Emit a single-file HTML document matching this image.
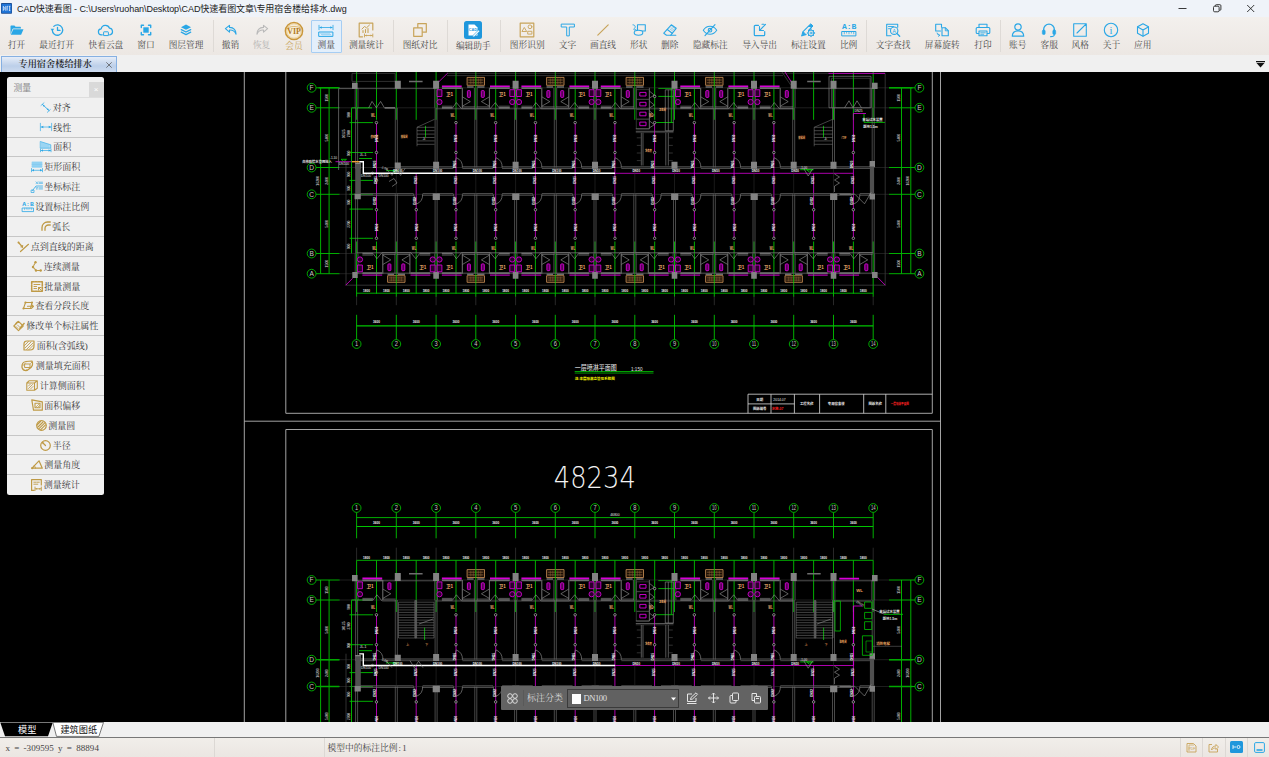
<!DOCTYPE html>
<html lang="zh"><head><meta charset="utf-8"><title>CAD快速看图</title>
<style>

*{box-sizing:border-box;margin:0;padding:0}
html,body{width:1269px;height:757px;overflow:hidden;background:#000}
body{position:relative;font-family:"Liberation Sans","Noto Sans CJK SC",sans-serif;}
.abs{position:absolute}
#title{left:0;top:0;width:1269px;height:17px;background:#eff3f9}
#title .t{position:absolute;left:17px;top:0.6px;height:17px;line-height:16px;font-size:9px;color:#1a1a1a;white-space:nowrap;letter-spacing:-0.06px}
#tool{left:0;top:17px;width:1269px;height:38.5px;background:linear-gradient(#f3f0ed,#ece7e3)}
.ti{position:absolute;top:0;height:38px;width:60px;margin-left:-30px;text-align:center}
.ti svg{position:absolute;left:50%;top:12.5px;transform:translate(-50%,-50%);overflow:visible}
.ti span{position:absolute;left:-10px;right:-10px;top:21.5px;line-height:12px;font-size:8.7px;color:#4a4a4a;font-family:"Liberation Serif","Noto Serif CJK SC",serif;white-space:nowrap}
.sep{position:absolute;top:3px;width:1px;height:32px;background:#dedad6}
#tabs{left:0;top:55px;width:1269px;height:17px;background:#f0f0f0}
#tab1{position:absolute;left:1px;top:0.8px;width:115.8px;height:16.2px;border:1px solid #86b0e2;border-bottom:none;background:linear-gradient(#e6edf8,#bccfe9 60%,#cddbef);font-family:"Liberation Serif","Noto Serif CJK SC",serif;font-weight:600;font-size:9.2px;line-height:13px;color:#222;white-space:nowrap}
#canvas{left:0;top:72px;width:1269px;height:650px;background:#000;overflow:hidden}
#btabs{left:0;top:722px;width:1269px;height:15.7px;background:#f0f0f0;border-bottom:1px solid #777}
#status{left:0;top:737.7px;width:1269px;height:19.3px;background:linear-gradient(#f1eeea,#ebe6e2)}
#status .s{position:absolute;top:1.3px;height:18px;line-height:18px;font-size:8.6px;color:#444;white-space:nowrap}
#panel{left:7.2px;top:77px;width:96.7px;height:417.5px;background:#f0f0f0;border-radius:2.5px;overflow:hidden}
#panel .hd{position:absolute;left:6.3px;top:1px;height:20px;line-height:21px;font-size:8.8px;color:#8a8a8a}
#panel .x{position:absolute;left:81.5px;top:5px;width:15px;height:15px;background:#d9d9d9;color:#fff;font-size:8px;line-height:15px;text-align:center}
.row{position:absolute;left:0;width:96.7px;height:19.87px;border-top:1px solid #c6c6c6;display:flex;align-items:center;justify-content:center;font-family:"Liberation Serif","Noto Serif CJK SC",serif;font-size:9px;color:#3a3a3a;white-space:nowrap}
.row svg{margin-right:1.5px;overflow:visible;flex:none}
#float{left:501px;top:685.5px;width:267px;height:24.5px;background:#636363;border-radius:1px}
#float .lab{position:absolute;left:26px;top:0;line-height:24px;font-size:9px;color:#d8d8d8;font-family:"Liberation Serif","Noto Serif CJK SC",serif}
#float .dd{position:absolute;left:66px;top:3px;width:112px;height:19.5px;border:1px solid #3a3a3a;background:#616161}
#float .sw{position:absolute;left:3.5px;top:4px;width:9.5px;height:10px;background:#fff}
#float .dn{position:absolute;left:15.5px;top:0;line-height:17.5px;font-size:8.6px;letter-spacing:-0.45px;color:#e0e0e0;font-family:"Liberation Serif","Noto Serif CJK SC",serif}

</style></head><body>
<div id="canvas" class="abs"><svg class="abs" style="left:0;top:0" width="1269" height="650" viewBox="0 72 1269 650"><path stroke="#b6b6b6" stroke-width="0.9" fill="none" d="M244.3 72.0L244.3 722.0M244.3 421.2L940.5 421.2M940.5 72.0L940.5 722.0M285.8 72.0L285.8 413.3L932.3 413.3L932.3 72.0M285.8 722.0L285.8 429.5L932.3 429.5L932.3 722.0"/>
<path stroke="#00c400" stroke-width="0.85" fill="none" d="M307.2 87.8a4.4 4.4 0 1 0 8.8 0a4.4 4.4 0 1 0 -8.8 0ZM307.2 107.8a4.4 4.4 0 1 0 8.8 0a4.4 4.4 0 1 0 -8.8 0ZM307.2 167.5a4.4 4.4 0 1 0 8.8 0a4.4 4.4 0 1 0 -8.8 0ZM307.2 194.3a4.4 4.4 0 1 0 8.8 0a4.4 4.4 0 1 0 -8.8 0ZM307.2 253.5a4.4 4.4 0 1 0 8.8 0a4.4 4.4 0 1 0 -8.8 0ZM307.2 273.7a4.4 4.4 0 1 0 8.8 0a4.4 4.4 0 1 0 -8.8 0ZM915.0 87.8a4.4 4.4 0 1 0 8.8 0a4.4 4.4 0 1 0 -8.8 0ZM915.0 107.8a4.4 4.4 0 1 0 8.8 0a4.4 4.4 0 1 0 -8.8 0ZM915.0 167.5a4.4 4.4 0 1 0 8.8 0a4.4 4.4 0 1 0 -8.8 0ZM915.0 194.3a4.4 4.4 0 1 0 8.8 0a4.4 4.4 0 1 0 -8.8 0ZM915.0 253.5a4.4 4.4 0 1 0 8.8 0a4.4 4.4 0 1 0 -8.8 0ZM915.0 273.7a4.4 4.4 0 1 0 8.8 0a4.4 4.4 0 1 0 -8.8 0ZM352.2 344.0a4.4 4.4 0 1 0 8.8 0a4.4 4.4 0 1 0 -8.8 0ZM391.9 344.0a4.4 4.4 0 1 0 8.8 0a4.4 4.4 0 1 0 -8.8 0ZM431.7 344.0a4.4 4.4 0 1 0 8.8 0a4.4 4.4 0 1 0 -8.8 0ZM471.4 344.0a4.4 4.4 0 1 0 8.8 0a4.4 4.4 0 1 0 -8.8 0ZM511.2 344.0a4.4 4.4 0 1 0 8.8 0a4.4 4.4 0 1 0 -8.8 0ZM550.9 344.0a4.4 4.4 0 1 0 8.8 0a4.4 4.4 0 1 0 -8.8 0ZM590.6 344.0a4.4 4.4 0 1 0 8.8 0a4.4 4.4 0 1 0 -8.8 0ZM630.4 344.0a4.4 4.4 0 1 0 8.8 0a4.4 4.4 0 1 0 -8.8 0ZM670.1 344.0a4.4 4.4 0 1 0 8.8 0a4.4 4.4 0 1 0 -8.8 0ZM709.9 344.0a4.4 4.4 0 1 0 8.8 0a4.4 4.4 0 1 0 -8.8 0ZM749.6 344.0a4.4 4.4 0 1 0 8.8 0a4.4 4.4 0 1 0 -8.8 0ZM789.3 344.0a4.4 4.4 0 1 0 8.8 0a4.4 4.4 0 1 0 -8.8 0ZM829.1 344.0a4.4 4.4 0 1 0 8.8 0a4.4 4.4 0 1 0 -8.8 0ZM868.8 344.0a4.4 4.4 0 1 0 8.8 0a4.4 4.4 0 1 0 -8.8 0ZM307.2 580.0a4.4 4.4 0 1 0 8.8 0a4.4 4.4 0 1 0 -8.8 0ZM307.2 600.0a4.4 4.4 0 1 0 8.8 0a4.4 4.4 0 1 0 -8.8 0ZM307.2 659.7a4.4 4.4 0 1 0 8.8 0a4.4 4.4 0 1 0 -8.8 0ZM307.2 686.5a4.4 4.4 0 1 0 8.8 0a4.4 4.4 0 1 0 -8.8 0ZM307.2 745.7a4.4 4.4 0 1 0 8.8 0a4.4 4.4 0 1 0 -8.8 0ZM307.2 765.9a4.4 4.4 0 1 0 8.8 0a4.4 4.4 0 1 0 -8.8 0ZM915.0 580.0a4.4 4.4 0 1 0 8.8 0a4.4 4.4 0 1 0 -8.8 0ZM915.0 600.0a4.4 4.4 0 1 0 8.8 0a4.4 4.4 0 1 0 -8.8 0ZM915.0 659.7a4.4 4.4 0 1 0 8.8 0a4.4 4.4 0 1 0 -8.8 0ZM915.0 686.5a4.4 4.4 0 1 0 8.8 0a4.4 4.4 0 1 0 -8.8 0ZM915.0 745.7a4.4 4.4 0 1 0 8.8 0a4.4 4.4 0 1 0 -8.8 0ZM915.0 765.9a4.4 4.4 0 1 0 8.8 0a4.4 4.4 0 1 0 -8.8 0ZM352.2 508.0a4.4 4.4 0 1 0 8.8 0a4.4 4.4 0 1 0 -8.8 0ZM391.9 508.0a4.4 4.4 0 1 0 8.8 0a4.4 4.4 0 1 0 -8.8 0ZM431.7 508.0a4.4 4.4 0 1 0 8.8 0a4.4 4.4 0 1 0 -8.8 0ZM471.4 508.0a4.4 4.4 0 1 0 8.8 0a4.4 4.4 0 1 0 -8.8 0ZM511.2 508.0a4.4 4.4 0 1 0 8.8 0a4.4 4.4 0 1 0 -8.8 0ZM550.9 508.0a4.4 4.4 0 1 0 8.8 0a4.4 4.4 0 1 0 -8.8 0ZM590.6 508.0a4.4 4.4 0 1 0 8.8 0a4.4 4.4 0 1 0 -8.8 0ZM630.4 508.0a4.4 4.4 0 1 0 8.8 0a4.4 4.4 0 1 0 -8.8 0ZM670.1 508.0a4.4 4.4 0 1 0 8.8 0a4.4 4.4 0 1 0 -8.8 0ZM709.9 508.0a4.4 4.4 0 1 0 8.8 0a4.4 4.4 0 1 0 -8.8 0ZM749.6 508.0a4.4 4.4 0 1 0 8.8 0a4.4 4.4 0 1 0 -8.8 0ZM789.3 508.0a4.4 4.4 0 1 0 8.8 0a4.4 4.4 0 1 0 -8.8 0ZM829.1 508.0a4.4 4.4 0 1 0 8.8 0a4.4 4.4 0 1 0 -8.8 0ZM868.8 508.0a4.4 4.4 0 1 0 8.8 0a4.4 4.4 0 1 0 -8.8 0Z"/>
<path stroke="#00b800" stroke-width="0.95" fill="none" d="M320.6 87.8L320.6 273.7M329.1 87.8L329.1 273.7M316.0 87.8L339.5 87.8M316.0 107.8L339.5 107.8M316.0 167.5L339.5 167.5M316.0 194.3L339.5 194.3M316.0 253.5L339.5 253.5M316.0 273.7L339.5 273.7M901.5 87.8L901.5 273.7M910.8 87.8L910.8 273.7M889.0 87.8L915.0 87.8M889.0 107.8L915.0 107.8M889.0 167.5L915.0 167.5M889.0 194.3L915.0 194.3M889.0 253.5L915.0 253.5M889.0 273.7L915.0 273.7M351.5 107.8L351.5 253.5M349.5 122.6L373.0 122.6M349.5 152.5L373.0 152.5M349.5 180.4L373.0 180.4M349.5 194.3L373.0 194.3M349.5 209.1L373.0 209.1M349.5 238.3L373.0 238.3M356.6 71.8L356.6 119.8M356.6 241.5L356.6 296.7M376.5 71.8L376.5 119.8M376.5 241.5L376.5 293.7M396.3 71.8L396.3 119.8M396.3 241.5L396.3 296.7M416.2 71.8L416.2 119.8M416.2 241.5L416.2 293.7M436.1 71.8L436.1 119.8M436.1 241.5L436.1 296.7M456.0 71.8L456.0 119.8M456.0 241.5L456.0 293.7M475.8 71.8L475.8 119.8M475.8 241.5L475.8 296.7M495.7 71.8L495.7 119.8M495.7 241.5L495.7 293.7M515.6 71.8L515.6 119.8M515.6 241.5L515.6 296.7M535.4 71.8L535.4 119.8M535.4 241.5L535.4 293.7M555.3 71.8L555.3 119.8M555.3 241.5L555.3 296.7M575.2 71.8L575.2 119.8M575.2 241.5L575.2 293.7M595.0 71.8L595.0 119.8M595.0 241.5L595.0 296.7M614.9 71.8L614.9 119.8M614.9 241.5L614.9 293.7M634.8 71.8L634.8 119.8M634.8 241.5L634.8 296.7M654.7 71.8L654.7 119.8M654.7 241.5L654.7 293.7M674.5 71.8L674.5 119.8M674.5 241.5L674.5 296.7M694.4 71.8L694.4 119.8M694.4 241.5L694.4 293.7M714.3 71.8L714.3 119.8M714.3 241.5L714.3 296.7M734.1 71.8L734.1 119.8M734.1 241.5L734.1 293.7M754.0 71.8L754.0 119.8M754.0 241.5L754.0 296.7M773.9 71.8L773.9 119.8M773.9 241.5L773.9 293.7M793.7 71.8L793.7 119.8M793.7 241.5L793.7 296.7M813.6 71.8L813.6 119.8M813.6 241.5L813.6 293.7M833.5 71.8L833.5 119.8M833.5 241.5L833.5 296.7M853.4 71.8L853.4 119.8M853.4 241.5L853.4 293.7M873.2 71.8L873.2 119.8M873.2 241.5L873.2 296.7M341.0 159.3L346.5 159.3L343.8 161.5ZM359.0 158.5L372.0 158.5M386.0 170.7L398.5 170.7M392.5 170.7L396.8 170.7L394.6 172.8ZM658.3 88.4L673.5 88.4M658.3 96.4L673.5 96.4M656.3 122.5L673.5 122.5M671.3 88.4L671.3 122.5M425.5 125.8L425.5 137.3M823.5 125.8L823.5 137.3M864.0 113.5L864.0 122.4L885.0 122.4M800.2 169.7L813.7 169.7M806.7 169.7L812.2 169.7L809.4 172.1ZM356.6 293.2L873.2 293.2M356.6 314.8L356.6 339.6M396.3 314.8L396.3 339.6M436.1 314.8L436.1 339.6M475.8 314.8L475.8 339.6M515.6 314.8L515.6 339.6M555.3 314.8L555.3 339.6M595.0 314.8L595.0 339.6M634.8 314.8L634.8 339.6M674.5 314.8L674.5 339.6M714.3 314.8L714.3 339.6M754.0 314.8L754.0 339.6M793.7 314.8L793.7 339.6M833.5 314.8L833.5 339.6M873.2 314.8L873.2 339.6M320.6 580.0L320.6 765.9M329.1 580.0L329.1 765.9M316.0 580.0L339.5 580.0M316.0 600.0L339.5 600.0M316.0 659.7L339.5 659.7M316.0 686.5L339.5 686.5M316.0 745.7L339.5 745.7M316.0 765.9L339.5 765.9M901.5 580.0L901.5 765.9M910.8 580.0L910.8 765.9M889.0 580.0L915.0 580.0M889.0 600.0L915.0 600.0M889.0 659.7L915.0 659.7M889.0 686.5L915.0 686.5M889.0 745.7L915.0 745.7M889.0 765.9L915.0 765.9M351.5 600.0L351.5 745.7M349.5 614.8L373.0 614.8M349.5 644.7L373.0 644.7M349.5 672.6L373.0 672.6M349.5 686.5L373.0 686.5M349.5 701.3L373.0 701.3M349.5 730.5L373.0 730.5M356.6 560.3L356.6 612.0M356.6 733.7L356.6 785.9M376.5 560.3L376.5 612.0M376.5 733.7L376.5 785.9M396.3 560.3L396.3 612.0M396.3 733.7L396.3 785.9M416.2 560.3L416.2 612.0M416.2 733.7L416.2 785.9M436.1 560.3L436.1 612.0M436.1 733.7L436.1 785.9M456.0 560.3L456.0 612.0M456.0 733.7L456.0 785.9M475.8 560.3L475.8 612.0M475.8 733.7L475.8 785.9M495.7 560.3L495.7 612.0M495.7 733.7L495.7 785.9M515.6 560.3L515.6 612.0M515.6 733.7L515.6 785.9M535.4 560.3L535.4 612.0M535.4 733.7L535.4 785.9M555.3 560.3L555.3 612.0M555.3 733.7L555.3 785.9M575.2 560.3L575.2 612.0M575.2 733.7L575.2 785.9M595.0 560.3L595.0 612.0M595.0 733.7L595.0 785.9M614.9 560.3L614.9 612.0M614.9 733.7L614.9 785.9M634.8 560.3L634.8 612.0M634.8 733.7L634.8 785.9M654.7 560.3L654.7 612.0M654.7 733.7L654.7 785.9M674.5 560.3L674.5 612.0M674.5 733.7L674.5 785.9M694.4 560.3L694.4 612.0M694.4 733.7L694.4 785.9M714.3 560.3L714.3 612.0M714.3 733.7L714.3 785.9M734.1 560.3L734.1 612.0M734.1 733.7L734.1 785.9M754.0 560.3L754.0 612.0M754.0 733.7L754.0 785.9M773.9 560.3L773.9 612.0M773.9 733.7L773.9 785.9M793.7 560.3L793.7 612.0M793.7 733.7L793.7 785.9M813.6 560.3L813.6 612.0M813.6 733.7L813.6 785.9M833.5 560.3L833.5 612.0M833.5 733.7L833.5 785.9M853.4 560.3L853.4 612.0M853.4 733.7L853.4 785.9M873.2 560.3L873.2 612.0M873.2 733.7L873.2 785.9M359.0 650.7L372.0 650.7M386.0 662.9L398.5 662.9M392.5 662.9L396.8 662.9L394.6 665.0ZM658.3 580.6L673.5 580.6M658.3 588.6L673.5 588.6M656.3 614.7L673.5 614.7M671.3 580.6L671.3 614.7M424.6 627.6L424.6 640.0M823.6 627.6L823.6 640.0M884.0 614.3L903.0 614.3M800.2 661.9L813.7 661.9M806.7 661.9L812.2 661.9L809.4 664.3ZM356.6 560.3L873.2 560.3M356.6 512.4L356.6 538.3M396.3 512.4L396.3 538.3M436.1 512.4L436.1 538.3M475.8 512.4L475.8 538.3M515.6 512.4L515.6 538.3M555.3 512.4L555.3 538.3M595.0 512.4L595.0 538.3M634.8 512.4L634.8 538.3M674.5 512.4L674.5 538.3M714.3 512.4L714.3 538.3M754.0 512.4L754.0 538.3M793.7 512.4L793.7 538.3M833.5 512.4L833.5 538.3M873.2 512.4L873.2 538.3M356.6 517.6L873.2 517.6"/>
<path stroke="#00a800" stroke-width="1.5" fill="none" d="M318.5 87.8L339.4 87.8M889.0 87.8L912.5 87.8M351.5 107.8L372.0 107.8M318.5 659.7L339.4 659.7M318.5 686.5L339.4 686.5M889.0 659.7L912.5 659.7M889.0 686.5L912.5 686.5M351.5 600.0L372.0 600.0"/>
<path stroke="#505050" stroke-width="0.6" fill="none" d="M346.0 161.5L346.0 285.2M885.2 73.3L885.2 285.2M346.0 285.2L885.2 285.2M447.0 73.3L885.2 73.3M447.0 75.6L783.0 75.6M782.0 72.0L790.5 84.8M636.3 89.6h13.0v9.6h-13.0ZM636.3 99.5h13.0v9.6h-13.0ZM636.3 109.4h13.0v9.6h-13.0ZM636.3 119.3h13.0v9.6h-13.0ZM635.8 132.6L673.5 132.6M636.8 137.8L640.8 137.8M668.8 137.8L672.8 137.8M636.8 145.4L640.8 145.4M668.8 145.4L672.8 145.4M636.8 153.0L640.8 153.0M668.8 153.0L672.8 153.0M636.8 160.6L640.8 160.6M668.8 160.6L672.8 160.6M352.0 73.4h43.2v8.0h-43.2ZM831.5 78.3h38.5v29.5h-38.5ZM346.0 653.7L346.0 777.4M636.3 581.8h13.0v9.6h-13.0ZM636.3 591.7h13.0v9.6h-13.0ZM636.3 601.6h13.0v9.6h-13.0ZM636.3 611.5h13.0v9.6h-13.0ZM635.8 624.8L673.5 624.8M636.8 630.0L640.8 630.0M668.8 630.0L672.8 630.0M636.8 637.6L640.8 637.6M668.8 637.6L672.8 637.6M636.8 645.2L640.8 645.2M668.8 645.2L672.8 645.2M636.8 652.8L640.8 652.8M668.8 652.8L672.8 652.8"/>
<path stroke="#d800d8" stroke-width="0.8" fill="none" d="M345.6 285.3L352.6 278.3M885.4 285.3L877.5 277.3M447.6 73.2L437.2 83.4M785.0 72.0L793.2 84.8M828.5 73.4L885.0 73.4M376.5 122.6L376.5 173.5M376.5 173.3L376.5 238.3M416.2 173.3L416.2 238.3M456.0 122.6L456.0 173.5M456.0 173.3L456.0 238.3M495.7 122.6L495.7 173.5M495.7 173.3L495.7 238.3M535.4 122.6L535.4 173.5M535.4 173.3L535.4 238.3M575.2 122.6L575.2 173.5M575.2 173.3L575.2 238.3M614.9 122.6L614.9 173.5M614.9 173.3L614.9 238.3M654.6 122.6L654.6 173.5M654.6 173.3L654.6 238.3M694.4 122.6L694.4 173.5M694.4 173.3L694.4 238.3M734.1 122.6L734.1 173.5M734.1 173.3L734.1 238.3M773.9 122.6L773.9 173.5M773.9 173.3L773.9 238.3M813.6 173.3L813.6 238.3M853.4 113.5L853.4 173.5M853.4 173.3L853.4 238.3M335.5 161.7L351.5 161.7M615.0 173.3L853.4 173.3M853.4 113.5L866.0 113.5M376.5 614.8L376.5 665.7M376.5 665.5L376.5 730.5M416.2 665.5L416.2 730.5M456.0 614.8L456.0 665.7M456.0 665.5L456.0 730.5M495.7 614.8L495.7 665.7M495.7 665.5L495.7 730.5M535.4 614.8L535.4 665.7M535.4 665.5L535.4 730.5M575.2 614.8L575.2 665.7M575.2 665.5L575.2 730.5M614.9 614.8L614.9 665.7M614.9 665.5L614.9 730.5M654.6 614.8L654.6 665.7M654.6 665.5L654.6 730.5M694.4 614.8L694.4 665.7M694.4 665.5L694.4 730.5M734.1 614.8L734.1 665.7M734.1 665.5L734.1 730.5M773.9 614.8L773.9 665.7M773.9 665.5L773.9 730.5M813.6 665.5L813.6 730.5M853.4 605.7L853.4 665.7M853.4 665.5L853.4 730.5M615.0 665.5L853.4 665.5M853.6 665.7L853.6 606.0L862.0 606.0"/>
<path stroke="#3c3c3c" stroke-width="0.5" fill="none" d="M339.0 87.8L889.0 87.8M339.0 107.8L889.0 107.8M339.0 167.5L889.0 167.5M339.0 194.3L889.0 194.3M339.0 253.5L889.0 253.5M339.0 273.7L889.0 273.7M339.0 580.0L889.0 580.0M339.0 600.0L889.0 600.0M339.0 659.7L889.0 659.7M339.0 686.5L889.0 686.5M339.0 745.7L889.0 745.7M339.0 765.9L889.0 765.9"/>
<path stroke="#686868" stroke-width="0.7" fill="none" d="M396.3 166.7L453.4 166.7M396.3 168.5L453.4 168.5M462.4 166.7L493.1 166.7M462.4 168.5L493.1 168.5M502.1 166.7L532.8 166.7M502.1 168.5L532.8 168.5M541.8 166.7L572.6 166.7M541.8 168.5L572.6 168.5M581.6 166.7L612.3 166.7M581.6 168.5L612.3 168.5M621.3 166.7L691.8 166.7M621.3 168.5L691.8 168.5M700.8 166.7L731.5 166.7M700.8 168.5L731.5 168.5M740.5 166.7L771.3 166.7M740.5 168.5L771.3 168.5M780.3 166.7L873.2 166.7M780.3 168.5L873.2 168.5M356.6 193.5L413.6 193.5M356.6 195.3L413.6 195.3M422.6 193.5L453.4 193.5M422.6 195.3L453.4 195.3M462.4 193.5L493.1 193.5M462.4 195.3L493.1 195.3M502.1 193.5L532.8 193.5M502.1 195.3L532.8 195.3M541.8 193.5L572.6 193.5M541.8 195.3L572.6 195.3M581.6 193.5L612.3 193.5M581.6 195.3L612.3 195.3M621.3 193.5L652.0 193.5M621.3 195.3L652.0 195.3M661.0 193.5L691.8 193.5M661.0 195.3L691.8 195.3M700.8 193.5L731.5 193.5M700.8 195.3L731.5 195.3M740.5 193.5L771.3 193.5M740.5 195.3L771.3 195.3M780.3 193.5L850.8 193.5M780.3 195.3L850.8 195.3M859.8 193.5L873.2 193.5M859.8 195.3L873.2 195.3M356.6 88.6L436.1 88.6M793.0 88.6L873.2 88.6M356.6 273.1L873.2 273.1M356.6 252.6L873.2 252.6M436.1 108.8L793.7 108.8M355.6 107.8L355.6 167.5M357.6 107.8L357.6 167.5M355.6 194.3L355.6 253.5M357.6 194.3L357.6 253.5M355.2 87.8L355.2 107.8M358.0 87.8L358.0 107.8M355.2 253.5L355.2 273.7M358.0 253.5L358.0 273.7M395.3 107.8L395.3 167.5M397.3 107.8L397.3 167.5M395.3 194.3L395.3 253.5M397.3 194.3L397.3 253.5M394.9 253.5L394.9 273.7M397.7 253.5L397.7 273.7M435.1 107.8L435.1 167.5M437.1 107.8L437.1 167.5M435.1 194.3L435.1 253.5M437.1 194.3L437.1 253.5M434.7 87.8L434.7 107.8M437.5 87.8L437.5 107.8M434.7 253.5L434.7 273.7M437.5 253.5L437.5 273.7M474.8 107.8L474.8 167.5M476.8 107.8L476.8 167.5M474.8 194.3L474.8 253.5M476.8 194.3L476.8 253.5M474.4 87.8L474.4 107.8M477.2 87.8L477.2 107.8M474.4 253.5L474.4 273.7M477.2 253.5L477.2 273.7M514.6 107.8L514.6 167.5M516.6 107.8L516.6 167.5M514.6 194.3L514.6 253.5M516.6 194.3L516.6 253.5M514.2 87.8L514.2 107.8M517.0 87.8L517.0 107.8M514.2 253.5L514.2 273.7M517.0 253.5L517.0 273.7M554.3 107.8L554.3 167.5M556.3 107.8L556.3 167.5M554.3 194.3L554.3 253.5M556.3 194.3L556.3 253.5M553.9 87.8L553.9 107.8M556.7 87.8L556.7 107.8M553.9 253.5L553.9 273.7M556.7 253.5L556.7 273.7M594.0 107.8L594.0 167.5M596.0 107.8L596.0 167.5M594.0 194.3L594.0 253.5M596.0 194.3L596.0 253.5M593.6 87.8L593.6 107.8M596.4 87.8L596.4 107.8M593.6 253.5L593.6 273.7M596.4 253.5L596.4 273.7M633.8 194.3L633.8 253.5M635.8 194.3L635.8 253.5M633.4 87.8L633.4 107.8M636.2 87.8L636.2 107.8M633.4 253.5L633.4 273.7M636.2 253.5L636.2 273.7M673.5 194.3L673.5 253.5M675.5 194.3L675.5 253.5M673.1 87.8L673.1 107.8M675.9 87.8L675.9 107.8M673.1 253.5L673.1 273.7M675.9 253.5L675.9 273.7M713.3 107.8L713.3 167.5M715.3 107.8L715.3 167.5M713.3 194.3L713.3 253.5M715.3 194.3L715.3 253.5M712.9 87.8L712.9 107.8M715.7 87.8L715.7 107.8M712.9 253.5L712.9 273.7M715.7 253.5L715.7 273.7M753.0 107.8L753.0 167.5M755.0 107.8L755.0 167.5M753.0 194.3L753.0 253.5M755.0 194.3L755.0 253.5M752.6 87.8L752.6 107.8M755.4 87.8L755.4 107.8M752.6 253.5L752.6 273.7M755.4 253.5L755.4 273.7M792.7 107.8L792.7 167.5M794.7 107.8L794.7 167.5M792.7 194.3L792.7 253.5M794.7 194.3L794.7 253.5M792.3 87.8L792.3 107.8M795.1 87.8L795.1 107.8M792.3 253.5L792.3 273.7M795.1 253.5L795.1 273.7M832.5 107.8L832.5 167.5M834.5 107.8L834.5 167.5M832.5 194.3L832.5 253.5M834.5 194.3L834.5 253.5M832.1 87.8L832.1 107.8M834.9 87.8L834.9 107.8M832.1 253.5L832.1 273.7M834.9 253.5L834.9 273.7M872.2 107.8L872.2 167.5M874.2 107.8L874.2 167.5M872.2 194.3L872.2 253.5M874.2 194.3L874.2 253.5M871.8 87.8L871.8 107.8M874.6 87.8L874.6 107.8M871.8 253.5L871.8 273.7M874.6 253.5L874.6 273.7M356.6 658.9L373.9 658.9M356.6 660.7L373.9 660.7M382.9 658.9L453.4 658.9M382.9 660.7L453.4 660.7M462.4 658.9L493.1 658.9M462.4 660.7L493.1 660.7M502.1 658.9L532.8 658.9M502.1 660.7L532.8 660.7M541.8 658.9L572.6 658.9M541.8 660.7L572.6 660.7M581.6 658.9L612.3 658.9M581.6 660.7L612.3 660.7M621.3 658.9L691.8 658.9M621.3 660.7L691.8 660.7M700.8 658.9L731.5 658.9M700.8 660.7L731.5 660.7M740.5 658.9L771.3 658.9M740.5 660.7L771.3 660.7M780.3 658.9L873.2 658.9M780.3 660.7L873.2 660.7M356.6 685.7L413.6 685.7M356.6 687.5L413.6 687.5M422.6 685.7L453.4 685.7M422.6 687.5L453.4 687.5M462.4 685.7L493.1 685.7M462.4 687.5L493.1 687.5M502.1 685.7L532.8 685.7M502.1 687.5L532.8 687.5M541.8 685.7L572.6 685.7M541.8 687.5L572.6 687.5M581.6 685.7L612.3 685.7M581.6 687.5L612.3 687.5M621.3 685.7L652.0 685.7M621.3 687.5L652.0 687.5M661.0 685.7L691.8 685.7M661.0 687.5L691.8 687.5M700.8 685.7L731.5 685.7M700.8 687.5L731.5 687.5M740.5 685.7L771.3 685.7M740.5 687.5L771.3 687.5M780.3 685.7L850.8 685.7M780.3 687.5L850.8 687.5M859.8 685.7L873.2 685.7M859.8 687.5L873.2 687.5M356.6 580.8L436.1 580.8M793.0 580.8L873.2 580.8M356.6 765.3L873.2 765.3M356.6 744.8L873.2 744.8M436.1 601.0L793.7 601.0M355.6 600.0L355.6 659.7M357.6 600.0L357.6 659.7M355.6 686.5L355.6 745.7M357.6 686.5L357.6 745.7M355.2 580.0L355.2 600.0M358.0 580.0L358.0 600.0M355.2 745.7L355.2 765.9M358.0 745.7L358.0 765.9M395.3 600.0L395.3 659.7M397.3 600.0L397.3 659.7M395.3 686.5L395.3 745.7M397.3 686.5L397.3 745.7M394.9 745.7L394.9 765.9M397.7 745.7L397.7 765.9M435.1 600.0L435.1 659.7M437.1 600.0L437.1 659.7M435.1 686.5L435.1 745.7M437.1 686.5L437.1 745.7M434.7 580.0L434.7 600.0M437.5 580.0L437.5 600.0M434.7 745.7L434.7 765.9M437.5 745.7L437.5 765.9M474.8 600.0L474.8 659.7M476.8 600.0L476.8 659.7M474.8 686.5L474.8 745.7M476.8 686.5L476.8 745.7M474.4 580.0L474.4 600.0M477.2 580.0L477.2 600.0M474.4 745.7L474.4 765.9M477.2 745.7L477.2 765.9M514.6 600.0L514.6 659.7M516.6 600.0L516.6 659.7M514.6 686.5L514.6 745.7M516.6 686.5L516.6 745.7M514.2 580.0L514.2 600.0M517.0 580.0L517.0 600.0M514.2 745.7L514.2 765.9M517.0 745.7L517.0 765.9M554.3 600.0L554.3 659.7M556.3 600.0L556.3 659.7M554.3 686.5L554.3 745.7M556.3 686.5L556.3 745.7M553.9 580.0L553.9 600.0M556.7 580.0L556.7 600.0M553.9 745.7L553.9 765.9M556.7 745.7L556.7 765.9M594.0 600.0L594.0 659.7M596.0 600.0L596.0 659.7M594.0 686.5L594.0 745.7M596.0 686.5L596.0 745.7M593.6 580.0L593.6 600.0M596.4 580.0L596.4 600.0M593.6 745.7L593.6 765.9M596.4 745.7L596.4 765.9M633.8 686.5L633.8 745.7M635.8 686.5L635.8 745.7M633.4 580.0L633.4 600.0M636.2 580.0L636.2 600.0M633.4 745.7L633.4 765.9M636.2 745.7L636.2 765.9M673.5 686.5L673.5 745.7M675.5 686.5L675.5 745.7M673.1 580.0L673.1 600.0M675.9 580.0L675.9 600.0M673.1 745.7L673.1 765.9M675.9 745.7L675.9 765.9M713.3 600.0L713.3 659.7M715.3 600.0L715.3 659.7M713.3 686.5L713.3 745.7M715.3 686.5L715.3 745.7M712.9 580.0L712.9 600.0M715.7 580.0L715.7 600.0M712.9 745.7L712.9 765.9M715.7 745.7L715.7 765.9M753.0 600.0L753.0 659.7M755.0 600.0L755.0 659.7M753.0 686.5L753.0 745.7M755.0 686.5L755.0 745.7M752.6 580.0L752.6 600.0M755.4 580.0L755.4 600.0M752.6 745.7L752.6 765.9M755.4 745.7L755.4 765.9M792.7 600.0L792.7 659.7M794.7 600.0L794.7 659.7M792.7 686.5L792.7 745.7M794.7 686.5L794.7 745.7M792.3 580.0L792.3 600.0M795.1 580.0L795.1 600.0M792.3 745.7L792.3 765.9M795.1 745.7L795.1 765.9M832.5 600.0L832.5 659.7M834.5 600.0L834.5 659.7M832.5 686.5L832.5 745.7M834.5 686.5L834.5 745.7M832.1 580.0L832.1 600.0M834.9 580.0L834.9 600.0M832.1 745.7L832.1 765.9M834.9 745.7L834.9 765.9M872.2 600.0L872.2 659.7M874.2 600.0L874.2 659.7M872.2 686.5L872.2 745.7M874.2 686.5L874.2 745.7M871.8 580.0L871.8 600.0M874.6 580.0L874.6 600.0M871.8 745.7L871.8 765.9M874.6 745.7L874.6 765.9"/>
<path stroke="#343434" stroke-width="0.5" fill="none" d="M356.6 167.5L356.6 194.3M396.3 167.5L396.3 194.3M436.1 167.5L436.1 194.3M475.8 167.5L475.8 194.3M515.6 167.5L515.6 194.3M555.3 167.5L555.3 194.3M595.0 167.5L595.0 194.3M634.8 167.5L634.8 194.3M674.5 167.5L674.5 194.3M714.3 167.5L714.3 194.3M754.0 167.5L754.0 194.3M793.7 167.5L793.7 194.3M833.5 167.5L833.5 194.3M873.2 167.5L873.2 194.3M356.6 659.7L356.6 686.5M396.3 659.7L396.3 686.5M436.1 659.7L436.1 686.5M475.8 659.7L475.8 686.5M515.6 659.7L515.6 686.5M555.3 659.7L555.3 686.5M595.0 659.7L595.0 686.5M634.8 659.7L634.8 686.5M674.5 659.7L674.5 686.5M714.3 659.7L714.3 686.5M754.0 659.7L754.0 686.5M793.7 659.7L793.7 686.5M833.5 659.7L833.5 686.5M873.2 659.7L873.2 686.5"/>
<path stroke="none" fill="#838383" d="M433.1 80.8h6.0v8.0h-6.0ZM433.1 161.7h6.0v7.0h-6.0ZM432.7 193.5h7.2v6.6h-7.2ZM433.3 271.9h5.6v6.8h-5.6ZM512.6 80.8h6.0v8.0h-6.0ZM512.6 161.7h6.0v7.0h-6.0ZM512.2 193.5h7.2v6.6h-7.2ZM512.8 271.9h5.6v6.8h-5.6ZM592.0 80.8h6.0v8.0h-6.0ZM592.0 161.7h6.0v7.0h-6.0ZM591.6 193.5h7.2v6.6h-7.2ZM592.2 271.9h5.6v6.8h-5.6ZM671.5 80.8h6.0v8.0h-6.0ZM671.5 161.7h6.0v7.0h-6.0ZM671.1 193.5h7.2v6.6h-7.2ZM671.7 271.9h5.6v6.8h-5.6ZM751.0 80.8h6.0v8.0h-6.0ZM751.0 161.7h6.0v7.0h-6.0ZM750.6 193.5h7.2v6.6h-7.2ZM751.2 271.9h5.6v6.8h-5.6ZM790.7 80.8h6.0v8.0h-6.0ZM790.7 161.7h6.0v7.0h-6.0ZM830.5 80.8h6.0v8.0h-6.0ZM830.5 161.7h6.0v7.0h-6.0ZM830.1 193.5h7.2v6.6h-7.2ZM830.7 271.9h5.6v6.8h-5.6ZM394.8 80.8h6.0v8.0h-6.0ZM394.8 162.5h6.0v6.2h-6.0ZM352.0 82.8h5.6v6.2h-5.6ZM872.0 82.8h5.6v6.2h-5.6ZM352.3 271.9h5.4v6.0h-5.4ZM872.0 271.9h5.6v6.0h-5.6ZM355.2 162.7h5.6v6.1h-5.6ZM354.6 193.5h6.2v5.8h-6.2ZM869.6 161.0h5.4v6.0h-5.4ZM869.6 193.5h5.4v6.0h-5.4ZM433.1 573.0h6.0v8.0h-6.0ZM433.1 653.9h6.0v7.0h-6.0ZM432.7 685.7h7.2v6.6h-7.2ZM433.3 764.1h5.6v6.8h-5.6ZM512.6 573.0h6.0v8.0h-6.0ZM512.6 653.9h6.0v7.0h-6.0ZM512.2 685.7h7.2v6.6h-7.2ZM512.8 764.1h5.6v6.8h-5.6ZM592.0 573.0h6.0v8.0h-6.0ZM592.0 653.9h6.0v7.0h-6.0ZM591.6 685.7h7.2v6.6h-7.2ZM592.2 764.1h5.6v6.8h-5.6ZM671.5 573.0h6.0v8.0h-6.0ZM671.5 653.9h6.0v7.0h-6.0ZM671.1 685.7h7.2v6.6h-7.2ZM671.7 764.1h5.6v6.8h-5.6ZM751.0 573.0h6.0v8.0h-6.0ZM751.0 653.9h6.0v7.0h-6.0ZM750.6 685.7h7.2v6.6h-7.2ZM751.2 764.1h5.6v6.8h-5.6ZM790.7 573.0h6.0v8.0h-6.0ZM790.7 653.9h6.0v7.0h-6.0ZM830.5 573.0h6.0v8.0h-6.0ZM830.5 653.9h6.0v7.0h-6.0ZM830.1 685.7h7.2v6.6h-7.2ZM830.7 764.1h5.6v6.8h-5.6ZM394.8 573.0h6.0v8.0h-6.0ZM394.8 654.7h6.0v6.2h-6.0ZM352.0 575.0h5.6v6.2h-5.6ZM872.0 575.0h5.6v6.2h-5.6ZM352.3 764.1h5.4v6.0h-5.4ZM872.0 764.1h5.6v6.0h-5.6ZM355.2 654.9h5.6v6.1h-5.6ZM354.6 685.7h6.2v5.8h-6.2ZM869.6 653.2h5.4v6.0h-5.4ZM869.6 685.7h5.4v6.0h-5.4Z"/>
<path stroke="none" fill="#505050" d="M355.2 164.0h5.6v29.8h-5.6ZM869.9 166.5h4.2v26.8h-4.2ZM355.2 656.2h5.6v29.8h-5.6ZM869.9 658.7h4.2v26.8h-4.2Z"/>
<path stroke="#e0e0e0" stroke-width="0.55" fill="#000" d="M375.2 122.6a1.2 1.2 0 1 0 2.5 0a1.2 1.2 0 1 0 -2.5 0ZM375.2 152.5a1.2 1.2 0 1 0 2.5 0a1.2 1.2 0 1 0 -2.5 0ZM375.2 209.7a1.2 1.2 0 1 0 2.5 0a1.2 1.2 0 1 0 -2.5 0ZM375.2 238.3a1.2 1.2 0 1 0 2.5 0a1.2 1.2 0 1 0 -2.5 0ZM375.2 180.4a1.2 1.2 0 1 0 2.5 0a1.2 1.2 0 1 0 -2.5 0ZM415.0 209.7a1.2 1.2 0 1 0 2.5 0a1.2 1.2 0 1 0 -2.5 0ZM415.0 238.3a1.2 1.2 0 1 0 2.5 0a1.2 1.2 0 1 0 -2.5 0ZM454.7 122.6a1.2 1.2 0 1 0 2.5 0a1.2 1.2 0 1 0 -2.5 0ZM454.7 152.5a1.2 1.2 0 1 0 2.5 0a1.2 1.2 0 1 0 -2.5 0ZM454.7 209.7a1.2 1.2 0 1 0 2.5 0a1.2 1.2 0 1 0 -2.5 0ZM454.7 238.3a1.2 1.2 0 1 0 2.5 0a1.2 1.2 0 1 0 -2.5 0ZM494.4 122.6a1.2 1.2 0 1 0 2.5 0a1.2 1.2 0 1 0 -2.5 0ZM494.4 152.5a1.2 1.2 0 1 0 2.5 0a1.2 1.2 0 1 0 -2.5 0ZM494.4 209.7a1.2 1.2 0 1 0 2.5 0a1.2 1.2 0 1 0 -2.5 0ZM494.4 238.3a1.2 1.2 0 1 0 2.5 0a1.2 1.2 0 1 0 -2.5 0ZM534.2 122.6a1.2 1.2 0 1 0 2.5 0a1.2 1.2 0 1 0 -2.5 0ZM534.2 152.5a1.2 1.2 0 1 0 2.5 0a1.2 1.2 0 1 0 -2.5 0ZM534.2 209.7a1.2 1.2 0 1 0 2.5 0a1.2 1.2 0 1 0 -2.5 0ZM534.2 238.3a1.2 1.2 0 1 0 2.5 0a1.2 1.2 0 1 0 -2.5 0ZM573.9 122.6a1.2 1.2 0 1 0 2.5 0a1.2 1.2 0 1 0 -2.5 0ZM573.9 152.5a1.2 1.2 0 1 0 2.5 0a1.2 1.2 0 1 0 -2.5 0ZM573.9 209.7a1.2 1.2 0 1 0 2.5 0a1.2 1.2 0 1 0 -2.5 0ZM573.9 238.3a1.2 1.2 0 1 0 2.5 0a1.2 1.2 0 1 0 -2.5 0ZM613.7 122.6a1.2 1.2 0 1 0 2.5 0a1.2 1.2 0 1 0 -2.5 0ZM613.7 152.5a1.2 1.2 0 1 0 2.5 0a1.2 1.2 0 1 0 -2.5 0ZM613.7 209.7a1.2 1.2 0 1 0 2.5 0a1.2 1.2 0 1 0 -2.5 0ZM613.7 238.3a1.2 1.2 0 1 0 2.5 0a1.2 1.2 0 1 0 -2.5 0ZM653.4 122.6a1.2 1.2 0 1 0 2.5 0a1.2 1.2 0 1 0 -2.5 0ZM653.4 152.5a1.2 1.2 0 1 0 2.5 0a1.2 1.2 0 1 0 -2.5 0ZM653.4 209.7a1.2 1.2 0 1 0 2.5 0a1.2 1.2 0 1 0 -2.5 0ZM653.4 238.3a1.2 1.2 0 1 0 2.5 0a1.2 1.2 0 1 0 -2.5 0ZM693.1 122.6a1.2 1.2 0 1 0 2.5 0a1.2 1.2 0 1 0 -2.5 0ZM693.1 152.5a1.2 1.2 0 1 0 2.5 0a1.2 1.2 0 1 0 -2.5 0ZM693.1 209.7a1.2 1.2 0 1 0 2.5 0a1.2 1.2 0 1 0 -2.5 0ZM693.1 238.3a1.2 1.2 0 1 0 2.5 0a1.2 1.2 0 1 0 -2.5 0ZM732.9 122.6a1.2 1.2 0 1 0 2.5 0a1.2 1.2 0 1 0 -2.5 0ZM732.9 152.5a1.2 1.2 0 1 0 2.5 0a1.2 1.2 0 1 0 -2.5 0ZM732.9 209.7a1.2 1.2 0 1 0 2.5 0a1.2 1.2 0 1 0 -2.5 0ZM732.9 238.3a1.2 1.2 0 1 0 2.5 0a1.2 1.2 0 1 0 -2.5 0ZM772.6 122.6a1.2 1.2 0 1 0 2.5 0a1.2 1.2 0 1 0 -2.5 0ZM772.6 152.5a1.2 1.2 0 1 0 2.5 0a1.2 1.2 0 1 0 -2.5 0ZM772.6 209.7a1.2 1.2 0 1 0 2.5 0a1.2 1.2 0 1 0 -2.5 0ZM772.6 238.3a1.2 1.2 0 1 0 2.5 0a1.2 1.2 0 1 0 -2.5 0ZM812.4 209.7a1.2 1.2 0 1 0 2.5 0a1.2 1.2 0 1 0 -2.5 0ZM812.4 238.3a1.2 1.2 0 1 0 2.5 0a1.2 1.2 0 1 0 -2.5 0ZM852.1 152.5a1.2 1.2 0 1 0 2.5 0a1.2 1.2 0 1 0 -2.5 0ZM852.1 209.7a1.2 1.2 0 1 0 2.5 0a1.2 1.2 0 1 0 -2.5 0ZM852.1 238.3a1.2 1.2 0 1 0 2.5 0a1.2 1.2 0 1 0 -2.5 0ZM653.4 96.4a1.2 1.2 0 1 0 2.5 0a1.2 1.2 0 1 0 -2.5 0ZM375.2 614.8a1.2 1.2 0 1 0 2.5 0a1.2 1.2 0 1 0 -2.5 0ZM375.2 644.7a1.2 1.2 0 1 0 2.5 0a1.2 1.2 0 1 0 -2.5 0ZM375.2 701.9a1.2 1.2 0 1 0 2.5 0a1.2 1.2 0 1 0 -2.5 0ZM375.2 730.5a1.2 1.2 0 1 0 2.5 0a1.2 1.2 0 1 0 -2.5 0ZM375.2 672.6a1.2 1.2 0 1 0 2.5 0a1.2 1.2 0 1 0 -2.5 0ZM415.0 701.9a1.2 1.2 0 1 0 2.5 0a1.2 1.2 0 1 0 -2.5 0ZM415.0 730.5a1.2 1.2 0 1 0 2.5 0a1.2 1.2 0 1 0 -2.5 0ZM454.7 614.8a1.2 1.2 0 1 0 2.5 0a1.2 1.2 0 1 0 -2.5 0ZM454.7 644.7a1.2 1.2 0 1 0 2.5 0a1.2 1.2 0 1 0 -2.5 0ZM454.7 701.9a1.2 1.2 0 1 0 2.5 0a1.2 1.2 0 1 0 -2.5 0ZM454.7 730.5a1.2 1.2 0 1 0 2.5 0a1.2 1.2 0 1 0 -2.5 0ZM494.4 614.8a1.2 1.2 0 1 0 2.5 0a1.2 1.2 0 1 0 -2.5 0ZM494.4 644.7a1.2 1.2 0 1 0 2.5 0a1.2 1.2 0 1 0 -2.5 0ZM494.4 701.9a1.2 1.2 0 1 0 2.5 0a1.2 1.2 0 1 0 -2.5 0ZM494.4 730.5a1.2 1.2 0 1 0 2.5 0a1.2 1.2 0 1 0 -2.5 0ZM534.2 614.8a1.2 1.2 0 1 0 2.5 0a1.2 1.2 0 1 0 -2.5 0ZM534.2 644.7a1.2 1.2 0 1 0 2.5 0a1.2 1.2 0 1 0 -2.5 0ZM534.2 701.9a1.2 1.2 0 1 0 2.5 0a1.2 1.2 0 1 0 -2.5 0ZM534.2 730.5a1.2 1.2 0 1 0 2.5 0a1.2 1.2 0 1 0 -2.5 0ZM573.9 614.8a1.2 1.2 0 1 0 2.5 0a1.2 1.2 0 1 0 -2.5 0ZM573.9 644.7a1.2 1.2 0 1 0 2.5 0a1.2 1.2 0 1 0 -2.5 0ZM573.9 701.9a1.2 1.2 0 1 0 2.5 0a1.2 1.2 0 1 0 -2.5 0ZM573.9 730.5a1.2 1.2 0 1 0 2.5 0a1.2 1.2 0 1 0 -2.5 0ZM613.7 614.8a1.2 1.2 0 1 0 2.5 0a1.2 1.2 0 1 0 -2.5 0ZM613.7 644.7a1.2 1.2 0 1 0 2.5 0a1.2 1.2 0 1 0 -2.5 0ZM613.7 701.9a1.2 1.2 0 1 0 2.5 0a1.2 1.2 0 1 0 -2.5 0ZM613.7 730.5a1.2 1.2 0 1 0 2.5 0a1.2 1.2 0 1 0 -2.5 0ZM653.4 614.8a1.2 1.2 0 1 0 2.5 0a1.2 1.2 0 1 0 -2.5 0ZM653.4 644.7a1.2 1.2 0 1 0 2.5 0a1.2 1.2 0 1 0 -2.5 0ZM653.4 701.9a1.2 1.2 0 1 0 2.5 0a1.2 1.2 0 1 0 -2.5 0ZM653.4 730.5a1.2 1.2 0 1 0 2.5 0a1.2 1.2 0 1 0 -2.5 0ZM693.1 614.8a1.2 1.2 0 1 0 2.5 0a1.2 1.2 0 1 0 -2.5 0ZM693.1 644.7a1.2 1.2 0 1 0 2.5 0a1.2 1.2 0 1 0 -2.5 0ZM693.1 701.9a1.2 1.2 0 1 0 2.5 0a1.2 1.2 0 1 0 -2.5 0ZM693.1 730.5a1.2 1.2 0 1 0 2.5 0a1.2 1.2 0 1 0 -2.5 0ZM732.9 614.8a1.2 1.2 0 1 0 2.5 0a1.2 1.2 0 1 0 -2.5 0ZM732.9 644.7a1.2 1.2 0 1 0 2.5 0a1.2 1.2 0 1 0 -2.5 0ZM732.9 701.9a1.2 1.2 0 1 0 2.5 0a1.2 1.2 0 1 0 -2.5 0ZM732.9 730.5a1.2 1.2 0 1 0 2.5 0a1.2 1.2 0 1 0 -2.5 0ZM772.6 614.8a1.2 1.2 0 1 0 2.5 0a1.2 1.2 0 1 0 -2.5 0ZM772.6 644.7a1.2 1.2 0 1 0 2.5 0a1.2 1.2 0 1 0 -2.5 0ZM772.6 701.9a1.2 1.2 0 1 0 2.5 0a1.2 1.2 0 1 0 -2.5 0ZM772.6 730.5a1.2 1.2 0 1 0 2.5 0a1.2 1.2 0 1 0 -2.5 0ZM812.4 701.9a1.2 1.2 0 1 0 2.5 0a1.2 1.2 0 1 0 -2.5 0ZM812.4 730.5a1.2 1.2 0 1 0 2.5 0a1.2 1.2 0 1 0 -2.5 0ZM852.1 644.7a1.2 1.2 0 1 0 2.5 0a1.2 1.2 0 1 0 -2.5 0ZM852.1 701.9a1.2 1.2 0 1 0 2.5 0a1.2 1.2 0 1 0 -2.5 0ZM852.1 730.5a1.2 1.2 0 1 0 2.5 0a1.2 1.2 0 1 0 -2.5 0ZM653.4 588.6a1.2 1.2 0 1 0 2.5 0a1.2 1.2 0 1 0 -2.5 0Z"/>
<path stroke="#ffffff" stroke-width="1.4" fill="none" d="M359.2 161.7L363.3 161.7L363.3 173.3L615.0 173.3M359.2 653.9L363.3 653.9L363.3 665.5L615.0 665.5"/>
<path stroke="#f0a030" stroke-width="1.4" fill="none" d="M352.0 161.7L359.2 161.7"/>
<path stroke="#ddd" stroke-width="0.5" fill="none" d="M371.3 173.3a1.2 1.2 0 1 0 2.4 0a1.2 1.2 0 1 0 -2.4 0ZM371.3 665.5a1.2 1.2 0 1 0 2.4 0a1.2 1.2 0 1 0 -2.4 0Z"/>
<path stroke="#9a9a9a" stroke-width="0.6" fill="none" d="M413.6 194.3L416.5 204.1A10 10 0 0 0 422.6 194.3M453.4 167.5L456.3 157.7A10 10 0 0 1 462.4 167.5M453.4 194.3L456.3 204.1A10 10 0 0 0 462.4 194.3M493.1 167.5L496.0 157.7A10 10 0 0 1 502.1 167.5M493.1 194.3L496.0 204.1A10 10 0 0 0 502.1 194.3M532.8 167.5L535.7 157.7A10 10 0 0 1 541.8 167.5M532.8 194.3L535.7 204.1A10 10 0 0 0 541.8 194.3M572.6 167.5L575.5 157.7A10 10 0 0 1 581.6 167.5M572.6 194.3L575.5 204.1A10 10 0 0 0 581.6 194.3M612.3 167.5L615.2 157.7A10 10 0 0 1 621.3 167.5M612.3 194.3L615.2 204.1A10 10 0 0 0 621.3 194.3M652.0 194.3L654.9 204.1A10 10 0 0 0 661.0 194.3M691.8 167.5L694.7 157.7A10 10 0 0 1 700.8 167.5M691.8 194.3L694.7 204.1A10 10 0 0 0 700.8 194.3M731.5 167.5L734.4 157.7A10 10 0 0 1 740.5 167.5M731.5 194.3L734.4 204.1A10 10 0 0 0 740.5 194.3M771.3 167.5L774.2 157.7A10 10 0 0 1 780.3 167.5M771.3 194.3L774.2 204.1A10 10 0 0 0 780.3 194.3M850.8 194.3L853.6 204.1A10 10 0 0 0 859.8 194.3M462.3 96.8L470.3 101.6L462.3 106.2M452.6 107.8L456.4 102.6L461.6 108.8M489.4 96.8L481.4 101.6L489.4 106.2M499.1 107.8L495.3 102.6L490.1 108.8M541.8 96.8L549.8 101.6L541.8 106.2M532.1 107.8L535.9 102.6L541.1 108.8M568.8 96.8L560.8 101.6L568.8 106.2M578.5 107.8L574.7 102.6L569.5 108.8M621.2 96.8L629.2 101.6L621.2 106.2M611.5 107.8L615.3 102.6L620.5 108.8M700.7 96.8L708.7 101.6L700.7 106.2M691.0 107.8L694.8 102.6L700.0 108.8M727.8 96.8L719.8 101.6L727.8 106.2M737.5 107.8L733.7 102.6L728.5 108.8M780.2 96.8L788.2 101.6L780.2 106.2M770.5 107.8L774.3 102.6L779.5 108.8M382.8 255.1L390.8 259.9L382.8 264.5M373.1 253.5L376.9 258.7L382.1 252.5M409.9 255.1L401.9 259.9L409.9 264.5M419.6 253.5L415.8 258.7L410.6 252.5M462.3 255.1L470.3 259.9L462.3 264.5M452.6 253.5L456.4 258.7L461.6 252.5M489.4 255.1L481.4 259.9L489.4 264.5M499.1 253.5L495.3 258.7L490.1 252.5M541.8 255.1L549.8 259.9L541.8 264.5M532.1 253.5L535.9 258.7L541.1 252.5M568.8 255.1L560.8 259.9L568.8 264.5M578.5 253.5L574.7 258.7L569.5 252.5M621.2 255.1L629.2 259.9L621.2 264.5M611.5 253.5L615.3 258.7L620.5 252.5M648.3 255.1L640.3 259.9L648.3 264.5M658.0 253.5L654.2 258.7L649.0 252.5M700.7 255.1L708.7 259.9L700.7 264.5M691.0 253.5L694.8 258.7L700.0 252.5M727.8 255.1L719.8 259.9L727.8 264.5M737.5 253.5L733.7 258.7L728.5 252.5M780.2 255.1L788.2 259.9L780.2 264.5M770.5 253.5L774.3 258.7L779.5 252.5M807.3 255.1L799.3 259.9L807.3 264.5M817.0 253.5L813.2 258.7L808.0 252.5M859.7 255.1L867.7 259.9L859.7 264.5M850.0 253.5L853.8 258.7L859.0 252.5M649.4 91.1L654.3 95.1L649.4 98.1M649.4 101.0L654.3 105.0L649.4 108.0M649.4 110.9L654.3 114.9L649.4 117.9M649.4 120.8L654.3 124.8L649.4 127.8M368.7 107.8L372.0 101.4L376.4 107.8L380.6 101.4L384.4 107.8M386.0 168.5L392.0 175.5M392.0 175.5L396.3 169.0L400.6 175.5L405.0 168.5M389.0 181.5L394.0 178.5L397.0 183.0L392.0 186.5M844.5 107.8L849.0 100.8L853.0 107.8L857.0 100.8L861.5 107.8M803.7 168.5L808.2 176.0L812.7 169.0M834.5 174.0l5 3-5 3 5 3-5 3 0 6M855.0 194.3L864.5 203.8L871.2 192.3M373.9 659.7L376.8 649.9A10 10 0 0 1 382.9 659.7M413.6 686.5L416.5 696.3A10 10 0 0 0 422.6 686.5M453.4 659.7L456.3 649.9A10 10 0 0 1 462.4 659.7M453.4 686.5L456.3 696.3A10 10 0 0 0 462.4 686.5M493.1 659.7L496.0 649.9A10 10 0 0 1 502.1 659.7M493.1 686.5L496.0 696.3A10 10 0 0 0 502.1 686.5M532.8 659.7L535.7 649.9A10 10 0 0 1 541.8 659.7M532.8 686.5L535.7 696.3A10 10 0 0 0 541.8 686.5M572.6 659.7L575.5 649.9A10 10 0 0 1 581.6 659.7M572.6 686.5L575.5 696.3A10 10 0 0 0 581.6 686.5M612.3 659.7L615.2 649.9A10 10 0 0 1 621.3 659.7M612.3 686.5L615.2 696.3A10 10 0 0 0 621.3 686.5M652.0 686.5L654.9 696.3A10 10 0 0 0 661.0 686.5M691.8 659.7L694.7 649.9A10 10 0 0 1 700.8 659.7M691.8 686.5L694.7 696.3A10 10 0 0 0 700.8 686.5M731.5 659.7L734.4 649.9A10 10 0 0 1 740.5 659.7M731.5 686.5L734.4 696.3A10 10 0 0 0 740.5 686.5M771.3 659.7L774.2 649.9A10 10 0 0 1 780.3 659.7M771.3 686.5L774.2 696.3A10 10 0 0 0 780.3 686.5M850.8 686.5L853.6 696.3A10 10 0 0 0 859.8 686.5M382.8 589.0L390.8 593.8L382.8 598.4M373.1 600.0L376.9 594.8L382.1 601.0M462.3 589.0L470.3 593.8L462.3 598.4M452.6 600.0L456.4 594.8L461.6 601.0M489.4 589.0L481.4 593.8L489.4 598.4M499.1 600.0L495.3 594.8L490.1 601.0M541.8 589.0L549.8 593.8L541.8 598.4M532.1 600.0L535.9 594.8L541.1 601.0M568.8 589.0L560.8 593.8L568.8 598.4M578.5 600.0L574.7 594.8L569.5 601.0M621.2 589.0L629.2 593.8L621.2 598.4M611.5 600.0L615.3 594.8L620.5 601.0M700.7 589.0L708.7 593.8L700.7 598.4M691.0 600.0L694.8 594.8L700.0 601.0M727.8 589.0L719.8 593.8L727.8 598.4M737.5 600.0L733.7 594.8L728.5 601.0M780.2 589.0L788.2 593.8L780.2 598.4M770.5 600.0L774.3 594.8L779.5 601.0M382.8 747.3L390.8 752.1L382.8 756.7M373.1 745.7L376.9 750.9L382.1 744.7M409.9 747.3L401.9 752.1L409.9 756.7M419.6 745.7L415.8 750.9L410.6 744.7M462.3 747.3L470.3 752.1L462.3 756.7M452.6 745.7L456.4 750.9L461.6 744.7M489.4 747.3L481.4 752.1L489.4 756.7M499.1 745.7L495.3 750.9L490.1 744.7M541.8 747.3L549.8 752.1L541.8 756.7M532.1 745.7L535.9 750.9L541.1 744.7M568.8 747.3L560.8 752.1L568.8 756.7M578.5 745.7L574.7 750.9L569.5 744.7M621.2 747.3L629.2 752.1L621.2 756.7M611.5 745.7L615.3 750.9L620.5 744.7M648.3 747.3L640.3 752.1L648.3 756.7M658.0 745.7L654.2 750.9L649.0 744.7M700.7 747.3L708.7 752.1L700.7 756.7M691.0 745.7L694.8 750.9L700.0 744.7M727.8 747.3L719.8 752.1L727.8 756.7M737.5 745.7L733.7 750.9L728.5 744.7M780.2 747.3L788.2 752.1L780.2 756.7M770.5 745.7L774.3 750.9L779.5 744.7M807.3 747.3L799.3 752.1L807.3 756.7M817.0 745.7L813.2 750.9L808.0 744.7M859.7 747.3L867.7 752.1L859.7 756.7M850.0 745.7L853.8 750.9L859.0 744.7M649.4 583.3L654.3 587.3L649.4 590.3M649.4 593.2L654.3 597.2L649.4 600.2M649.4 603.1L654.3 607.1L649.4 610.1M649.4 613.0L654.3 617.0L649.4 620.0M419.0 624.0L433.0 619.0M386.0 660.7L392.0 667.7M410.0 660.7L414.3 667.7L418.6 661.2L423.0 667.7M817.0 624.0L831.0 619.0M803.7 660.7L808.2 668.2L812.7 661.2M834.5 666.2l5 3-5 3 5 3-5 3 0 6M855.0 686.5L864.5 696.0L871.2 684.5"/>
<path stroke="#d800d8" stroke-width="0.85" fill="#2a002a" d="M437.1 89.7h4.8v6.8h-4.8ZM436.9 102.0a2.6 2.6 0 1 0 5.2 0a2.6 2.6 0 1 0 -5.2 0ZM509.8 89.7h4.8v6.8h-4.8ZM509.6 102.0a2.6 2.6 0 1 0 5.2 0a2.6 2.6 0 1 0 -5.2 0ZM516.6 89.7h4.8v6.8h-4.8ZM516.4 102.0a2.6 2.6 0 1 0 5.2 0a2.6 2.6 0 1 0 -5.2 0ZM589.2 89.7h4.8v6.8h-4.8ZM589.0 102.0a2.6 2.6 0 1 0 5.2 0a2.6 2.6 0 1 0 -5.2 0ZM596.0 89.7h4.8v6.8h-4.8ZM595.8 102.0a2.6 2.6 0 1 0 5.2 0a2.6 2.6 0 1 0 -5.2 0ZM675.5 89.7h4.8v6.8h-4.8ZM675.3 102.0a2.6 2.6 0 1 0 5.2 0a2.6 2.6 0 1 0 -5.2 0ZM748.2 89.7h4.8v6.8h-4.8ZM748.0 102.0a2.6 2.6 0 1 0 5.2 0a2.6 2.6 0 1 0 -5.2 0ZM755.0 89.7h4.8v6.8h-4.8ZM754.8 102.0a2.6 2.6 0 1 0 5.2 0a2.6 2.6 0 1 0 -5.2 0ZM357.6 265.0h4.8v6.8h-4.8ZM357.4 259.5a2.6 2.6 0 1 0 5.2 0a2.6 2.6 0 1 0 -5.2 0ZM430.3 265.0h4.8v6.8h-4.8ZM430.1 259.5a2.6 2.6 0 1 0 5.2 0a2.6 2.6 0 1 0 -5.2 0ZM437.1 265.0h4.8v6.8h-4.8ZM436.9 259.5a2.6 2.6 0 1 0 5.2 0a2.6 2.6 0 1 0 -5.2 0ZM509.8 265.0h4.8v6.8h-4.8ZM509.6 259.5a2.6 2.6 0 1 0 5.2 0a2.6 2.6 0 1 0 -5.2 0ZM516.6 265.0h4.8v6.8h-4.8ZM516.4 259.5a2.6 2.6 0 1 0 5.2 0a2.6 2.6 0 1 0 -5.2 0ZM589.2 265.0h4.8v6.8h-4.8ZM589.0 259.5a2.6 2.6 0 1 0 5.2 0a2.6 2.6 0 1 0 -5.2 0ZM596.0 265.0h4.8v6.8h-4.8ZM595.8 259.5a2.6 2.6 0 1 0 5.2 0a2.6 2.6 0 1 0 -5.2 0ZM668.7 265.0h4.8v6.8h-4.8ZM668.5 259.5a2.6 2.6 0 1 0 5.2 0a2.6 2.6 0 1 0 -5.2 0ZM675.5 265.0h4.8v6.8h-4.8ZM675.3 259.5a2.6 2.6 0 1 0 5.2 0a2.6 2.6 0 1 0 -5.2 0ZM748.2 265.0h4.8v6.8h-4.8ZM748.0 259.5a2.6 2.6 0 1 0 5.2 0a2.6 2.6 0 1 0 -5.2 0ZM755.0 265.0h4.8v6.8h-4.8ZM754.8 259.5a2.6 2.6 0 1 0 5.2 0a2.6 2.6 0 1 0 -5.2 0ZM827.7 265.0h4.8v6.8h-4.8ZM827.5 259.5a2.6 2.6 0 1 0 5.2 0a2.6 2.6 0 1 0 -5.2 0ZM834.5 265.0h4.8v6.8h-4.8ZM834.3 259.5a2.6 2.6 0 1 0 5.2 0a2.6 2.6 0 1 0 -5.2 0ZM357.6 581.9h4.8v6.8h-4.8ZM357.4 594.2a2.6 2.6 0 1 0 5.2 0a2.6 2.6 0 1 0 -5.2 0ZM437.1 581.9h4.8v6.8h-4.8ZM436.9 594.2a2.6 2.6 0 1 0 5.2 0a2.6 2.6 0 1 0 -5.2 0ZM509.8 581.9h4.8v6.8h-4.8ZM509.6 594.2a2.6 2.6 0 1 0 5.2 0a2.6 2.6 0 1 0 -5.2 0ZM516.6 581.9h4.8v6.8h-4.8ZM516.4 594.2a2.6 2.6 0 1 0 5.2 0a2.6 2.6 0 1 0 -5.2 0ZM589.2 581.9h4.8v6.8h-4.8ZM589.0 594.2a2.6 2.6 0 1 0 5.2 0a2.6 2.6 0 1 0 -5.2 0ZM596.0 581.9h4.8v6.8h-4.8ZM595.8 594.2a2.6 2.6 0 1 0 5.2 0a2.6 2.6 0 1 0 -5.2 0ZM675.5 581.9h4.8v6.8h-4.8ZM675.3 594.2a2.6 2.6 0 1 0 5.2 0a2.6 2.6 0 1 0 -5.2 0ZM748.2 581.9h4.8v6.8h-4.8ZM748.0 594.2a2.6 2.6 0 1 0 5.2 0a2.6 2.6 0 1 0 -5.2 0ZM755.0 581.9h4.8v6.8h-4.8ZM754.8 594.2a2.6 2.6 0 1 0 5.2 0a2.6 2.6 0 1 0 -5.2 0ZM357.6 757.2h4.8v6.8h-4.8ZM357.4 751.7a2.6 2.6 0 1 0 5.2 0a2.6 2.6 0 1 0 -5.2 0ZM430.3 757.2h4.8v6.8h-4.8ZM430.1 751.7a2.6 2.6 0 1 0 5.2 0a2.6 2.6 0 1 0 -5.2 0ZM437.1 757.2h4.8v6.8h-4.8ZM436.9 751.7a2.6 2.6 0 1 0 5.2 0a2.6 2.6 0 1 0 -5.2 0ZM509.8 757.2h4.8v6.8h-4.8ZM509.6 751.7a2.6 2.6 0 1 0 5.2 0a2.6 2.6 0 1 0 -5.2 0ZM516.6 757.2h4.8v6.8h-4.8ZM516.4 751.7a2.6 2.6 0 1 0 5.2 0a2.6 2.6 0 1 0 -5.2 0ZM589.2 757.2h4.8v6.8h-4.8ZM589.0 751.7a2.6 2.6 0 1 0 5.2 0a2.6 2.6 0 1 0 -5.2 0ZM596.0 757.2h4.8v6.8h-4.8ZM595.8 751.7a2.6 2.6 0 1 0 5.2 0a2.6 2.6 0 1 0 -5.2 0ZM668.7 757.2h4.8v6.8h-4.8ZM668.5 751.7a2.6 2.6 0 1 0 5.2 0a2.6 2.6 0 1 0 -5.2 0ZM675.5 757.2h4.8v6.8h-4.8ZM675.3 751.7a2.6 2.6 0 1 0 5.2 0a2.6 2.6 0 1 0 -5.2 0ZM748.2 757.2h4.8v6.8h-4.8ZM748.0 751.7a2.6 2.6 0 1 0 5.2 0a2.6 2.6 0 1 0 -5.2 0ZM755.0 757.2h4.8v6.8h-4.8ZM754.8 751.7a2.6 2.6 0 1 0 5.2 0a2.6 2.6 0 1 0 -5.2 0ZM827.7 757.2h4.8v6.8h-4.8ZM827.5 751.7a2.6 2.6 0 1 0 5.2 0a2.6 2.6 0 1 0 -5.2 0ZM834.5 757.2h4.8v6.8h-4.8ZM834.3 751.7a2.6 2.6 0 1 0 5.2 0a2.6 2.6 0 1 0 -5.2 0Z"/>
<path stroke="#d800d8" stroke-width="1.8" fill="none" d="M441.9 86.3L461.7 86.3M509.8 86.3L490.0 86.3M521.4 86.3L541.2 86.3M589.2 86.3L569.4 86.3M600.8 86.3L620.6 86.3M680.3 86.3L700.1 86.3M748.2 86.3L728.4 86.3M759.8 86.3L779.6 86.3M362.4 578.5L382.2 578.5M441.9 578.5L461.7 578.5M509.8 578.5L490.0 578.5M521.4 578.5L541.2 578.5M589.2 578.5L569.4 578.5M600.8 578.5L620.6 578.5M680.3 578.5L700.1 578.5M748.2 578.5L728.4 578.5M759.8 578.5L779.6 578.5M839.3 578.6L859.1 578.6"/>
<path stroke="#6e6e6e" stroke-width="1.7" fill="none" d="M441.9 88.1L461.7 88.1M441.9 107.8L452.6 107.8M509.8 88.1L490.0 88.1M509.8 107.8L499.1 107.8M521.4 88.1L541.2 88.1M521.4 107.8L532.1 107.8M589.2 88.1L569.4 88.1M589.2 107.8L578.5 107.8M600.8 88.1L620.6 88.1M600.8 107.8L611.5 107.8M680.3 88.1L700.1 88.1M680.3 107.8L691.0 107.8M748.2 88.1L728.4 88.1M748.2 107.8L737.5 107.8M759.8 88.1L779.6 88.1M759.8 107.8L770.5 107.8M362.4 253.5L373.1 253.5M430.3 253.5L419.6 253.5M441.9 253.5L452.6 253.5M509.8 253.5L499.1 253.5M521.4 253.5L532.1 253.5M589.2 253.5L578.5 253.5M600.8 253.5L611.5 253.5M668.7 253.5L658.0 253.5M680.3 253.5L691.0 253.5M748.2 253.5L737.5 253.5M759.8 253.5L770.5 253.5M827.7 253.5L817.0 253.5M839.3 253.5L850.0 253.5M384.6 107.8L395.0 107.8M362.4 580.3L382.2 580.3M362.4 600.0L373.1 600.0M441.9 580.3L461.7 580.3M441.9 600.0L452.6 600.0M509.8 580.3L490.0 580.3M509.8 600.0L499.1 600.0M521.4 580.3L541.2 580.3M521.4 600.0L532.1 600.0M589.2 580.3L569.4 580.3M589.2 600.0L578.5 600.0M600.8 580.3L620.6 580.3M600.8 600.0L611.5 600.0M680.3 580.3L700.1 580.3M680.3 600.0L691.0 600.0M748.2 580.3L728.4 580.3M748.2 600.0L737.5 600.0M759.8 580.3L779.6 580.3M759.8 600.0L770.5 600.0M362.4 745.7L373.1 745.7M430.3 745.7L419.6 745.7M441.9 745.7L452.6 745.7M509.8 745.7L499.1 745.7M521.4 745.7L532.1 745.7M589.2 745.7L578.5 745.7M600.8 745.7L611.5 745.7M668.7 745.7L658.0 745.7M680.3 745.7L691.0 745.7M748.2 745.7L737.5 745.7M759.8 745.7L770.5 745.7M827.7 745.7L817.0 745.7M839.3 745.7L850.0 745.7"/>
<path stroke="#808080" stroke-width="0.9" fill="none" d="M462.3 87.8L462.3 107.8M489.4 87.8L489.4 107.8M541.8 87.8L541.8 107.8M568.8 87.8L568.8 107.8M621.2 87.8L621.2 107.8M700.7 87.8L700.7 107.8M727.8 87.8L727.8 107.8M780.2 87.8L780.2 107.8M382.8 273.7L382.8 253.5M409.9 273.7L409.9 253.5M462.3 273.7L462.3 253.5M489.4 273.7L489.4 253.5M541.8 273.7L541.8 253.5M568.8 273.7L568.8 253.5M621.2 273.7L621.2 253.5M648.3 273.7L648.3 253.5M700.7 273.7L700.7 253.5M727.8 273.7L727.8 253.5M780.2 273.7L780.2 253.5M807.3 273.7L807.3 253.5M859.7 273.7L859.7 253.5M382.8 580.0L382.8 600.0M462.3 580.0L462.3 600.0M489.4 580.0L489.4 600.0M541.8 580.0L541.8 600.0M568.8 580.0L568.8 600.0M621.2 580.0L621.2 600.0M700.7 580.0L700.7 600.0M727.8 580.0L727.8 600.0M780.2 580.0L780.2 600.0M382.8 765.9L382.8 745.7M409.9 765.9L409.9 745.7M462.3 765.9L462.3 745.7M489.4 765.9L489.4 745.7M541.8 765.9L541.8 745.7M568.8 765.9L568.8 745.7M621.2 765.9L621.2 745.7M648.3 765.9L648.3 745.7M700.7 765.9L700.7 745.7M727.8 765.9L727.8 745.7M780.2 765.9L780.2 745.7M807.3 765.9L807.3 745.7M859.7 765.9L859.7 745.7"/>
<path stroke="#d800d8" stroke-width="0.9" fill="#5a005a" d="M468.2 90.6h1.4a0.8 0.8 0 0 1 0.8 0.8v5.2a0.8 0.8 0 0 1 -0.8 0.8h-1.4a0.8 0.8 0 0 1 -0.8 -0.8v-5.2a0.8 0.8 0 0 1 0.8 -0.8ZM482.1 90.6h1.4a0.8 0.8 0 0 1 0.8 0.8v5.2a0.8 0.8 0 0 1 -0.8 0.8h-1.4a0.8 0.8 0 0 1 -0.8 -0.8v-5.2a0.8 0.8 0 0 1 0.8 -0.8ZM547.7 90.6h1.4a0.8 0.8 0 0 1 0.8 0.8v5.2a0.8 0.8 0 0 1 -0.8 0.8h-1.4a0.8 0.8 0 0 1 -0.8 -0.8v-5.2a0.8 0.8 0 0 1 0.8 -0.8ZM561.5 90.6h1.4a0.8 0.8 0 0 1 0.8 0.8v5.2a0.8 0.8 0 0 1 -0.8 0.8h-1.4a0.8 0.8 0 0 1 -0.8 -0.8v-5.2a0.8 0.8 0 0 1 0.8 -0.8ZM627.1 90.6h1.4a0.8 0.8 0 0 1 0.8 0.8v5.2a0.8 0.8 0 0 1 -0.8 0.8h-1.4a0.8 0.8 0 0 1 -0.8 -0.8v-5.2a0.8 0.8 0 0 1 0.8 -0.8ZM706.6 90.6h1.4a0.8 0.8 0 0 1 0.8 0.8v5.2a0.8 0.8 0 0 1 -0.8 0.8h-1.4a0.8 0.8 0 0 1 -0.8 -0.8v-5.2a0.8 0.8 0 0 1 0.8 -0.8ZM720.5 90.6h1.4a0.8 0.8 0 0 1 0.8 0.8v5.2a0.8 0.8 0 0 1 -0.8 0.8h-1.4a0.8 0.8 0 0 1 -0.8 -0.8v-5.2a0.8 0.8 0 0 1 0.8 -0.8ZM786.1 90.6h1.4a0.8 0.8 0 0 1 0.8 0.8v5.2a0.8 0.8 0 0 1 -0.8 0.8h-1.4a0.8 0.8 0 0 1 -0.8 -0.8v-5.2a0.8 0.8 0 0 1 0.8 -0.8ZM388.7 263.9h1.4a0.8 0.8 0 0 1 0.8 0.8v5.2a0.8 0.8 0 0 1 -0.8 0.8h-1.4a0.8 0.8 0 0 1 -0.8 -0.8v-5.2a0.8 0.8 0 0 1 0.8 -0.8ZM402.6 263.9h1.4a0.8 0.8 0 0 1 0.8 0.8v5.2a0.8 0.8 0 0 1 -0.8 0.8h-1.4a0.8 0.8 0 0 1 -0.8 -0.8v-5.2a0.8 0.8 0 0 1 0.8 -0.8ZM468.2 263.9h1.4a0.8 0.8 0 0 1 0.8 0.8v5.2a0.8 0.8 0 0 1 -0.8 0.8h-1.4a0.8 0.8 0 0 1 -0.8 -0.8v-5.2a0.8 0.8 0 0 1 0.8 -0.8ZM482.1 263.9h1.4a0.8 0.8 0 0 1 0.8 0.8v5.2a0.8 0.8 0 0 1 -0.8 0.8h-1.4a0.8 0.8 0 0 1 -0.8 -0.8v-5.2a0.8 0.8 0 0 1 0.8 -0.8ZM547.7 263.9h1.4a0.8 0.8 0 0 1 0.8 0.8v5.2a0.8 0.8 0 0 1 -0.8 0.8h-1.4a0.8 0.8 0 0 1 -0.8 -0.8v-5.2a0.8 0.8 0 0 1 0.8 -0.8ZM561.5 263.9h1.4a0.8 0.8 0 0 1 0.8 0.8v5.2a0.8 0.8 0 0 1 -0.8 0.8h-1.4a0.8 0.8 0 0 1 -0.8 -0.8v-5.2a0.8 0.8 0 0 1 0.8 -0.8ZM627.1 263.9h1.4a0.8 0.8 0 0 1 0.8 0.8v5.2a0.8 0.8 0 0 1 -0.8 0.8h-1.4a0.8 0.8 0 0 1 -0.8 -0.8v-5.2a0.8 0.8 0 0 1 0.8 -0.8ZM641.0 263.9h1.4a0.8 0.8 0 0 1 0.8 0.8v5.2a0.8 0.8 0 0 1 -0.8 0.8h-1.4a0.8 0.8 0 0 1 -0.8 -0.8v-5.2a0.8 0.8 0 0 1 0.8 -0.8ZM706.6 263.9h1.4a0.8 0.8 0 0 1 0.8 0.8v5.2a0.8 0.8 0 0 1 -0.8 0.8h-1.4a0.8 0.8 0 0 1 -0.8 -0.8v-5.2a0.8 0.8 0 0 1 0.8 -0.8ZM720.5 263.9h1.4a0.8 0.8 0 0 1 0.8 0.8v5.2a0.8 0.8 0 0 1 -0.8 0.8h-1.4a0.8 0.8 0 0 1 -0.8 -0.8v-5.2a0.8 0.8 0 0 1 0.8 -0.8ZM786.1 263.9h1.4a0.8 0.8 0 0 1 0.8 0.8v5.2a0.8 0.8 0 0 1 -0.8 0.8h-1.4a0.8 0.8 0 0 1 -0.8 -0.8v-5.2a0.8 0.8 0 0 1 0.8 -0.8ZM800.0 263.9h1.4a0.8 0.8 0 0 1 0.8 0.8v5.2a0.8 0.8 0 0 1 -0.8 0.8h-1.4a0.8 0.8 0 0 1 -0.8 -0.8v-5.2a0.8 0.8 0 0 1 0.8 -0.8ZM865.6 263.9h1.4a0.8 0.8 0 0 1 0.8 0.8v5.2a0.8 0.8 0 0 1 -0.8 0.8h-1.4a0.8 0.8 0 0 1 -0.8 -0.8v-5.2a0.8 0.8 0 0 1 0.8 -0.8ZM388.7 582.8h1.4a0.8 0.8 0 0 1 0.8 0.8v5.2a0.8 0.8 0 0 1 -0.8 0.8h-1.4a0.8 0.8 0 0 1 -0.8 -0.8v-5.2a0.8 0.8 0 0 1 0.8 -0.8ZM468.2 582.8h1.4a0.8 0.8 0 0 1 0.8 0.8v5.2a0.8 0.8 0 0 1 -0.8 0.8h-1.4a0.8 0.8 0 0 1 -0.8 -0.8v-5.2a0.8 0.8 0 0 1 0.8 -0.8ZM482.1 582.8h1.4a0.8 0.8 0 0 1 0.8 0.8v5.2a0.8 0.8 0 0 1 -0.8 0.8h-1.4a0.8 0.8 0 0 1 -0.8 -0.8v-5.2a0.8 0.8 0 0 1 0.8 -0.8ZM547.7 582.8h1.4a0.8 0.8 0 0 1 0.8 0.8v5.2a0.8 0.8 0 0 1 -0.8 0.8h-1.4a0.8 0.8 0 0 1 -0.8 -0.8v-5.2a0.8 0.8 0 0 1 0.8 -0.8ZM561.5 582.8h1.4a0.8 0.8 0 0 1 0.8 0.8v5.2a0.8 0.8 0 0 1 -0.8 0.8h-1.4a0.8 0.8 0 0 1 -0.8 -0.8v-5.2a0.8 0.8 0 0 1 0.8 -0.8ZM627.1 582.8h1.4a0.8 0.8 0 0 1 0.8 0.8v5.2a0.8 0.8 0 0 1 -0.8 0.8h-1.4a0.8 0.8 0 0 1 -0.8 -0.8v-5.2a0.8 0.8 0 0 1 0.8 -0.8ZM706.6 582.8h1.4a0.8 0.8 0 0 1 0.8 0.8v5.2a0.8 0.8 0 0 1 -0.8 0.8h-1.4a0.8 0.8 0 0 1 -0.8 -0.8v-5.2a0.8 0.8 0 0 1 0.8 -0.8ZM720.5 582.8h1.4a0.8 0.8 0 0 1 0.8 0.8v5.2a0.8 0.8 0 0 1 -0.8 0.8h-1.4a0.8 0.8 0 0 1 -0.8 -0.8v-5.2a0.8 0.8 0 0 1 0.8 -0.8ZM786.1 582.8h1.4a0.8 0.8 0 0 1 0.8 0.8v5.2a0.8 0.8 0 0 1 -0.8 0.8h-1.4a0.8 0.8 0 0 1 -0.8 -0.8v-5.2a0.8 0.8 0 0 1 0.8 -0.8ZM388.7 756.1h1.4a0.8 0.8 0 0 1 0.8 0.8v5.2a0.8 0.8 0 0 1 -0.8 0.8h-1.4a0.8 0.8 0 0 1 -0.8 -0.8v-5.2a0.8 0.8 0 0 1 0.8 -0.8ZM402.6 756.1h1.4a0.8 0.8 0 0 1 0.8 0.8v5.2a0.8 0.8 0 0 1 -0.8 0.8h-1.4a0.8 0.8 0 0 1 -0.8 -0.8v-5.2a0.8 0.8 0 0 1 0.8 -0.8ZM468.2 756.1h1.4a0.8 0.8 0 0 1 0.8 0.8v5.2a0.8 0.8 0 0 1 -0.8 0.8h-1.4a0.8 0.8 0 0 1 -0.8 -0.8v-5.2a0.8 0.8 0 0 1 0.8 -0.8ZM482.1 756.1h1.4a0.8 0.8 0 0 1 0.8 0.8v5.2a0.8 0.8 0 0 1 -0.8 0.8h-1.4a0.8 0.8 0 0 1 -0.8 -0.8v-5.2a0.8 0.8 0 0 1 0.8 -0.8ZM547.7 756.1h1.4a0.8 0.8 0 0 1 0.8 0.8v5.2a0.8 0.8 0 0 1 -0.8 0.8h-1.4a0.8 0.8 0 0 1 -0.8 -0.8v-5.2a0.8 0.8 0 0 1 0.8 -0.8ZM561.5 756.1h1.4a0.8 0.8 0 0 1 0.8 0.8v5.2a0.8 0.8 0 0 1 -0.8 0.8h-1.4a0.8 0.8 0 0 1 -0.8 -0.8v-5.2a0.8 0.8 0 0 1 0.8 -0.8ZM627.1 756.1h1.4a0.8 0.8 0 0 1 0.8 0.8v5.2a0.8 0.8 0 0 1 -0.8 0.8h-1.4a0.8 0.8 0 0 1 -0.8 -0.8v-5.2a0.8 0.8 0 0 1 0.8 -0.8ZM641.0 756.1h1.4a0.8 0.8 0 0 1 0.8 0.8v5.2a0.8 0.8 0 0 1 -0.8 0.8h-1.4a0.8 0.8 0 0 1 -0.8 -0.8v-5.2a0.8 0.8 0 0 1 0.8 -0.8ZM706.6 756.1h1.4a0.8 0.8 0 0 1 0.8 0.8v5.2a0.8 0.8 0 0 1 -0.8 0.8h-1.4a0.8 0.8 0 0 1 -0.8 -0.8v-5.2a0.8 0.8 0 0 1 0.8 -0.8ZM720.5 756.1h1.4a0.8 0.8 0 0 1 0.8 0.8v5.2a0.8 0.8 0 0 1 -0.8 0.8h-1.4a0.8 0.8 0 0 1 -0.8 -0.8v-5.2a0.8 0.8 0 0 1 0.8 -0.8ZM786.1 756.1h1.4a0.8 0.8 0 0 1 0.8 0.8v5.2a0.8 0.8 0 0 1 -0.8 0.8h-1.4a0.8 0.8 0 0 1 -0.8 -0.8v-5.2a0.8 0.8 0 0 1 0.8 -0.8ZM800.0 756.1h1.4a0.8 0.8 0 0 1 0.8 0.8v5.2a0.8 0.8 0 0 1 -0.8 0.8h-1.4a0.8 0.8 0 0 1 -0.8 -0.8v-5.2a0.8 0.8 0 0 1 0.8 -0.8ZM865.6 756.1h1.4a0.8 0.8 0 0 1 0.8 0.8v5.2a0.8 0.8 0 0 1 -0.8 0.8h-1.4a0.8 0.8 0 0 1 -0.8 -0.8v-5.2a0.8 0.8 0 0 1 0.8 -0.8Z"/>
<path stroke="#7c7c7c" stroke-width="0.7" fill="none" d="M441.9 106.2L452.6 106.2M461.6 108.7L475.1 108.7M462.3 106.9L475.1 106.9M509.8 106.2L499.1 106.2M490.1 108.7L476.6 108.7M489.4 106.9L476.6 106.9M521.4 106.2L532.1 106.2M541.1 108.7L554.6 108.7M541.8 106.9L554.6 106.9M589.2 106.2L578.5 106.2M569.5 108.7L556.0 108.7M568.8 106.9L556.0 106.9M600.8 106.2L611.5 106.2M620.5 108.7L634.0 108.7M621.2 106.9L634.0 106.9M680.3 106.2L691.0 106.2M700.0 108.7L713.5 108.7M700.7 106.9L713.5 106.9M748.2 106.2L737.5 106.2M728.5 108.7L715.0 108.7M727.8 106.9L715.0 106.9M759.8 106.2L770.5 106.2M779.5 108.7L793.0 108.7M780.2 106.9L793.0 106.9M362.4 255.1L373.1 255.1M382.1 252.6L395.6 252.6M382.8 254.4L395.6 254.4M430.3 255.1L419.6 255.1M410.6 252.6L397.1 252.6M409.9 254.4L397.1 254.4M441.9 255.1L452.6 255.1M461.6 252.6L475.1 252.6M462.3 254.4L475.1 254.4M509.8 255.1L499.1 255.1M490.1 252.6L476.6 252.6M489.4 254.4L476.6 254.4M521.4 255.1L532.1 255.1M541.1 252.6L554.6 252.6M541.8 254.4L554.6 254.4M589.2 255.1L578.5 255.1M569.5 252.6L556.0 252.6M568.8 254.4L556.0 254.4M600.8 255.1L611.5 255.1M620.5 252.6L634.0 252.6M621.2 254.4L634.0 254.4M668.7 255.1L658.0 255.1M649.0 252.6L635.5 252.6M648.3 254.4L635.5 254.4M680.3 255.1L691.0 255.1M700.0 252.6L713.5 252.6M700.7 254.4L713.5 254.4M748.2 255.1L737.5 255.1M728.5 252.6L715.0 252.6M727.8 254.4L715.0 254.4M759.8 255.1L770.5 255.1M779.5 252.6L793.0 252.6M780.2 254.4L793.0 254.4M827.7 255.1L817.0 255.1M808.0 252.6L794.5 252.6M807.3 254.4L794.5 254.4M839.3 255.1L850.0 255.1M859.0 252.6L872.5 252.6M859.7 254.4L872.5 254.4M649.4 87.8L649.4 128.8M635.8 128.8L649.4 128.8M665.3 89.8h8.0v41.0h-8.0ZM668.3 89.8L668.3 130.8M635.8 131.3L673.5 131.3M641.3 132.8L641.3 165.5M643.0 132.8L643.0 165.5M665.8 132.8L665.8 165.5M668.3 132.8L668.3 165.5M352.0 88.6L338.6 88.6L338.6 170.0M829.0 76.3h42.0v31.5h-42.0ZM362.4 598.4L373.1 598.4M382.1 600.9L395.6 600.9M382.8 599.1L395.6 599.1M441.9 598.4L452.6 598.4M461.6 600.9L475.1 600.9M462.3 599.1L475.1 599.1M509.8 598.4L499.1 598.4M490.1 600.9L476.6 600.9M489.4 599.1L476.6 599.1M521.4 598.4L532.1 598.4M541.1 600.9L554.6 600.9M541.8 599.1L554.6 599.1M589.2 598.4L578.5 598.4M569.5 600.9L556.0 600.9M568.8 599.1L556.0 599.1M600.8 598.4L611.5 598.4M620.5 600.9L634.0 600.9M621.2 599.1L634.0 599.1M680.3 598.4L691.0 598.4M700.0 600.9L713.5 600.9M700.7 599.1L713.5 599.1M748.2 598.4L737.5 598.4M728.5 600.9L715.0 600.9M727.8 599.1L715.0 599.1M759.8 598.4L770.5 598.4M779.5 600.9L793.0 600.9M780.2 599.1L793.0 599.1M362.4 747.3L373.1 747.3M382.1 744.8L395.6 744.8M382.8 746.6L395.6 746.6M430.3 747.3L419.6 747.3M410.6 744.8L397.1 744.8M409.9 746.6L397.1 746.6M441.9 747.3L452.6 747.3M461.6 744.8L475.1 744.8M462.3 746.6L475.1 746.6M509.8 747.3L499.1 747.3M490.1 744.8L476.6 744.8M489.4 746.6L476.6 746.6M521.4 747.3L532.1 747.3M541.1 744.8L554.6 744.8M541.8 746.6L554.6 746.6M589.2 747.3L578.5 747.3M569.5 744.8L556.0 744.8M568.8 746.6L556.0 746.6M600.8 747.3L611.5 747.3M620.5 744.8L634.0 744.8M621.2 746.6L634.0 746.6M668.7 747.3L658.0 747.3M649.0 744.8L635.5 744.8M648.3 746.6L635.5 746.6M680.3 747.3L691.0 747.3M700.0 744.8L713.5 744.8M700.7 746.6L713.5 746.6M748.2 747.3L737.5 747.3M728.5 744.8L715.0 744.8M727.8 746.6L715.0 746.6M759.8 747.3L770.5 747.3M779.5 744.8L793.0 744.8M780.2 746.6L793.0 746.6M827.7 747.3L817.0 747.3M808.0 744.8L794.5 744.8M807.3 746.6L794.5 746.6M839.3 747.3L850.0 747.3M859.0 744.8L872.5 744.8M859.7 746.6L872.5 746.6M649.4 580.0L649.4 621.0M635.8 621.0L649.4 621.0M665.3 582.0h8.0v41.0h-8.0ZM668.3 582.0L668.3 623.0M635.8 623.5L673.5 623.5M641.3 625.0L641.3 657.7M643.0 625.0L643.0 657.7M665.8 625.0L665.8 657.7M668.3 625.0L668.3 657.7M834.5 601.0L871.2 601.0"/>
<path stroke="#d800d8" stroke-width="1.0" fill="none" d="M362.4 275.1L382.2 275.1M430.3 275.1L410.5 275.1M441.9 275.1L461.7 275.1M509.8 275.1L490.0 275.1M521.4 275.1L541.2 275.1M589.2 275.1L569.4 275.1M600.8 275.1L620.6 275.1M668.7 275.1L648.9 275.1M680.3 275.1L700.1 275.1M748.2 275.1L728.4 275.1M759.8 275.1L779.6 275.1M827.7 275.1L807.9 275.1M839.3 275.1L859.1 275.1M362.4 767.3L382.2 767.3M430.3 767.3L410.5 767.3M441.9 767.3L461.7 767.3M509.8 767.3L490.0 767.3M521.4 767.3L541.2 767.3M589.2 767.3L569.4 767.3M600.8 767.3L620.6 767.3M668.7 767.3L648.9 767.3M680.3 767.3L700.1 767.3M748.2 767.3L728.4 767.3M759.8 767.3L779.6 767.3M827.7 767.3L807.9 767.3M839.3 767.3L859.1 767.3"/>
<path stroke="#6e6e6e" stroke-width="1.8" fill="none" d="M362.4 273.2L382.2 273.2M430.3 273.2L410.5 273.2M441.9 273.2L461.7 273.2M509.8 273.2L490.0 273.2M521.4 273.2L541.2 273.2M589.2 273.2L569.4 273.2M600.8 273.2L620.6 273.2M668.7 273.2L648.9 273.2M680.3 273.2L700.1 273.2M748.2 273.2L728.4 273.2M759.8 273.2L779.6 273.2M827.7 273.2L807.9 273.2M839.3 273.2L859.1 273.2M362.4 765.4L382.2 765.4M430.3 765.4L410.5 765.4M441.9 765.4L461.7 765.4M509.8 765.4L490.0 765.4M521.4 765.4L541.2 765.4M589.2 765.4L569.4 765.4M600.8 765.4L620.6 765.4M668.7 765.4L648.9 765.4M680.3 765.4L700.1 765.4M748.2 765.4L728.4 765.4M759.8 765.4L779.6 765.4M827.7 765.4L807.9 765.4M839.3 765.4L859.1 765.4"/>
<path stroke="#d09458" stroke-width="0.8" fill="#1c1006" d="M467.1 77.4h17.4v7.9h-17.4ZM546.6 77.4h17.4v7.9h-17.4ZM626.1 77.4h17.4v7.9h-17.4ZM705.6 77.4h17.4v7.9h-17.4ZM387.6 275.7h17.4v6.6h-17.4ZM467.1 275.7h17.4v6.6h-17.4ZM546.6 275.7h17.4v6.6h-17.4ZM626.1 275.7h17.4v6.6h-17.4ZM705.6 275.7h17.4v6.6h-17.4ZM785.0 275.7h17.4v6.6h-17.4ZM467.1 569.6h17.4v7.9h-17.4ZM546.6 569.6h17.4v7.9h-17.4ZM626.1 569.6h17.4v7.9h-17.4ZM705.6 569.6h17.4v7.9h-17.4ZM387.6 767.9h17.4v6.6h-17.4ZM467.1 767.9h17.4v6.6h-17.4ZM546.6 767.9h17.4v6.6h-17.4ZM626.1 767.9h17.4v6.6h-17.4ZM705.6 767.9h17.4v6.6h-17.4ZM785.0 767.9h17.4v6.6h-17.4Z"/>
<path stroke="#a87848" stroke-width="0.6" fill="none" d="M468.3 80.0L483.3 80.0M468.3 82.7L483.3 82.7M547.8 80.0L562.8 80.0M547.8 82.7L562.8 82.7M627.3 80.0L642.3 80.0M627.3 82.7L642.3 82.7M706.8 80.0L721.8 80.0M706.8 82.7L721.8 82.7M388.8 277.9L403.8 277.9M388.8 280.1L403.8 280.1M468.3 277.9L483.3 277.9M468.3 280.1L483.3 280.1M547.8 277.9L562.8 277.9M547.8 280.1L562.8 280.1M627.3 277.9L642.3 277.9M627.3 280.1L642.3 280.1M706.8 277.9L721.8 277.9M706.8 280.1L721.8 280.1M786.2 277.9L801.2 277.9M786.2 280.1L801.2 280.1M468.3 572.2L483.3 572.2M468.3 574.9L483.3 574.9M547.8 572.2L562.8 572.2M547.8 574.9L562.8 574.9M627.3 572.2L642.3 572.2M627.3 574.9L642.3 574.9M706.8 572.2L721.8 572.2M706.8 574.9L721.8 574.9M388.8 770.1L403.8 770.1M388.8 772.3L403.8 772.3M468.3 770.1L483.3 770.1M468.3 772.3L483.3 772.3M547.8 770.1L562.8 770.1M547.8 772.3L562.8 772.3M627.3 770.1L642.3 770.1M627.3 772.3L642.3 772.3M706.8 770.1L721.8 770.1M706.8 772.3L721.8 772.3M786.2 770.1L801.2 770.1M786.2 772.3L801.2 772.3"/>
<path stroke="#8a6238" stroke-width="0.5" fill="none" d="M470.8 78.4L470.8 84.3M473.3 78.4L473.3 84.3M475.8 78.4L475.8 84.3M478.3 78.4L478.3 84.3M480.8 78.4L480.8 84.3M550.3 78.4L550.3 84.3M552.8 78.4L552.8 84.3M555.3 78.4L555.3 84.3M557.8 78.4L557.8 84.3M560.3 78.4L560.3 84.3M629.8 78.4L629.8 84.3M632.3 78.4L632.3 84.3M634.8 78.4L634.8 84.3M637.3 78.4L637.3 84.3M639.8 78.4L639.8 84.3M709.3 78.4L709.3 84.3M711.8 78.4L711.8 84.3M714.3 78.4L714.3 84.3M716.8 78.4L716.8 84.3M719.3 78.4L719.3 84.3M391.3 276.7L391.3 281.3M393.8 276.7L393.8 281.3M396.3 276.7L396.3 281.3M398.8 276.7L398.8 281.3M401.3 276.7L401.3 281.3M470.8 276.7L470.8 281.3M473.3 276.7L473.3 281.3M475.8 276.7L475.8 281.3M478.3 276.7L478.3 281.3M480.8 276.7L480.8 281.3M550.3 276.7L550.3 281.3M552.8 276.7L552.8 281.3M555.3 276.7L555.3 281.3M557.8 276.7L557.8 281.3M560.3 276.7L560.3 281.3M629.8 276.7L629.8 281.3M632.3 276.7L632.3 281.3M634.8 276.7L634.8 281.3M637.3 276.7L637.3 281.3M639.8 276.7L639.8 281.3M709.3 276.7L709.3 281.3M711.8 276.7L711.8 281.3M714.3 276.7L714.3 281.3M716.8 276.7L716.8 281.3M719.3 276.7L719.3 281.3M788.7 276.7L788.7 281.3M791.2 276.7L791.2 281.3M793.7 276.7L793.7 281.3M796.2 276.7L796.2 281.3M798.7 276.7L798.7 281.3M470.8 570.6L470.8 576.5M473.3 570.6L473.3 576.5M475.8 570.6L475.8 576.5M478.3 570.6L478.3 576.5M480.8 570.6L480.8 576.5M550.3 570.6L550.3 576.5M552.8 570.6L552.8 576.5M555.3 570.6L555.3 576.5M557.8 570.6L557.8 576.5M560.3 570.6L560.3 576.5M629.8 570.6L629.8 576.5M632.3 570.6L632.3 576.5M634.8 570.6L634.8 576.5M637.3 570.6L637.3 576.5M639.8 570.6L639.8 576.5M709.3 570.6L709.3 576.5M711.8 570.6L711.8 576.5M714.3 570.6L714.3 576.5M716.8 570.6L716.8 576.5M719.3 570.6L719.3 576.5M391.3 768.9L391.3 773.5M393.8 768.9L393.8 773.5M396.3 768.9L396.3 773.5M398.8 768.9L398.8 773.5M401.3 768.9L401.3 773.5M470.8 768.9L470.8 773.5M473.3 768.9L473.3 773.5M475.8 768.9L475.8 773.5M478.3 768.9L478.3 773.5M480.8 768.9L480.8 773.5M550.3 768.9L550.3 773.5M552.8 768.9L552.8 773.5M555.3 768.9L555.3 773.5M557.8 768.9L557.8 773.5M560.3 768.9L560.3 773.5M629.8 768.9L629.8 773.5M632.3 768.9L632.3 773.5M634.8 768.9L634.8 773.5M637.3 768.9L637.3 773.5M639.8 768.9L639.8 773.5M709.3 768.9L709.3 773.5M711.8 768.9L711.8 773.5M714.3 768.9L714.3 773.5M716.8 768.9L716.8 773.5M719.3 768.9L719.3 773.5M788.7 768.9L788.7 773.5M791.2 768.9L791.2 773.5M793.7 768.9L793.7 773.5M796.2 768.9L796.2 773.5M798.7 768.9L798.7 773.5"/>
<path stroke="#6e6e6e" stroke-width="1.5" fill="none" d="M467.1 86.9L473.6 86.9M477.2 86.9L484.5 86.9M546.6 86.9L553.1 86.9M556.7 86.9L564.0 86.9M626.1 86.9L632.6 86.9M636.2 86.9L643.5 86.9M705.6 86.9L712.1 86.9M715.7 86.9L723.0 86.9M387.6 274.3L394.1 274.3M397.7 274.3L405.0 274.3M467.1 274.3L473.6 274.3M477.2 274.3L484.5 274.3M546.6 274.3L553.1 274.3M556.7 274.3L564.0 274.3M626.1 274.3L632.6 274.3M636.2 274.3L643.5 274.3M705.6 274.3L712.1 274.3M715.7 274.3L723.0 274.3M785.0 274.3L791.5 274.3M795.1 274.3L802.4 274.3M467.1 579.1L473.6 579.1M477.2 579.1L484.5 579.1M546.6 579.1L553.1 579.1M556.7 579.1L564.0 579.1M626.1 579.1L632.6 579.1M636.2 579.1L643.5 579.1M705.6 579.1L712.1 579.1M715.7 579.1L723.0 579.1M387.6 766.5L394.1 766.5M397.7 766.5L405.0 766.5M467.1 766.5L473.6 766.5M477.2 766.5L484.5 766.5M546.6 766.5L553.1 766.5M556.7 766.5L564.0 766.5M626.1 766.5L632.6 766.5M636.2 766.5L643.5 766.5M705.6 766.5L712.1 766.5M715.7 766.5L723.0 766.5M785.0 766.5L791.5 766.5M795.1 766.5L802.4 766.5"/>
<path stroke="#00b801" stroke-width="0.95" fill="none" d="M475.8 76.8L475.8 85.8M555.3 76.8L555.3 85.8M634.8 76.8L634.8 85.8M714.3 76.8L714.3 85.8M396.3 275.2L396.3 282.7M475.8 275.2L475.8 282.7M555.3 275.2L555.3 282.7M634.8 275.2L634.8 282.7M714.3 275.2L714.3 282.7M793.7 275.2L793.7 282.7M475.8 569.0L475.8 578.0M555.3 569.0L555.3 578.0M634.8 569.0L634.8 578.0M714.3 569.0L714.3 578.0M396.3 767.4L396.3 774.9M475.8 767.4L475.8 774.9M555.3 767.4L555.3 774.9M634.8 767.4L634.8 774.9M714.3 767.4L714.3 774.9M793.7 767.4L793.7 774.9"/>
<path stroke="#d800d8" stroke-width="0.9" fill="none" d="M639.8 92.4h6.2v3.6h-6.2ZM639.8 102.3h6.2v3.6h-6.2ZM639.8 112.2h6.2v3.6h-6.2ZM639.8 122.1h6.2v3.6h-6.2ZM639.8 584.6h6.2v3.6h-6.2ZM639.8 594.5h6.2v3.6h-6.2ZM639.8 604.4h6.2v3.6h-6.2ZM639.8 614.3h6.2v3.6h-6.2Z"/>
<path stroke="#6e6e6e" stroke-width="1.6" fill="none" d="M409.0 81.5L422.6 81.5M807.2 81.5L820.7 81.5M839.5 194.3L854.5 194.3M409.0 573.7L422.6 573.7M807.2 573.7L820.7 573.7M839.5 686.5L854.5 686.5"/>
<path stroke="#7a7a7a" stroke-width="0.55" fill="none" d="M417.0 127.3L434.5 127.3M417.0 130.7L434.5 130.7M417.0 134.1L434.5 134.1M417.0 137.5L434.5 137.5M417.0 140.9L434.5 140.9M417.0 144.3L434.5 144.3M417.0 127.3L417.0 146.3M417.0 127.3L434.5 119.3M814.2 127.3L832.6 127.3M814.2 130.7L832.6 130.7M814.2 134.1L832.6 134.1M814.2 137.5L832.6 137.5M814.2 140.9L832.6 140.9M814.2 144.3L832.6 144.3M814.2 127.3L814.2 146.3M814.2 127.3L832.6 119.3M398.5 602.2L434.0 602.2M398.5 604.8L434.0 604.8M398.5 607.3L434.0 607.3M398.5 609.9L434.0 609.9M398.5 612.4L434.0 612.4M398.5 615.0L434.0 615.0M398.5 617.5L434.0 617.5M398.5 620.1L434.0 620.1M398.5 622.7L434.0 622.7M398.5 625.2L434.0 625.2M398.5 627.8L434.0 627.8M398.5 630.3L434.0 630.3M398.5 632.9L434.0 632.9M398.5 635.4L434.0 635.4M398.5 638.0L434.0 638.0M398.5 602.2L398.5 638.0M434.0 602.2L434.0 638.0M796.2 602.2L833.0 602.2M796.2 604.8L833.0 604.8M796.2 607.3L833.0 607.3M796.2 609.9L833.0 609.9M796.2 612.4L833.0 612.4M796.2 615.0L833.0 615.0M796.2 617.5L833.0 617.5M796.2 620.1L833.0 620.1M796.2 622.7L833.0 622.7M796.2 625.2L833.0 625.2M796.2 627.8L833.0 627.8M796.2 630.3L833.0 630.3M796.2 632.9L833.0 632.9M796.2 635.4L833.0 635.4M796.2 638.0L833.0 638.0M796.2 602.2L796.2 638.0M833.0 602.2L833.0 638.0"/>
<path stroke="#00c400" stroke-width="1.2" fill="none" d="M356.6 325.8L873.2 325.8M356.6 526.5L873.2 526.5"/>
<path stroke="#505050" stroke-width="0.5" fill="none" d="M356.6 296.2L356.6 305.2M396.3 296.2L396.3 305.2M436.1 296.2L436.1 305.2M475.8 296.2L475.8 305.2M515.6 296.2L515.6 305.2M555.3 296.2L555.3 305.2M595.0 296.2L595.0 305.2M634.8 296.2L634.8 305.2M674.5 296.2L674.5 305.2M714.3 296.2L714.3 305.2M754.0 296.2L754.0 305.2M793.7 296.2L793.7 305.2M833.5 296.2L833.5 305.2M873.2 296.2L873.2 305.2M356.6 547.7L356.6 560.3M396.3 547.7L396.3 560.3M436.1 547.7L436.1 560.3M475.8 547.7L475.8 560.3M515.6 547.7L515.6 560.3M555.3 547.7L555.3 560.3M595.0 547.7L595.0 560.3M634.8 547.7L634.8 560.3M674.5 547.7L674.5 560.3M714.3 547.7L714.3 560.3M754.0 547.7L754.0 560.3M793.7 547.7L793.7 560.3M833.5 547.7L833.5 560.3M873.2 547.7L873.2 560.3"/>
<path stroke="#00c400" stroke-width="0.9" fill="none" d="M574.7 371.6L653.5 371.6"/>
<path stroke="#00c400" stroke-width="0.7" fill="none" d="M574.7 373.1L653.5 373.1"/>
<path stroke="#dcdcdc" stroke-width="0.8" fill="none" d="M748.0 413.3L748.0 394.2L932.3 394.2M794.4 394.2L794.4 413.3M819.6 394.2L819.6 413.3M863.7 394.2L863.7 413.3M885.8 394.2L885.8 413.3M771.0 394.2L771.0 413.3M748.0 403.9L794.4 403.9"/>
<path stroke="#6a6a6a" stroke-width="0.6" fill="#555" d="M414.8 600.5h1.8v37.5h-1.8ZM814.2 600.5h1.8v37.5h-1.8Z"/>
<path stroke="#00c400" stroke-width="0.8" fill="none" d="M835.0 601.0h5.4v30.0h-5.4ZM864.6 602.0h7.2v6.3h-7.2ZM864.6 612.4h7.2v6.3h-7.2ZM864.6 621.7h7.2v7.8h-7.2ZM862.4 635.8h10.0v19.5h-10.0Z"/>
<path stroke="#00c400" stroke-width="0.6" fill="none" d="M866.0 641.0h6.4v11.0h-6.4Z"/>
<path stroke="#bbb" stroke-width="0.6" fill="none" d="M872.0 609.0L884.0 614.0"/>
<path stroke="#777" stroke-width="0.5" fill="none" d="M873.0 646.3L902.0 646.3"/>
<text x="311.6" y="90.2" font-size="6.6" fill="#c8c8c8" text-anchor="middle" font-family="Liberation Sans,Noto Sans CJK SC,sans-serif">F</text>
<text x="311.6" y="110.2" font-size="6.6" fill="#c8c8c8" text-anchor="middle" font-family="Liberation Sans,Noto Sans CJK SC,sans-serif">E</text>
<text x="311.6" y="169.9" font-size="6.6" fill="#c8c8c8" text-anchor="middle" font-family="Liberation Sans,Noto Sans CJK SC,sans-serif">D</text>
<text x="311.6" y="196.7" font-size="6.6" fill="#c8c8c8" text-anchor="middle" font-family="Liberation Sans,Noto Sans CJK SC,sans-serif">C</text>
<text x="311.6" y="255.9" font-size="6.6" fill="#c8c8c8" text-anchor="middle" font-family="Liberation Sans,Noto Sans CJK SC,sans-serif">B</text>
<text x="311.6" y="276.1" font-size="6.6" fill="#c8c8c8" text-anchor="middle" font-family="Liberation Sans,Noto Sans CJK SC,sans-serif">A</text>
<text x="327.6" y="97.8" font-size="3.4" fill="#e6e6e6" text-anchor="middle" font-family="Liberation Sans,Noto Sans CJK SC,sans-serif" transform="rotate(-90 327.6 97.8)">1500</text>
<text x="327.6" y="137.7" font-size="3.4" fill="#e6e6e6" text-anchor="middle" font-family="Liberation Sans,Noto Sans CJK SC,sans-serif" transform="rotate(-90 327.6 137.7)">5400</text>
<text x="327.6" y="180.9" font-size="3.4" fill="#e6e6e6" text-anchor="middle" font-family="Liberation Sans,Noto Sans CJK SC,sans-serif" transform="rotate(-90 327.6 180.9)">2400</text>
<text x="327.6" y="223.9" font-size="3.4" fill="#e6e6e6" text-anchor="middle" font-family="Liberation Sans,Noto Sans CJK SC,sans-serif" transform="rotate(-90 327.6 223.9)">5400</text>
<text x="327.6" y="263.6" font-size="3.4" fill="#e6e6e6" text-anchor="middle" font-family="Liberation Sans,Noto Sans CJK SC,sans-serif" transform="rotate(-90 327.6 263.6)">1500</text>
<text x="319.2" y="180.9" font-size="3.4" fill="#e6e6e6" text-anchor="middle" font-family="Liberation Sans,Noto Sans CJK SC,sans-serif" transform="rotate(-90 319.2 180.9)">16200</text>
<text x="919.4" y="90.2" font-size="6.6" fill="#c8c8c8" text-anchor="middle" font-family="Liberation Sans,Noto Sans CJK SC,sans-serif">F</text>
<text x="919.4" y="110.2" font-size="6.6" fill="#c8c8c8" text-anchor="middle" font-family="Liberation Sans,Noto Sans CJK SC,sans-serif">E</text>
<text x="919.4" y="169.9" font-size="6.6" fill="#c8c8c8" text-anchor="middle" font-family="Liberation Sans,Noto Sans CJK SC,sans-serif">D</text>
<text x="919.4" y="196.7" font-size="6.6" fill="#c8c8c8" text-anchor="middle" font-family="Liberation Sans,Noto Sans CJK SC,sans-serif">C</text>
<text x="919.4" y="255.9" font-size="6.6" fill="#c8c8c8" text-anchor="middle" font-family="Liberation Sans,Noto Sans CJK SC,sans-serif">B</text>
<text x="919.4" y="276.1" font-size="6.6" fill="#c8c8c8" text-anchor="middle" font-family="Liberation Sans,Noto Sans CJK SC,sans-serif">A</text>
<text x="900.2" y="97.8" font-size="3.4" fill="#e6e6e6" text-anchor="middle" font-family="Liberation Sans,Noto Sans CJK SC,sans-serif" transform="rotate(-90 900.2 97.8)">1500</text>
<text x="900.2" y="137.7" font-size="3.4" fill="#e6e6e6" text-anchor="middle" font-family="Liberation Sans,Noto Sans CJK SC,sans-serif" transform="rotate(-90 900.2 137.7)">5400</text>
<text x="900.2" y="180.9" font-size="3.4" fill="#e6e6e6" text-anchor="middle" font-family="Liberation Sans,Noto Sans CJK SC,sans-serif" transform="rotate(-90 900.2 180.9)">2400</text>
<text x="900.2" y="223.9" font-size="3.4" fill="#e6e6e6" text-anchor="middle" font-family="Liberation Sans,Noto Sans CJK SC,sans-serif" transform="rotate(-90 900.2 223.9)">5400</text>
<text x="900.2" y="263.6" font-size="3.4" fill="#e6e6e6" text-anchor="middle" font-family="Liberation Sans,Noto Sans CJK SC,sans-serif" transform="rotate(-90 900.2 263.6)">1500</text>
<text x="909.5" y="180.9" font-size="3.4" fill="#e6e6e6" text-anchor="middle" font-family="Liberation Sans,Noto Sans CJK SC,sans-serif" transform="rotate(-90 909.5 180.9)">16200</text>
<text x="350.2" y="114.8" font-size="3.2" fill="#e6e6e6" text-anchor="middle" font-family="Liberation Sans,Noto Sans CJK SC,sans-serif" transform="rotate(-90 350.2 114.8)">900</text>
<text x="350.2" y="133.8" font-size="3.2" fill="#e6e6e6" text-anchor="middle" font-family="Liberation Sans,Noto Sans CJK SC,sans-serif" transform="rotate(-90 350.2 133.8)">2700</text>
<text x="350.2" y="153.5" font-size="3.2" fill="#e6e6e6" text-anchor="middle" font-family="Liberation Sans,Noto Sans CJK SC,sans-serif" transform="rotate(-90 350.2 153.5)">900</text>
<text x="350.2" y="174.5" font-size="3.2" fill="#e6e6e6" text-anchor="middle" font-family="Liberation Sans,Noto Sans CJK SC,sans-serif" transform="rotate(-90 350.2 174.5)">900</text>
<text x="350.2" y="188.3" font-size="3.2" fill="#e6e6e6" text-anchor="middle" font-family="Liberation Sans,Noto Sans CJK SC,sans-serif" transform="rotate(-90 350.2 188.3)">900</text>
<text x="350.2" y="202.3" font-size="3.2" fill="#e6e6e6" text-anchor="middle" font-family="Liberation Sans,Noto Sans CJK SC,sans-serif" transform="rotate(-90 350.2 202.3)">900</text>
<text x="350.2" y="224.3" font-size="3.2" fill="#e6e6e6" text-anchor="middle" font-family="Liberation Sans,Noto Sans CJK SC,sans-serif" transform="rotate(-90 350.2 224.3)">2700</text>
<text x="350.2" y="246.5" font-size="3.2" fill="#e6e6e6" text-anchor="middle" font-family="Liberation Sans,Noto Sans CJK SC,sans-serif" transform="rotate(-90 350.2 246.5)">900</text>
<text x="345.0" y="133.8" font-size="3.2" fill="#e6e6e6" text-anchor="middle" font-family="Liberation Sans,Noto Sans CJK SC,sans-serif" transform="rotate(-90 345.0 133.8)">10125</text>
<text x="377.9" y="138.3" font-size="3.0" fill="#ffffff" text-anchor="middle" font-family="Liberation Sans,Noto Sans CJK SC,sans-serif" font-weight="700" transform="rotate(-90 377.9 138.3)">DN50</text>
<text x="376.3" y="164.5" font-size="3.0" fill="#ffffff" text-anchor="middle" font-family="Liberation Sans,Noto Sans CJK SC,sans-serif" font-weight="700" transform="rotate(-90 376.3 164.5)">DN25</text>
<text x="377.9" y="227.5" font-size="3.0" fill="#ffffff" text-anchor="middle" font-family="Liberation Sans,Noto Sans CJK SC,sans-serif" font-weight="700" transform="rotate(-90 377.9 227.5)">DN50</text>
<text x="377.1" y="180.0" font-size="3.0" fill="#ffffff" text-anchor="middle" font-family="Liberation Sans,Noto Sans CJK SC,sans-serif" font-weight="700" transform="rotate(-90 377.1 180.0)">DN25</text>
<text x="376.3" y="200.8" font-size="3.0" fill="#ffffff" text-anchor="middle" font-family="Liberation Sans,Noto Sans CJK SC,sans-serif" font-weight="700" transform="rotate(-90 376.3 200.8)">DN32</text>
<text x="374.3" y="249.9" font-size="4.8" fill="#f0b070" text-anchor="middle" font-family="Liberation Sans,Noto Sans CJK SC,sans-serif" font-weight="700" textLength="4.3" lengthAdjust="spacingAndGlyphs">WL</text>
<text x="373.1" y="116.7" font-size="4.8" fill="#f0b070" text-anchor="middle" font-family="Liberation Sans,Noto Sans CJK SC,sans-serif" font-weight="700" textLength="4.3" lengthAdjust="spacingAndGlyphs">WL</text>
<text x="417.6" y="227.5" font-size="3.0" fill="#ffffff" text-anchor="middle" font-family="Liberation Sans,Noto Sans CJK SC,sans-serif" font-weight="700" transform="rotate(-90 417.6 227.5)">DN50</text>
<text x="416.8" y="180.0" font-size="3.0" fill="#ffffff" text-anchor="middle" font-family="Liberation Sans,Noto Sans CJK SC,sans-serif" font-weight="700" transform="rotate(-90 416.8 180.0)">DN25</text>
<text x="416.0" y="200.8" font-size="3.0" fill="#ffffff" text-anchor="middle" font-family="Liberation Sans,Noto Sans CJK SC,sans-serif" font-weight="700" transform="rotate(-90 416.0 200.8)">DN32</text>
<text x="414.0" y="249.9" font-size="4.8" fill="#f0b070" text-anchor="middle" font-family="Liberation Sans,Noto Sans CJK SC,sans-serif" font-weight="700" textLength="4.3" lengthAdjust="spacingAndGlyphs">WL</text>
<text x="457.4" y="138.3" font-size="3.0" fill="#ffffff" text-anchor="middle" font-family="Liberation Sans,Noto Sans CJK SC,sans-serif" font-weight="700" transform="rotate(-90 457.4 138.3)">DN50</text>
<text x="455.8" y="164.5" font-size="3.0" fill="#ffffff" text-anchor="middle" font-family="Liberation Sans,Noto Sans CJK SC,sans-serif" font-weight="700" transform="rotate(-90 455.8 164.5)">DN25</text>
<text x="457.4" y="227.5" font-size="3.0" fill="#ffffff" text-anchor="middle" font-family="Liberation Sans,Noto Sans CJK SC,sans-serif" font-weight="700" transform="rotate(-90 457.4 227.5)">DN50</text>
<text x="456.6" y="180.0" font-size="3.0" fill="#ffffff" text-anchor="middle" font-family="Liberation Sans,Noto Sans CJK SC,sans-serif" font-weight="700" transform="rotate(-90 456.6 180.0)">DN25</text>
<text x="455.8" y="200.8" font-size="3.0" fill="#ffffff" text-anchor="middle" font-family="Liberation Sans,Noto Sans CJK SC,sans-serif" font-weight="700" transform="rotate(-90 455.8 200.8)">DN32</text>
<text x="453.8" y="249.9" font-size="4.8" fill="#f0b070" text-anchor="middle" font-family="Liberation Sans,Noto Sans CJK SC,sans-serif" font-weight="700" textLength="4.3" lengthAdjust="spacingAndGlyphs">WL</text>
<text x="452.6" y="116.7" font-size="4.8" fill="#f0b070" text-anchor="middle" font-family="Liberation Sans,Noto Sans CJK SC,sans-serif" font-weight="700" textLength="4.3" lengthAdjust="spacingAndGlyphs">WL</text>
<text x="497.1" y="138.3" font-size="3.0" fill="#ffffff" text-anchor="middle" font-family="Liberation Sans,Noto Sans CJK SC,sans-serif" font-weight="700" transform="rotate(-90 497.1 138.3)">DN50</text>
<text x="495.5" y="164.5" font-size="3.0" fill="#ffffff" text-anchor="middle" font-family="Liberation Sans,Noto Sans CJK SC,sans-serif" font-weight="700" transform="rotate(-90 495.5 164.5)">DN25</text>
<text x="497.1" y="227.5" font-size="3.0" fill="#ffffff" text-anchor="middle" font-family="Liberation Sans,Noto Sans CJK SC,sans-serif" font-weight="700" transform="rotate(-90 497.1 227.5)">DN50</text>
<text x="496.3" y="180.0" font-size="3.0" fill="#ffffff" text-anchor="middle" font-family="Liberation Sans,Noto Sans CJK SC,sans-serif" font-weight="700" transform="rotate(-90 496.3 180.0)">DN25</text>
<text x="495.5" y="200.8" font-size="3.0" fill="#ffffff" text-anchor="middle" font-family="Liberation Sans,Noto Sans CJK SC,sans-serif" font-weight="700" transform="rotate(-90 495.5 200.8)">DN32</text>
<text x="493.5" y="249.9" font-size="4.8" fill="#f0b070" text-anchor="middle" font-family="Liberation Sans,Noto Sans CJK SC,sans-serif" font-weight="700" textLength="4.3" lengthAdjust="spacingAndGlyphs">WL</text>
<text x="492.3" y="116.7" font-size="4.8" fill="#f0b070" text-anchor="middle" font-family="Liberation Sans,Noto Sans CJK SC,sans-serif" font-weight="700" textLength="4.3" lengthAdjust="spacingAndGlyphs">WL</text>
<text x="536.8" y="138.3" font-size="3.0" fill="#ffffff" text-anchor="middle" font-family="Liberation Sans,Noto Sans CJK SC,sans-serif" font-weight="700" transform="rotate(-90 536.8 138.3)">DN50</text>
<text x="535.2" y="164.5" font-size="3.0" fill="#ffffff" text-anchor="middle" font-family="Liberation Sans,Noto Sans CJK SC,sans-serif" font-weight="700" transform="rotate(-90 535.2 164.5)">DN25</text>
<text x="536.8" y="227.5" font-size="3.0" fill="#ffffff" text-anchor="middle" font-family="Liberation Sans,Noto Sans CJK SC,sans-serif" font-weight="700" transform="rotate(-90 536.8 227.5)">DN50</text>
<text x="536.0" y="180.0" font-size="3.0" fill="#ffffff" text-anchor="middle" font-family="Liberation Sans,Noto Sans CJK SC,sans-serif" font-weight="700" transform="rotate(-90 536.0 180.0)">DN25</text>
<text x="535.2" y="200.8" font-size="3.0" fill="#ffffff" text-anchor="middle" font-family="Liberation Sans,Noto Sans CJK SC,sans-serif" font-weight="700" transform="rotate(-90 535.2 200.8)">DN32</text>
<text x="533.2" y="249.9" font-size="4.8" fill="#f0b070" text-anchor="middle" font-family="Liberation Sans,Noto Sans CJK SC,sans-serif" font-weight="700" textLength="4.3" lengthAdjust="spacingAndGlyphs">WL</text>
<text x="532.0" y="116.7" font-size="4.8" fill="#f0b070" text-anchor="middle" font-family="Liberation Sans,Noto Sans CJK SC,sans-serif" font-weight="700" textLength="4.3" lengthAdjust="spacingAndGlyphs">WL</text>
<text x="576.6" y="138.3" font-size="3.0" fill="#ffffff" text-anchor="middle" font-family="Liberation Sans,Noto Sans CJK SC,sans-serif" font-weight="700" transform="rotate(-90 576.6 138.3)">DN50</text>
<text x="575.0" y="164.5" font-size="3.0" fill="#ffffff" text-anchor="middle" font-family="Liberation Sans,Noto Sans CJK SC,sans-serif" font-weight="700" transform="rotate(-90 575.0 164.5)">DN25</text>
<text x="576.6" y="227.5" font-size="3.0" fill="#ffffff" text-anchor="middle" font-family="Liberation Sans,Noto Sans CJK SC,sans-serif" font-weight="700" transform="rotate(-90 576.6 227.5)">DN50</text>
<text x="575.8" y="180.0" font-size="3.0" fill="#ffffff" text-anchor="middle" font-family="Liberation Sans,Noto Sans CJK SC,sans-serif" font-weight="700" transform="rotate(-90 575.8 180.0)">DN25</text>
<text x="575.0" y="200.8" font-size="3.0" fill="#ffffff" text-anchor="middle" font-family="Liberation Sans,Noto Sans CJK SC,sans-serif" font-weight="700" transform="rotate(-90 575.0 200.8)">DN32</text>
<text x="573.0" y="249.9" font-size="4.8" fill="#f0b070" text-anchor="middle" font-family="Liberation Sans,Noto Sans CJK SC,sans-serif" font-weight="700" textLength="4.3" lengthAdjust="spacingAndGlyphs">WL</text>
<text x="571.8" y="116.7" font-size="4.8" fill="#f0b070" text-anchor="middle" font-family="Liberation Sans,Noto Sans CJK SC,sans-serif" font-weight="700" textLength="4.3" lengthAdjust="spacingAndGlyphs">WL</text>
<text x="616.3" y="138.3" font-size="3.0" fill="#ffffff" text-anchor="middle" font-family="Liberation Sans,Noto Sans CJK SC,sans-serif" font-weight="700" transform="rotate(-90 616.3 138.3)">DN50</text>
<text x="614.7" y="164.5" font-size="3.0" fill="#ffffff" text-anchor="middle" font-family="Liberation Sans,Noto Sans CJK SC,sans-serif" font-weight="700" transform="rotate(-90 614.7 164.5)">DN25</text>
<text x="616.3" y="227.5" font-size="3.0" fill="#ffffff" text-anchor="middle" font-family="Liberation Sans,Noto Sans CJK SC,sans-serif" font-weight="700" transform="rotate(-90 616.3 227.5)">DN50</text>
<text x="615.5" y="180.0" font-size="3.0" fill="#ffffff" text-anchor="middle" font-family="Liberation Sans,Noto Sans CJK SC,sans-serif" font-weight="700" transform="rotate(-90 615.5 180.0)">DN25</text>
<text x="614.7" y="200.8" font-size="3.0" fill="#ffffff" text-anchor="middle" font-family="Liberation Sans,Noto Sans CJK SC,sans-serif" font-weight="700" transform="rotate(-90 614.7 200.8)">DN32</text>
<text x="612.7" y="249.9" font-size="4.8" fill="#f0b070" text-anchor="middle" font-family="Liberation Sans,Noto Sans CJK SC,sans-serif" font-weight="700" textLength="4.3" lengthAdjust="spacingAndGlyphs">WL</text>
<text x="611.5" y="116.7" font-size="4.8" fill="#f0b070" text-anchor="middle" font-family="Liberation Sans,Noto Sans CJK SC,sans-serif" font-weight="700" textLength="4.3" lengthAdjust="spacingAndGlyphs">WL</text>
<text x="656.0" y="138.3" font-size="3.0" fill="#ffffff" text-anchor="middle" font-family="Liberation Sans,Noto Sans CJK SC,sans-serif" font-weight="700" transform="rotate(-90 656.0 138.3)">DN50</text>
<text x="654.4" y="164.5" font-size="3.0" fill="#ffffff" text-anchor="middle" font-family="Liberation Sans,Noto Sans CJK SC,sans-serif" font-weight="700" transform="rotate(-90 654.4 164.5)">DN25</text>
<text x="656.0" y="227.5" font-size="3.0" fill="#ffffff" text-anchor="middle" font-family="Liberation Sans,Noto Sans CJK SC,sans-serif" font-weight="700" transform="rotate(-90 656.0 227.5)">DN50</text>
<text x="655.2" y="180.0" font-size="3.0" fill="#ffffff" text-anchor="middle" font-family="Liberation Sans,Noto Sans CJK SC,sans-serif" font-weight="700" transform="rotate(-90 655.2 180.0)">DN25</text>
<text x="654.4" y="200.8" font-size="3.0" fill="#ffffff" text-anchor="middle" font-family="Liberation Sans,Noto Sans CJK SC,sans-serif" font-weight="700" transform="rotate(-90 654.4 200.8)">DN32</text>
<text x="652.4" y="249.9" font-size="4.8" fill="#f0b070" text-anchor="middle" font-family="Liberation Sans,Noto Sans CJK SC,sans-serif" font-weight="700" textLength="4.3" lengthAdjust="spacingAndGlyphs">WL</text>
<text x="651.2" y="116.7" font-size="4.8" fill="#f0b070" text-anchor="middle" font-family="Liberation Sans,Noto Sans CJK SC,sans-serif" font-weight="700" textLength="4.3" lengthAdjust="spacingAndGlyphs">WL</text>
<text x="695.8" y="138.3" font-size="3.0" fill="#ffffff" text-anchor="middle" font-family="Liberation Sans,Noto Sans CJK SC,sans-serif" font-weight="700" transform="rotate(-90 695.8 138.3)">DN50</text>
<text x="694.2" y="164.5" font-size="3.0" fill="#ffffff" text-anchor="middle" font-family="Liberation Sans,Noto Sans CJK SC,sans-serif" font-weight="700" transform="rotate(-90 694.2 164.5)">DN25</text>
<text x="695.8" y="227.5" font-size="3.0" fill="#ffffff" text-anchor="middle" font-family="Liberation Sans,Noto Sans CJK SC,sans-serif" font-weight="700" transform="rotate(-90 695.8 227.5)">DN50</text>
<text x="695.0" y="180.0" font-size="3.0" fill="#ffffff" text-anchor="middle" font-family="Liberation Sans,Noto Sans CJK SC,sans-serif" font-weight="700" transform="rotate(-90 695.0 180.0)">DN25</text>
<text x="694.2" y="200.8" font-size="3.0" fill="#ffffff" text-anchor="middle" font-family="Liberation Sans,Noto Sans CJK SC,sans-serif" font-weight="700" transform="rotate(-90 694.2 200.8)">DN32</text>
<text x="692.2" y="249.9" font-size="4.8" fill="#f0b070" text-anchor="middle" font-family="Liberation Sans,Noto Sans CJK SC,sans-serif" font-weight="700" textLength="4.3" lengthAdjust="spacingAndGlyphs">WL</text>
<text x="691.0" y="116.7" font-size="4.8" fill="#f0b070" text-anchor="middle" font-family="Liberation Sans,Noto Sans CJK SC,sans-serif" font-weight="700" textLength="4.3" lengthAdjust="spacingAndGlyphs">WL</text>
<text x="735.5" y="138.3" font-size="3.0" fill="#ffffff" text-anchor="middle" font-family="Liberation Sans,Noto Sans CJK SC,sans-serif" font-weight="700" transform="rotate(-90 735.5 138.3)">DN50</text>
<text x="733.9" y="164.5" font-size="3.0" fill="#ffffff" text-anchor="middle" font-family="Liberation Sans,Noto Sans CJK SC,sans-serif" font-weight="700" transform="rotate(-90 733.9 164.5)">DN25</text>
<text x="735.5" y="227.5" font-size="3.0" fill="#ffffff" text-anchor="middle" font-family="Liberation Sans,Noto Sans CJK SC,sans-serif" font-weight="700" transform="rotate(-90 735.5 227.5)">DN50</text>
<text x="734.7" y="180.0" font-size="3.0" fill="#ffffff" text-anchor="middle" font-family="Liberation Sans,Noto Sans CJK SC,sans-serif" font-weight="700" transform="rotate(-90 734.7 180.0)">DN25</text>
<text x="733.9" y="200.8" font-size="3.0" fill="#ffffff" text-anchor="middle" font-family="Liberation Sans,Noto Sans CJK SC,sans-serif" font-weight="700" transform="rotate(-90 733.9 200.8)">DN32</text>
<text x="731.9" y="249.9" font-size="4.8" fill="#f0b070" text-anchor="middle" font-family="Liberation Sans,Noto Sans CJK SC,sans-serif" font-weight="700" textLength="4.3" lengthAdjust="spacingAndGlyphs">WL</text>
<text x="730.7" y="116.7" font-size="4.8" fill="#f0b070" text-anchor="middle" font-family="Liberation Sans,Noto Sans CJK SC,sans-serif" font-weight="700" textLength="4.3" lengthAdjust="spacingAndGlyphs">WL</text>
<text x="775.3" y="138.3" font-size="3.0" fill="#ffffff" text-anchor="middle" font-family="Liberation Sans,Noto Sans CJK SC,sans-serif" font-weight="700" transform="rotate(-90 775.3 138.3)">DN50</text>
<text x="773.7" y="164.5" font-size="3.0" fill="#ffffff" text-anchor="middle" font-family="Liberation Sans,Noto Sans CJK SC,sans-serif" font-weight="700" transform="rotate(-90 773.7 164.5)">DN25</text>
<text x="775.3" y="227.5" font-size="3.0" fill="#ffffff" text-anchor="middle" font-family="Liberation Sans,Noto Sans CJK SC,sans-serif" font-weight="700" transform="rotate(-90 775.3 227.5)">DN50</text>
<text x="774.5" y="180.0" font-size="3.0" fill="#ffffff" text-anchor="middle" font-family="Liberation Sans,Noto Sans CJK SC,sans-serif" font-weight="700" transform="rotate(-90 774.5 180.0)">DN25</text>
<text x="773.7" y="200.8" font-size="3.0" fill="#ffffff" text-anchor="middle" font-family="Liberation Sans,Noto Sans CJK SC,sans-serif" font-weight="700" transform="rotate(-90 773.7 200.8)">DN32</text>
<text x="771.7" y="249.9" font-size="4.8" fill="#f0b070" text-anchor="middle" font-family="Liberation Sans,Noto Sans CJK SC,sans-serif" font-weight="700" textLength="4.3" lengthAdjust="spacingAndGlyphs">WL</text>
<text x="770.5" y="116.7" font-size="4.8" fill="#f0b070" text-anchor="middle" font-family="Liberation Sans,Noto Sans CJK SC,sans-serif" font-weight="700" textLength="4.3" lengthAdjust="spacingAndGlyphs">WL</text>
<text x="815.0" y="227.5" font-size="3.0" fill="#ffffff" text-anchor="middle" font-family="Liberation Sans,Noto Sans CJK SC,sans-serif" font-weight="700" transform="rotate(-90 815.0 227.5)">DN50</text>
<text x="814.2" y="180.0" font-size="3.0" fill="#ffffff" text-anchor="middle" font-family="Liberation Sans,Noto Sans CJK SC,sans-serif" font-weight="700" transform="rotate(-90 814.2 180.0)">DN25</text>
<text x="813.4" y="200.8" font-size="3.0" fill="#ffffff" text-anchor="middle" font-family="Liberation Sans,Noto Sans CJK SC,sans-serif" font-weight="700" transform="rotate(-90 813.4 200.8)">DN32</text>
<text x="811.4" y="249.9" font-size="4.8" fill="#f0b070" text-anchor="middle" font-family="Liberation Sans,Noto Sans CJK SC,sans-serif" font-weight="700" textLength="4.3" lengthAdjust="spacingAndGlyphs">WL</text>
<text x="854.8" y="138.3" font-size="3.0" fill="#ffffff" text-anchor="middle" font-family="Liberation Sans,Noto Sans CJK SC,sans-serif" font-weight="700" transform="rotate(-90 854.8 138.3)">DN50</text>
<text x="853.1" y="164.5" font-size="3.0" fill="#ffffff" text-anchor="middle" font-family="Liberation Sans,Noto Sans CJK SC,sans-serif" font-weight="700" transform="rotate(-90 853.1 164.5)">DN25</text>
<text x="854.8" y="227.5" font-size="3.0" fill="#ffffff" text-anchor="middle" font-family="Liberation Sans,Noto Sans CJK SC,sans-serif" font-weight="700" transform="rotate(-90 854.8 227.5)">DN50</text>
<text x="854.0" y="180.0" font-size="3.0" fill="#ffffff" text-anchor="middle" font-family="Liberation Sans,Noto Sans CJK SC,sans-serif" font-weight="700" transform="rotate(-90 854.0 180.0)">DN25</text>
<text x="853.1" y="200.8" font-size="3.0" fill="#ffffff" text-anchor="middle" font-family="Liberation Sans,Noto Sans CJK SC,sans-serif" font-weight="700" transform="rotate(-90 853.1 200.8)">DN32</text>
<text x="851.1" y="249.9" font-size="4.8" fill="#f0b070" text-anchor="middle" font-family="Liberation Sans,Noto Sans CJK SC,sans-serif" font-weight="700" textLength="4.3" lengthAdjust="spacingAndGlyphs">WL</text>
<text x="397.8" y="172.3" font-size="3.0" fill="#f0f0f0" text-anchor="middle" font-family="Liberation Sans,Noto Sans CJK SC,sans-serif" font-weight="700">DN100</text>
<text x="437.6" y="172.3" font-size="3.0" fill="#f0f0f0" text-anchor="middle" font-family="Liberation Sans,Noto Sans CJK SC,sans-serif" font-weight="700">DN100</text>
<text x="477.3" y="172.3" font-size="3.0" fill="#f0f0f0" text-anchor="middle" font-family="Liberation Sans,Noto Sans CJK SC,sans-serif" font-weight="700">DN100</text>
<text x="517.1" y="172.3" font-size="3.0" fill="#f0f0f0" text-anchor="middle" font-family="Liberation Sans,Noto Sans CJK SC,sans-serif" font-weight="700">DN100</text>
<text x="556.8" y="172.3" font-size="3.0" fill="#f0f0f0" text-anchor="middle" font-family="Liberation Sans,Noto Sans CJK SC,sans-serif" font-weight="700">DN100</text>
<text x="596.5" y="172.3" font-size="3.0" fill="#f0f0f0" text-anchor="middle" font-family="Liberation Sans,Noto Sans CJK SC,sans-serif" font-weight="700">DN50</text>
<text x="636.3" y="172.3" font-size="3.0" fill="#f0f0f0" text-anchor="middle" font-family="Liberation Sans,Noto Sans CJK SC,sans-serif" font-weight="700">DN50</text>
<text x="676.0" y="172.3" font-size="3.0" fill="#f0f0f0" text-anchor="middle" font-family="Liberation Sans,Noto Sans CJK SC,sans-serif" font-weight="700">DN50</text>
<text x="715.8" y="172.3" font-size="3.0" fill="#f0f0f0" text-anchor="middle" font-family="Liberation Sans,Noto Sans CJK SC,sans-serif" font-weight="700">DN50</text>
<text x="755.5" y="172.3" font-size="3.0" fill="#f0f0f0" text-anchor="middle" font-family="Liberation Sans,Noto Sans CJK SC,sans-serif" font-weight="700">DN50</text>
<text x="795.2" y="172.3" font-size="3.0" fill="#f0f0f0" text-anchor="middle" font-family="Liberation Sans,Noto Sans CJK SC,sans-serif" font-weight="700">DN50</text>
<text x="317.0" y="163.3" font-size="3.3" fill="#e6e6e6" text-anchor="middle" font-family="Liberation Sans,Noto Sans CJK SC,sans-serif" font-weight="700">由市政给水管网接入</text>
<text x="333.5" y="158.8" font-size="3.2" fill="#e6e6e6" text-anchor="middle" font-family="Liberation Sans,Noto Sans CJK SC,sans-serif">-1.10</text>
<text x="344.0" y="165.1" font-size="3.2" fill="#e6e6e6" text-anchor="middle" font-family="Liberation Sans,Noto Sans CJK SC,sans-serif">DN100</text>
<text x="363.0" y="156.0" font-size="3.4" fill="#e6e6e6" text-anchor="middle" font-family="Liberation Sans,Noto Sans CJK SC,sans-serif">JL-1</text>
<text x="366.0" y="177.1" font-size="3.2" fill="#e6e6e6" text-anchor="middle" font-family="Liberation Sans,Noto Sans CJK SC,sans-serif">DN100</text>
<text x="383.5" y="177.1" font-size="3.2" fill="#e6e6e6" text-anchor="middle" font-family="Liberation Sans,Noto Sans CJK SC,sans-serif">DN100</text>
<text x="384.0" y="169.1" font-size="3.2" fill="#e6e6e6" text-anchor="middle" font-family="Liberation Sans,Noto Sans CJK SC,sans-serif" transform="rotate(20 384.0 169.1)">-1.00</text>
<text x="449.4" y="95.7" font-size="4.5" fill="#f0b070" text-anchor="middle" font-family="Liberation Sans,Noto Sans CJK SC,sans-serif" font-weight="700">卫1</text>
<text x="502.3" y="95.7" font-size="4.5" fill="#f0b070" text-anchor="middle" font-family="Liberation Sans,Noto Sans CJK SC,sans-serif" font-weight="700">卫1</text>
<text x="528.9" y="95.7" font-size="4.5" fill="#f0b070" text-anchor="middle" font-family="Liberation Sans,Noto Sans CJK SC,sans-serif" font-weight="700">卫1</text>
<text x="581.7" y="95.7" font-size="4.5" fill="#f0b070" text-anchor="middle" font-family="Liberation Sans,Noto Sans CJK SC,sans-serif" font-weight="700">卫1</text>
<text x="608.3" y="95.7" font-size="4.5" fill="#f0b070" text-anchor="middle" font-family="Liberation Sans,Noto Sans CJK SC,sans-serif" font-weight="700">卫1</text>
<text x="687.8" y="95.7" font-size="4.5" fill="#f0b070" text-anchor="middle" font-family="Liberation Sans,Noto Sans CJK SC,sans-serif" font-weight="700">卫1</text>
<text x="740.7" y="95.7" font-size="4.5" fill="#f0b070" text-anchor="middle" font-family="Liberation Sans,Noto Sans CJK SC,sans-serif" font-weight="700">卫1</text>
<text x="767.3" y="95.7" font-size="4.5" fill="#f0b070" text-anchor="middle" font-family="Liberation Sans,Noto Sans CJK SC,sans-serif" font-weight="700">卫1</text>
<text x="369.9" y="269.4" font-size="4.5" fill="#f0b070" text-anchor="middle" font-family="Liberation Sans,Noto Sans CJK SC,sans-serif" font-weight="700">卫1</text>
<text x="422.8" y="269.4" font-size="4.5" fill="#f0b070" text-anchor="middle" font-family="Liberation Sans,Noto Sans CJK SC,sans-serif" font-weight="700">卫1</text>
<text x="449.4" y="269.4" font-size="4.5" fill="#f0b070" text-anchor="middle" font-family="Liberation Sans,Noto Sans CJK SC,sans-serif" font-weight="700">卫1</text>
<text x="502.3" y="269.4" font-size="4.5" fill="#f0b070" text-anchor="middle" font-family="Liberation Sans,Noto Sans CJK SC,sans-serif" font-weight="700">卫1</text>
<text x="528.9" y="269.4" font-size="4.5" fill="#f0b070" text-anchor="middle" font-family="Liberation Sans,Noto Sans CJK SC,sans-serif" font-weight="700">卫1</text>
<text x="581.7" y="269.4" font-size="4.5" fill="#f0b070" text-anchor="middle" font-family="Liberation Sans,Noto Sans CJK SC,sans-serif" font-weight="700">卫1</text>
<text x="608.3" y="269.4" font-size="4.5" fill="#f0b070" text-anchor="middle" font-family="Liberation Sans,Noto Sans CJK SC,sans-serif" font-weight="700">卫1</text>
<text x="661.2" y="269.4" font-size="4.5" fill="#f0b070" text-anchor="middle" font-family="Liberation Sans,Noto Sans CJK SC,sans-serif" font-weight="700">卫1</text>
<text x="687.8" y="269.4" font-size="4.5" fill="#f0b070" text-anchor="middle" font-family="Liberation Sans,Noto Sans CJK SC,sans-serif" font-weight="700">卫1</text>
<text x="740.7" y="269.4" font-size="4.5" fill="#f0b070" text-anchor="middle" font-family="Liberation Sans,Noto Sans CJK SC,sans-serif" font-weight="700">卫1</text>
<text x="767.3" y="269.4" font-size="4.5" fill="#f0b070" text-anchor="middle" font-family="Liberation Sans,Noto Sans CJK SC,sans-serif" font-weight="700">卫1</text>
<text x="820.2" y="269.4" font-size="4.5" fill="#f0b070" text-anchor="middle" font-family="Liberation Sans,Noto Sans CJK SC,sans-serif" font-weight="700">卫1</text>
<text x="846.8" y="269.4" font-size="4.5" fill="#f0b070" text-anchor="middle" font-family="Liberation Sans,Noto Sans CJK SC,sans-serif" font-weight="700">卫1</text>
<text x="662.3" y="110.8" font-size="3.6" fill="#f0a860" text-anchor="middle" font-family="Liberation Sans,Noto Sans CJK SC,sans-serif" font-weight="700" textLength="6.8" lengthAdjust="spacingAndGlyphs">卫生间</text>
<text x="648.3" y="152.3" font-size="3.6" fill="#f0a860" text-anchor="middle" font-family="Liberation Sans,Noto Sans CJK SC,sans-serif" font-weight="700" textLength="6.8" lengthAdjust="spacingAndGlyphs">洗衣房</text>
<text x="373.8" y="138.3" font-size="3.6" fill="#f0a860" text-anchor="middle" font-family="Liberation Sans,Noto Sans CJK SC,sans-serif" font-weight="700" textLength="6.8" lengthAdjust="spacingAndGlyphs">值班室</text>
<text x="404.2" y="138.3" font-size="3.6" fill="#f0a860" text-anchor="middle" font-family="Liberation Sans,Noto Sans CJK SC,sans-serif" font-weight="700" textLength="6.8" lengthAdjust="spacingAndGlyphs">楼梯间</text>
<text x="424.0" y="139.8" font-size="3.2" fill="#e6e6e6" text-anchor="middle" font-family="Liberation Sans,Noto Sans CJK SC,sans-serif">上</text>
<text x="801.7" y="139.3" font-size="3.6" fill="#f0a860" text-anchor="middle" font-family="Liberation Sans,Noto Sans CJK SC,sans-serif" font-weight="700" textLength="6.8" lengthAdjust="spacingAndGlyphs">楼梯间</text>
<text x="825.5" y="139.8" font-size="3.2" fill="#e6e6e6" text-anchor="middle" font-family="Liberation Sans,Noto Sans CJK SC,sans-serif">上</text>
<text x="844.0" y="139.3" font-size="3.6" fill="#f0a860" text-anchor="middle" font-family="Liberation Sans,Noto Sans CJK SC,sans-serif" font-weight="700" textLength="4.8" lengthAdjust="spacingAndGlyphs">门厅</text>
<text x="858.5" y="112.3" font-size="3.2" fill="#e6e6e6" text-anchor="middle" font-family="Liberation Sans,Noto Sans CJK SC,sans-serif">DN25</text>
<text x="872.5" y="121.1" font-size="3.4" fill="#e6e6e6" text-anchor="middle" font-family="Liberation Sans,Noto Sans CJK SC,sans-serif" font-weight="700">末端试水装置</text>
<text x="870.5" y="127.6" font-size="3.4" fill="#e6e6e6" text-anchor="middle" font-family="Liberation Sans,Noto Sans CJK SC,sans-serif" font-weight="700">距地1.5m</text>
<text x="803.7" y="168.8" font-size="3.0" fill="#e6e6e6" text-anchor="middle" font-family="Liberation Sans,Noto Sans CJK SC,sans-serif">-1.00</text>
<text x="366.5" y="291.8" font-size="3.1" fill="#f4f4f4" text-anchor="middle" font-family="Liberation Sans,Noto Sans CJK SC,sans-serif" font-weight="700">1800</text>
<text x="386.4" y="291.8" font-size="3.1" fill="#f4f4f4" text-anchor="middle" font-family="Liberation Sans,Noto Sans CJK SC,sans-serif" font-weight="700">1800</text>
<text x="406.3" y="291.8" font-size="3.1" fill="#f4f4f4" text-anchor="middle" font-family="Liberation Sans,Noto Sans CJK SC,sans-serif" font-weight="700">1800</text>
<text x="426.1" y="291.8" font-size="3.1" fill="#f4f4f4" text-anchor="middle" font-family="Liberation Sans,Noto Sans CJK SC,sans-serif" font-weight="700">1800</text>
<text x="446.0" y="291.8" font-size="3.1" fill="#f4f4f4" text-anchor="middle" font-family="Liberation Sans,Noto Sans CJK SC,sans-serif" font-weight="700">1800</text>
<text x="465.9" y="291.8" font-size="3.1" fill="#f4f4f4" text-anchor="middle" font-family="Liberation Sans,Noto Sans CJK SC,sans-serif" font-weight="700">1800</text>
<text x="485.8" y="291.8" font-size="3.1" fill="#f4f4f4" text-anchor="middle" font-family="Liberation Sans,Noto Sans CJK SC,sans-serif" font-weight="700">1800</text>
<text x="505.6" y="291.8" font-size="3.1" fill="#f4f4f4" text-anchor="middle" font-family="Liberation Sans,Noto Sans CJK SC,sans-serif" font-weight="700">1800</text>
<text x="525.5" y="291.8" font-size="3.1" fill="#f4f4f4" text-anchor="middle" font-family="Liberation Sans,Noto Sans CJK SC,sans-serif" font-weight="700">1800</text>
<text x="545.4" y="291.8" font-size="3.1" fill="#f4f4f4" text-anchor="middle" font-family="Liberation Sans,Noto Sans CJK SC,sans-serif" font-weight="700">1800</text>
<text x="565.2" y="291.8" font-size="3.1" fill="#f4f4f4" text-anchor="middle" font-family="Liberation Sans,Noto Sans CJK SC,sans-serif" font-weight="700">1800</text>
<text x="585.1" y="291.8" font-size="3.1" fill="#f4f4f4" text-anchor="middle" font-family="Liberation Sans,Noto Sans CJK SC,sans-serif" font-weight="700">1800</text>
<text x="605.0" y="291.8" font-size="3.1" fill="#f4f4f4" text-anchor="middle" font-family="Liberation Sans,Noto Sans CJK SC,sans-serif" font-weight="700">1800</text>
<text x="624.8" y="291.8" font-size="3.1" fill="#f4f4f4" text-anchor="middle" font-family="Liberation Sans,Noto Sans CJK SC,sans-serif" font-weight="700">1800</text>
<text x="644.7" y="291.8" font-size="3.1" fill="#f4f4f4" text-anchor="middle" font-family="Liberation Sans,Noto Sans CJK SC,sans-serif" font-weight="700">1800</text>
<text x="664.6" y="291.8" font-size="3.1" fill="#f4f4f4" text-anchor="middle" font-family="Liberation Sans,Noto Sans CJK SC,sans-serif" font-weight="700">1800</text>
<text x="684.5" y="291.8" font-size="3.1" fill="#f4f4f4" text-anchor="middle" font-family="Liberation Sans,Noto Sans CJK SC,sans-serif" font-weight="700">1800</text>
<text x="704.3" y="291.8" font-size="3.1" fill="#f4f4f4" text-anchor="middle" font-family="Liberation Sans,Noto Sans CJK SC,sans-serif" font-weight="700">1800</text>
<text x="724.2" y="291.8" font-size="3.1" fill="#f4f4f4" text-anchor="middle" font-family="Liberation Sans,Noto Sans CJK SC,sans-serif" font-weight="700">1800</text>
<text x="744.1" y="291.8" font-size="3.1" fill="#f4f4f4" text-anchor="middle" font-family="Liberation Sans,Noto Sans CJK SC,sans-serif" font-weight="700">1800</text>
<text x="763.9" y="291.8" font-size="3.1" fill="#f4f4f4" text-anchor="middle" font-family="Liberation Sans,Noto Sans CJK SC,sans-serif" font-weight="700">1800</text>
<text x="783.8" y="291.8" font-size="3.1" fill="#f4f4f4" text-anchor="middle" font-family="Liberation Sans,Noto Sans CJK SC,sans-serif" font-weight="700">1800</text>
<text x="803.7" y="291.8" font-size="3.1" fill="#f4f4f4" text-anchor="middle" font-family="Liberation Sans,Noto Sans CJK SC,sans-serif" font-weight="700">1800</text>
<text x="823.5" y="291.8" font-size="3.1" fill="#f4f4f4" text-anchor="middle" font-family="Liberation Sans,Noto Sans CJK SC,sans-serif" font-weight="700">1800</text>
<text x="843.4" y="291.8" font-size="3.1" fill="#f4f4f4" text-anchor="middle" font-family="Liberation Sans,Noto Sans CJK SC,sans-serif" font-weight="700">1800</text>
<text x="863.3" y="291.8" font-size="3.1" fill="#f4f4f4" text-anchor="middle" font-family="Liberation Sans,Noto Sans CJK SC,sans-serif" font-weight="700">1800</text>
<text x="356.6" y="346.4" font-size="6.6" fill="#c8c8c8" text-anchor="middle" font-family="Liberation Sans,Noto Sans CJK SC,sans-serif" textLength="3.2" lengthAdjust="spacingAndGlyphs">1</text>
<text x="376.5" y="323.4" font-size="3.1" fill="#f4f4f4" text-anchor="middle" font-family="Liberation Sans,Noto Sans CJK SC,sans-serif" font-weight="700">3600</text>
<text x="396.3" y="346.4" font-size="6.6" fill="#c8c8c8" text-anchor="middle" font-family="Liberation Sans,Noto Sans CJK SC,sans-serif" textLength="3.2" lengthAdjust="spacingAndGlyphs">2</text>
<text x="416.2" y="323.4" font-size="3.1" fill="#f4f4f4" text-anchor="middle" font-family="Liberation Sans,Noto Sans CJK SC,sans-serif" font-weight="700">3600</text>
<text x="436.1" y="346.4" font-size="6.6" fill="#c8c8c8" text-anchor="middle" font-family="Liberation Sans,Noto Sans CJK SC,sans-serif" textLength="3.2" lengthAdjust="spacingAndGlyphs">3</text>
<text x="456.0" y="323.4" font-size="3.1" fill="#f4f4f4" text-anchor="middle" font-family="Liberation Sans,Noto Sans CJK SC,sans-serif" font-weight="700">3600</text>
<text x="475.8" y="346.4" font-size="6.6" fill="#c8c8c8" text-anchor="middle" font-family="Liberation Sans,Noto Sans CJK SC,sans-serif" textLength="3.2" lengthAdjust="spacingAndGlyphs">4</text>
<text x="495.7" y="323.4" font-size="3.1" fill="#f4f4f4" text-anchor="middle" font-family="Liberation Sans,Noto Sans CJK SC,sans-serif" font-weight="700">3600</text>
<text x="515.6" y="346.4" font-size="6.6" fill="#c8c8c8" text-anchor="middle" font-family="Liberation Sans,Noto Sans CJK SC,sans-serif" textLength="3.2" lengthAdjust="spacingAndGlyphs">5</text>
<text x="535.4" y="323.4" font-size="3.1" fill="#f4f4f4" text-anchor="middle" font-family="Liberation Sans,Noto Sans CJK SC,sans-serif" font-weight="700">3600</text>
<text x="555.3" y="346.4" font-size="6.6" fill="#c8c8c8" text-anchor="middle" font-family="Liberation Sans,Noto Sans CJK SC,sans-serif" textLength="3.2" lengthAdjust="spacingAndGlyphs">6</text>
<text x="575.2" y="323.4" font-size="3.1" fill="#f4f4f4" text-anchor="middle" font-family="Liberation Sans,Noto Sans CJK SC,sans-serif" font-weight="700">3600</text>
<text x="595.0" y="346.4" font-size="6.6" fill="#c8c8c8" text-anchor="middle" font-family="Liberation Sans,Noto Sans CJK SC,sans-serif" textLength="3.2" lengthAdjust="spacingAndGlyphs">7</text>
<text x="614.9" y="323.4" font-size="3.1" fill="#f4f4f4" text-anchor="middle" font-family="Liberation Sans,Noto Sans CJK SC,sans-serif" font-weight="700">3600</text>
<text x="634.8" y="346.4" font-size="6.6" fill="#c8c8c8" text-anchor="middle" font-family="Liberation Sans,Noto Sans CJK SC,sans-serif" textLength="3.2" lengthAdjust="spacingAndGlyphs">8</text>
<text x="654.6" y="323.4" font-size="3.1" fill="#f4f4f4" text-anchor="middle" font-family="Liberation Sans,Noto Sans CJK SC,sans-serif" font-weight="700">3600</text>
<text x="674.5" y="346.4" font-size="6.6" fill="#c8c8c8" text-anchor="middle" font-family="Liberation Sans,Noto Sans CJK SC,sans-serif" textLength="3.2" lengthAdjust="spacingAndGlyphs">9</text>
<text x="694.4" y="323.4" font-size="3.1" fill="#f4f4f4" text-anchor="middle" font-family="Liberation Sans,Noto Sans CJK SC,sans-serif" font-weight="700">3600</text>
<text x="714.3" y="346.4" font-size="6.6" fill="#c8c8c8" text-anchor="middle" font-family="Liberation Sans,Noto Sans CJK SC,sans-serif" textLength="4.6" lengthAdjust="spacingAndGlyphs">10</text>
<text x="734.1" y="323.4" font-size="3.1" fill="#f4f4f4" text-anchor="middle" font-family="Liberation Sans,Noto Sans CJK SC,sans-serif" font-weight="700">3600</text>
<text x="754.0" y="346.4" font-size="6.6" fill="#c8c8c8" text-anchor="middle" font-family="Liberation Sans,Noto Sans CJK SC,sans-serif" textLength="4.6" lengthAdjust="spacingAndGlyphs">11</text>
<text x="773.9" y="323.4" font-size="3.1" fill="#f4f4f4" text-anchor="middle" font-family="Liberation Sans,Noto Sans CJK SC,sans-serif" font-weight="700">3600</text>
<text x="793.7" y="346.4" font-size="6.6" fill="#c8c8c8" text-anchor="middle" font-family="Liberation Sans,Noto Sans CJK SC,sans-serif" textLength="4.6" lengthAdjust="spacingAndGlyphs">12</text>
<text x="813.6" y="323.4" font-size="3.1" fill="#f4f4f4" text-anchor="middle" font-family="Liberation Sans,Noto Sans CJK SC,sans-serif" font-weight="700">3600</text>
<text x="833.5" y="346.4" font-size="6.6" fill="#c8c8c8" text-anchor="middle" font-family="Liberation Sans,Noto Sans CJK SC,sans-serif" textLength="4.6" lengthAdjust="spacingAndGlyphs">13</text>
<text x="853.4" y="323.4" font-size="3.1" fill="#f4f4f4" text-anchor="middle" font-family="Liberation Sans,Noto Sans CJK SC,sans-serif" font-weight="700">3600</text>
<text x="873.2" y="346.4" font-size="6.6" fill="#c8c8c8" text-anchor="middle" font-family="Liberation Sans,Noto Sans CJK SC,sans-serif" textLength="4.6" lengthAdjust="spacingAndGlyphs">14</text>
<text x="574.7" y="370.2" font-size="7.0" fill="#f2f2f2" text-anchor="start" font-family="Liberation Sans,Noto Sans CJK SC,sans-serif" textLength="42" lengthAdjust="spacingAndGlyphs">一层喷淋平面图</text>
<text x="631.0" y="370.6" font-size="4.6" fill="#e0e0e0" text-anchor="start" font-family="Liberation Sans,Noto Sans CJK SC,sans-serif">1:150</text>
<text x="574.7" y="379.8" font-size="3.6" fill="#ffff00" text-anchor="start" font-family="Liberation Sans,Noto Sans CJK SC,sans-serif" font-weight="700" textLength="40" lengthAdjust="spacingAndGlyphs">注:本层喷淋立管见系统图</text>
<text x="759.7" y="400.6" font-size="3.4" fill="#e6e6e6" text-anchor="middle" font-family="Liberation Sans,Noto Sans CJK SC,sans-serif" font-weight="700">日期</text>
<text x="779.5" y="400.6" font-size="3.4" fill="#e6e6e6" text-anchor="middle" font-family="Liberation Sans,Noto Sans CJK SC,sans-serif">2014.07</text>
<text x="759.7" y="410.2" font-size="3.4" fill="#e6e6e6" text-anchor="middle" font-family="Liberation Sans,Noto Sans CJK SC,sans-serif" font-weight="700">图纸编号</text>
<text x="777.5" y="410.2" font-size="3.4" fill="#ff2020" text-anchor="middle" font-family="Liberation Sans,Noto Sans CJK SC,sans-serif" font-weight="700">水施-07</text>
<text x="806.7" y="405.0" font-size="3.4" fill="#e6e6e6" text-anchor="middle" font-family="Liberation Sans,Noto Sans CJK SC,sans-serif" font-weight="700">工程名称</text>
<text x="836.3" y="405.0" font-size="3.4" fill="#e6e6e6" text-anchor="middle" font-family="Liberation Sans,Noto Sans CJK SC,sans-serif" font-weight="700">专用宿舍楼</text>
<text x="875.2" y="405.0" font-size="3.4" fill="#e6e6e6" text-anchor="middle" font-family="Liberation Sans,Noto Sans CJK SC,sans-serif" font-weight="700">图纸名称</text>
<text x="899.8" y="405.0" font-size="3.4" fill="#ff2020" text-anchor="middle" font-family="Liberation Sans,Noto Sans CJK SC,sans-serif" font-weight="700" textLength="18" lengthAdjust="spacingAndGlyphs">一层喷淋平面图</text>
<text x="594.8" y="488.2" font-size="30.2" fill="#f4f4f4" text-anchor="middle" font-family="DejaVu Sans,sans-serif" font-weight="200" textLength="82" lengthAdjust="spacingAndGlyphs">48234</text>
<text x="311.6" y="582.4" font-size="6.6" fill="#c8c8c8" text-anchor="middle" font-family="Liberation Sans,Noto Sans CJK SC,sans-serif">F</text>
<text x="311.6" y="602.4" font-size="6.6" fill="#c8c8c8" text-anchor="middle" font-family="Liberation Sans,Noto Sans CJK SC,sans-serif">E</text>
<text x="311.6" y="662.1" font-size="6.6" fill="#c8c8c8" text-anchor="middle" font-family="Liberation Sans,Noto Sans CJK SC,sans-serif">D</text>
<text x="311.6" y="688.9" font-size="6.6" fill="#c8c8c8" text-anchor="middle" font-family="Liberation Sans,Noto Sans CJK SC,sans-serif">C</text>
<text x="311.6" y="748.1" font-size="6.6" fill="#c8c8c8" text-anchor="middle" font-family="Liberation Sans,Noto Sans CJK SC,sans-serif">B</text>
<text x="311.6" y="768.3" font-size="6.6" fill="#c8c8c8" text-anchor="middle" font-family="Liberation Sans,Noto Sans CJK SC,sans-serif">A</text>
<text x="327.6" y="590.0" font-size="3.4" fill="#e6e6e6" text-anchor="middle" font-family="Liberation Sans,Noto Sans CJK SC,sans-serif" transform="rotate(-90 327.6 590.0)">1500</text>
<text x="327.6" y="629.9" font-size="3.4" fill="#e6e6e6" text-anchor="middle" font-family="Liberation Sans,Noto Sans CJK SC,sans-serif" transform="rotate(-90 327.6 629.9)">5400</text>
<text x="327.6" y="673.1" font-size="3.4" fill="#e6e6e6" text-anchor="middle" font-family="Liberation Sans,Noto Sans CJK SC,sans-serif" transform="rotate(-90 327.6 673.1)">2400</text>
<text x="327.6" y="716.1" font-size="3.4" fill="#e6e6e6" text-anchor="middle" font-family="Liberation Sans,Noto Sans CJK SC,sans-serif" transform="rotate(-90 327.6 716.1)">5400</text>
<text x="327.6" y="755.8" font-size="3.4" fill="#e6e6e6" text-anchor="middle" font-family="Liberation Sans,Noto Sans CJK SC,sans-serif" transform="rotate(-90 327.6 755.8)">1500</text>
<text x="319.2" y="673.1" font-size="3.4" fill="#e6e6e6" text-anchor="middle" font-family="Liberation Sans,Noto Sans CJK SC,sans-serif" transform="rotate(-90 319.2 673.1)">16200</text>
<text x="919.4" y="582.4" font-size="6.6" fill="#c8c8c8" text-anchor="middle" font-family="Liberation Sans,Noto Sans CJK SC,sans-serif">F</text>
<text x="919.4" y="602.4" font-size="6.6" fill="#c8c8c8" text-anchor="middle" font-family="Liberation Sans,Noto Sans CJK SC,sans-serif">E</text>
<text x="919.4" y="662.1" font-size="6.6" fill="#c8c8c8" text-anchor="middle" font-family="Liberation Sans,Noto Sans CJK SC,sans-serif">D</text>
<text x="919.4" y="688.9" font-size="6.6" fill="#c8c8c8" text-anchor="middle" font-family="Liberation Sans,Noto Sans CJK SC,sans-serif">C</text>
<text x="919.4" y="748.1" font-size="6.6" fill="#c8c8c8" text-anchor="middle" font-family="Liberation Sans,Noto Sans CJK SC,sans-serif">B</text>
<text x="919.4" y="768.3" font-size="6.6" fill="#c8c8c8" text-anchor="middle" font-family="Liberation Sans,Noto Sans CJK SC,sans-serif">A</text>
<text x="900.2" y="590.0" font-size="3.4" fill="#e6e6e6" text-anchor="middle" font-family="Liberation Sans,Noto Sans CJK SC,sans-serif" transform="rotate(-90 900.2 590.0)">1500</text>
<text x="900.2" y="629.9" font-size="3.4" fill="#e6e6e6" text-anchor="middle" font-family="Liberation Sans,Noto Sans CJK SC,sans-serif" transform="rotate(-90 900.2 629.9)">5400</text>
<text x="900.2" y="673.1" font-size="3.4" fill="#e6e6e6" text-anchor="middle" font-family="Liberation Sans,Noto Sans CJK SC,sans-serif" transform="rotate(-90 900.2 673.1)">2400</text>
<text x="900.2" y="716.1" font-size="3.4" fill="#e6e6e6" text-anchor="middle" font-family="Liberation Sans,Noto Sans CJK SC,sans-serif" transform="rotate(-90 900.2 716.1)">5400</text>
<text x="900.2" y="755.8" font-size="3.4" fill="#e6e6e6" text-anchor="middle" font-family="Liberation Sans,Noto Sans CJK SC,sans-serif" transform="rotate(-90 900.2 755.8)">1500</text>
<text x="909.5" y="673.1" font-size="3.4" fill="#e6e6e6" text-anchor="middle" font-family="Liberation Sans,Noto Sans CJK SC,sans-serif" transform="rotate(-90 909.5 673.1)">16200</text>
<text x="350.2" y="607.0" font-size="3.2" fill="#e6e6e6" text-anchor="middle" font-family="Liberation Sans,Noto Sans CJK SC,sans-serif" transform="rotate(-90 350.2 607.0)">900</text>
<text x="350.2" y="626.0" font-size="3.2" fill="#e6e6e6" text-anchor="middle" font-family="Liberation Sans,Noto Sans CJK SC,sans-serif" transform="rotate(-90 350.2 626.0)">2700</text>
<text x="350.2" y="645.7" font-size="3.2" fill="#e6e6e6" text-anchor="middle" font-family="Liberation Sans,Noto Sans CJK SC,sans-serif" transform="rotate(-90 350.2 645.7)">900</text>
<text x="350.2" y="666.7" font-size="3.2" fill="#e6e6e6" text-anchor="middle" font-family="Liberation Sans,Noto Sans CJK SC,sans-serif" transform="rotate(-90 350.2 666.7)">900</text>
<text x="350.2" y="680.5" font-size="3.2" fill="#e6e6e6" text-anchor="middle" font-family="Liberation Sans,Noto Sans CJK SC,sans-serif" transform="rotate(-90 350.2 680.5)">900</text>
<text x="350.2" y="694.5" font-size="3.2" fill="#e6e6e6" text-anchor="middle" font-family="Liberation Sans,Noto Sans CJK SC,sans-serif" transform="rotate(-90 350.2 694.5)">900</text>
<text x="350.2" y="716.5" font-size="3.2" fill="#e6e6e6" text-anchor="middle" font-family="Liberation Sans,Noto Sans CJK SC,sans-serif" transform="rotate(-90 350.2 716.5)">2700</text>
<text x="350.2" y="738.7" font-size="3.2" fill="#e6e6e6" text-anchor="middle" font-family="Liberation Sans,Noto Sans CJK SC,sans-serif" transform="rotate(-90 350.2 738.7)">900</text>
<text x="345.0" y="626.0" font-size="3.2" fill="#e6e6e6" text-anchor="middle" font-family="Liberation Sans,Noto Sans CJK SC,sans-serif" transform="rotate(-90 345.0 626.0)">10125</text>
<text x="377.9" y="630.5" font-size="3.0" fill="#ffffff" text-anchor="middle" font-family="Liberation Sans,Noto Sans CJK SC,sans-serif" font-weight="700" transform="rotate(-90 377.9 630.5)">DN50</text>
<text x="376.3" y="656.7" font-size="3.0" fill="#ffffff" text-anchor="middle" font-family="Liberation Sans,Noto Sans CJK SC,sans-serif" font-weight="700" transform="rotate(-90 376.3 656.7)">DN25</text>
<text x="377.9" y="719.7" font-size="3.0" fill="#ffffff" text-anchor="middle" font-family="Liberation Sans,Noto Sans CJK SC,sans-serif" font-weight="700" transform="rotate(-90 377.9 719.7)">DN50</text>
<text x="377.1" y="672.2" font-size="3.0" fill="#ffffff" text-anchor="middle" font-family="Liberation Sans,Noto Sans CJK SC,sans-serif" font-weight="700" transform="rotate(-90 377.1 672.2)">DN25</text>
<text x="376.3" y="693.0" font-size="3.0" fill="#ffffff" text-anchor="middle" font-family="Liberation Sans,Noto Sans CJK SC,sans-serif" font-weight="700" transform="rotate(-90 376.3 693.0)">DN32</text>
<text x="374.3" y="742.1" font-size="4.8" fill="#f0b070" text-anchor="middle" font-family="Liberation Sans,Noto Sans CJK SC,sans-serif" font-weight="700" textLength="4.3" lengthAdjust="spacingAndGlyphs">WL</text>
<text x="373.1" y="608.9" font-size="4.8" fill="#f0b070" text-anchor="middle" font-family="Liberation Sans,Noto Sans CJK SC,sans-serif" font-weight="700" textLength="4.3" lengthAdjust="spacingAndGlyphs">WL</text>
<text x="417.6" y="719.7" font-size="3.0" fill="#ffffff" text-anchor="middle" font-family="Liberation Sans,Noto Sans CJK SC,sans-serif" font-weight="700" transform="rotate(-90 417.6 719.7)">DN50</text>
<text x="416.8" y="672.2" font-size="3.0" fill="#ffffff" text-anchor="middle" font-family="Liberation Sans,Noto Sans CJK SC,sans-serif" font-weight="700" transform="rotate(-90 416.8 672.2)">DN25</text>
<text x="416.0" y="693.0" font-size="3.0" fill="#ffffff" text-anchor="middle" font-family="Liberation Sans,Noto Sans CJK SC,sans-serif" font-weight="700" transform="rotate(-90 416.0 693.0)">DN32</text>
<text x="414.0" y="742.1" font-size="4.8" fill="#f0b070" text-anchor="middle" font-family="Liberation Sans,Noto Sans CJK SC,sans-serif" font-weight="700" textLength="4.3" lengthAdjust="spacingAndGlyphs">WL</text>
<text x="457.4" y="630.5" font-size="3.0" fill="#ffffff" text-anchor="middle" font-family="Liberation Sans,Noto Sans CJK SC,sans-serif" font-weight="700" transform="rotate(-90 457.4 630.5)">DN50</text>
<text x="455.8" y="656.7" font-size="3.0" fill="#ffffff" text-anchor="middle" font-family="Liberation Sans,Noto Sans CJK SC,sans-serif" font-weight="700" transform="rotate(-90 455.8 656.7)">DN25</text>
<text x="457.4" y="719.7" font-size="3.0" fill="#ffffff" text-anchor="middle" font-family="Liberation Sans,Noto Sans CJK SC,sans-serif" font-weight="700" transform="rotate(-90 457.4 719.7)">DN50</text>
<text x="456.6" y="672.2" font-size="3.0" fill="#ffffff" text-anchor="middle" font-family="Liberation Sans,Noto Sans CJK SC,sans-serif" font-weight="700" transform="rotate(-90 456.6 672.2)">DN25</text>
<text x="455.8" y="693.0" font-size="3.0" fill="#ffffff" text-anchor="middle" font-family="Liberation Sans,Noto Sans CJK SC,sans-serif" font-weight="700" transform="rotate(-90 455.8 693.0)">DN32</text>
<text x="453.8" y="742.1" font-size="4.8" fill="#f0b070" text-anchor="middle" font-family="Liberation Sans,Noto Sans CJK SC,sans-serif" font-weight="700" textLength="4.3" lengthAdjust="spacingAndGlyphs">WL</text>
<text x="452.6" y="608.9" font-size="4.8" fill="#f0b070" text-anchor="middle" font-family="Liberation Sans,Noto Sans CJK SC,sans-serif" font-weight="700" textLength="4.3" lengthAdjust="spacingAndGlyphs">WL</text>
<text x="497.1" y="630.5" font-size="3.0" fill="#ffffff" text-anchor="middle" font-family="Liberation Sans,Noto Sans CJK SC,sans-serif" font-weight="700" transform="rotate(-90 497.1 630.5)">DN50</text>
<text x="495.5" y="656.7" font-size="3.0" fill="#ffffff" text-anchor="middle" font-family="Liberation Sans,Noto Sans CJK SC,sans-serif" font-weight="700" transform="rotate(-90 495.5 656.7)">DN25</text>
<text x="497.1" y="719.7" font-size="3.0" fill="#ffffff" text-anchor="middle" font-family="Liberation Sans,Noto Sans CJK SC,sans-serif" font-weight="700" transform="rotate(-90 497.1 719.7)">DN50</text>
<text x="496.3" y="672.2" font-size="3.0" fill="#ffffff" text-anchor="middle" font-family="Liberation Sans,Noto Sans CJK SC,sans-serif" font-weight="700" transform="rotate(-90 496.3 672.2)">DN25</text>
<text x="495.5" y="693.0" font-size="3.0" fill="#ffffff" text-anchor="middle" font-family="Liberation Sans,Noto Sans CJK SC,sans-serif" font-weight="700" transform="rotate(-90 495.5 693.0)">DN32</text>
<text x="493.5" y="742.1" font-size="4.8" fill="#f0b070" text-anchor="middle" font-family="Liberation Sans,Noto Sans CJK SC,sans-serif" font-weight="700" textLength="4.3" lengthAdjust="spacingAndGlyphs">WL</text>
<text x="492.3" y="608.9" font-size="4.8" fill="#f0b070" text-anchor="middle" font-family="Liberation Sans,Noto Sans CJK SC,sans-serif" font-weight="700" textLength="4.3" lengthAdjust="spacingAndGlyphs">WL</text>
<text x="536.8" y="630.5" font-size="3.0" fill="#ffffff" text-anchor="middle" font-family="Liberation Sans,Noto Sans CJK SC,sans-serif" font-weight="700" transform="rotate(-90 536.8 630.5)">DN50</text>
<text x="535.2" y="656.7" font-size="3.0" fill="#ffffff" text-anchor="middle" font-family="Liberation Sans,Noto Sans CJK SC,sans-serif" font-weight="700" transform="rotate(-90 535.2 656.7)">DN25</text>
<text x="536.8" y="719.7" font-size="3.0" fill="#ffffff" text-anchor="middle" font-family="Liberation Sans,Noto Sans CJK SC,sans-serif" font-weight="700" transform="rotate(-90 536.8 719.7)">DN50</text>
<text x="536.0" y="672.2" font-size="3.0" fill="#ffffff" text-anchor="middle" font-family="Liberation Sans,Noto Sans CJK SC,sans-serif" font-weight="700" transform="rotate(-90 536.0 672.2)">DN25</text>
<text x="535.2" y="693.0" font-size="3.0" fill="#ffffff" text-anchor="middle" font-family="Liberation Sans,Noto Sans CJK SC,sans-serif" font-weight="700" transform="rotate(-90 535.2 693.0)">DN32</text>
<text x="533.2" y="742.1" font-size="4.8" fill="#f0b070" text-anchor="middle" font-family="Liberation Sans,Noto Sans CJK SC,sans-serif" font-weight="700" textLength="4.3" lengthAdjust="spacingAndGlyphs">WL</text>
<text x="532.0" y="608.9" font-size="4.8" fill="#f0b070" text-anchor="middle" font-family="Liberation Sans,Noto Sans CJK SC,sans-serif" font-weight="700" textLength="4.3" lengthAdjust="spacingAndGlyphs">WL</text>
<text x="576.6" y="630.5" font-size="3.0" fill="#ffffff" text-anchor="middle" font-family="Liberation Sans,Noto Sans CJK SC,sans-serif" font-weight="700" transform="rotate(-90 576.6 630.5)">DN50</text>
<text x="575.0" y="656.7" font-size="3.0" fill="#ffffff" text-anchor="middle" font-family="Liberation Sans,Noto Sans CJK SC,sans-serif" font-weight="700" transform="rotate(-90 575.0 656.7)">DN25</text>
<text x="576.6" y="719.7" font-size="3.0" fill="#ffffff" text-anchor="middle" font-family="Liberation Sans,Noto Sans CJK SC,sans-serif" font-weight="700" transform="rotate(-90 576.6 719.7)">DN50</text>
<text x="575.8" y="672.2" font-size="3.0" fill="#ffffff" text-anchor="middle" font-family="Liberation Sans,Noto Sans CJK SC,sans-serif" font-weight="700" transform="rotate(-90 575.8 672.2)">DN25</text>
<text x="575.0" y="693.0" font-size="3.0" fill="#ffffff" text-anchor="middle" font-family="Liberation Sans,Noto Sans CJK SC,sans-serif" font-weight="700" transform="rotate(-90 575.0 693.0)">DN32</text>
<text x="573.0" y="742.1" font-size="4.8" fill="#f0b070" text-anchor="middle" font-family="Liberation Sans,Noto Sans CJK SC,sans-serif" font-weight="700" textLength="4.3" lengthAdjust="spacingAndGlyphs">WL</text>
<text x="571.8" y="608.9" font-size="4.8" fill="#f0b070" text-anchor="middle" font-family="Liberation Sans,Noto Sans CJK SC,sans-serif" font-weight="700" textLength="4.3" lengthAdjust="spacingAndGlyphs">WL</text>
<text x="616.3" y="630.5" font-size="3.0" fill="#ffffff" text-anchor="middle" font-family="Liberation Sans,Noto Sans CJK SC,sans-serif" font-weight="700" transform="rotate(-90 616.3 630.5)">DN50</text>
<text x="614.7" y="656.7" font-size="3.0" fill="#ffffff" text-anchor="middle" font-family="Liberation Sans,Noto Sans CJK SC,sans-serif" font-weight="700" transform="rotate(-90 614.7 656.7)">DN25</text>
<text x="616.3" y="719.7" font-size="3.0" fill="#ffffff" text-anchor="middle" font-family="Liberation Sans,Noto Sans CJK SC,sans-serif" font-weight="700" transform="rotate(-90 616.3 719.7)">DN50</text>
<text x="615.5" y="672.2" font-size="3.0" fill="#ffffff" text-anchor="middle" font-family="Liberation Sans,Noto Sans CJK SC,sans-serif" font-weight="700" transform="rotate(-90 615.5 672.2)">DN25</text>
<text x="614.7" y="693.0" font-size="3.0" fill="#ffffff" text-anchor="middle" font-family="Liberation Sans,Noto Sans CJK SC,sans-serif" font-weight="700" transform="rotate(-90 614.7 693.0)">DN32</text>
<text x="612.7" y="742.1" font-size="4.8" fill="#f0b070" text-anchor="middle" font-family="Liberation Sans,Noto Sans CJK SC,sans-serif" font-weight="700" textLength="4.3" lengthAdjust="spacingAndGlyphs">WL</text>
<text x="611.5" y="608.9" font-size="4.8" fill="#f0b070" text-anchor="middle" font-family="Liberation Sans,Noto Sans CJK SC,sans-serif" font-weight="700" textLength="4.3" lengthAdjust="spacingAndGlyphs">WL</text>
<text x="656.0" y="630.5" font-size="3.0" fill="#ffffff" text-anchor="middle" font-family="Liberation Sans,Noto Sans CJK SC,sans-serif" font-weight="700" transform="rotate(-90 656.0 630.5)">DN50</text>
<text x="654.4" y="656.7" font-size="3.0" fill="#ffffff" text-anchor="middle" font-family="Liberation Sans,Noto Sans CJK SC,sans-serif" font-weight="700" transform="rotate(-90 654.4 656.7)">DN25</text>
<text x="656.0" y="719.7" font-size="3.0" fill="#ffffff" text-anchor="middle" font-family="Liberation Sans,Noto Sans CJK SC,sans-serif" font-weight="700" transform="rotate(-90 656.0 719.7)">DN50</text>
<text x="655.2" y="672.2" font-size="3.0" fill="#ffffff" text-anchor="middle" font-family="Liberation Sans,Noto Sans CJK SC,sans-serif" font-weight="700" transform="rotate(-90 655.2 672.2)">DN25</text>
<text x="654.4" y="693.0" font-size="3.0" fill="#ffffff" text-anchor="middle" font-family="Liberation Sans,Noto Sans CJK SC,sans-serif" font-weight="700" transform="rotate(-90 654.4 693.0)">DN32</text>
<text x="652.4" y="742.1" font-size="4.8" fill="#f0b070" text-anchor="middle" font-family="Liberation Sans,Noto Sans CJK SC,sans-serif" font-weight="700" textLength="4.3" lengthAdjust="spacingAndGlyphs">WL</text>
<text x="651.2" y="608.9" font-size="4.8" fill="#f0b070" text-anchor="middle" font-family="Liberation Sans,Noto Sans CJK SC,sans-serif" font-weight="700" textLength="4.3" lengthAdjust="spacingAndGlyphs">WL</text>
<text x="695.8" y="630.5" font-size="3.0" fill="#ffffff" text-anchor="middle" font-family="Liberation Sans,Noto Sans CJK SC,sans-serif" font-weight="700" transform="rotate(-90 695.8 630.5)">DN50</text>
<text x="694.2" y="656.7" font-size="3.0" fill="#ffffff" text-anchor="middle" font-family="Liberation Sans,Noto Sans CJK SC,sans-serif" font-weight="700" transform="rotate(-90 694.2 656.7)">DN25</text>
<text x="695.8" y="719.7" font-size="3.0" fill="#ffffff" text-anchor="middle" font-family="Liberation Sans,Noto Sans CJK SC,sans-serif" font-weight="700" transform="rotate(-90 695.8 719.7)">DN50</text>
<text x="695.0" y="672.2" font-size="3.0" fill="#ffffff" text-anchor="middle" font-family="Liberation Sans,Noto Sans CJK SC,sans-serif" font-weight="700" transform="rotate(-90 695.0 672.2)">DN25</text>
<text x="694.2" y="693.0" font-size="3.0" fill="#ffffff" text-anchor="middle" font-family="Liberation Sans,Noto Sans CJK SC,sans-serif" font-weight="700" transform="rotate(-90 694.2 693.0)">DN32</text>
<text x="692.2" y="742.1" font-size="4.8" fill="#f0b070" text-anchor="middle" font-family="Liberation Sans,Noto Sans CJK SC,sans-serif" font-weight="700" textLength="4.3" lengthAdjust="spacingAndGlyphs">WL</text>
<text x="691.0" y="608.9" font-size="4.8" fill="#f0b070" text-anchor="middle" font-family="Liberation Sans,Noto Sans CJK SC,sans-serif" font-weight="700" textLength="4.3" lengthAdjust="spacingAndGlyphs">WL</text>
<text x="735.5" y="630.5" font-size="3.0" fill="#ffffff" text-anchor="middle" font-family="Liberation Sans,Noto Sans CJK SC,sans-serif" font-weight="700" transform="rotate(-90 735.5 630.5)">DN50</text>
<text x="733.9" y="656.7" font-size="3.0" fill="#ffffff" text-anchor="middle" font-family="Liberation Sans,Noto Sans CJK SC,sans-serif" font-weight="700" transform="rotate(-90 733.9 656.7)">DN25</text>
<text x="735.5" y="719.7" font-size="3.0" fill="#ffffff" text-anchor="middle" font-family="Liberation Sans,Noto Sans CJK SC,sans-serif" font-weight="700" transform="rotate(-90 735.5 719.7)">DN50</text>
<text x="734.7" y="672.2" font-size="3.0" fill="#ffffff" text-anchor="middle" font-family="Liberation Sans,Noto Sans CJK SC,sans-serif" font-weight="700" transform="rotate(-90 734.7 672.2)">DN25</text>
<text x="733.9" y="693.0" font-size="3.0" fill="#ffffff" text-anchor="middle" font-family="Liberation Sans,Noto Sans CJK SC,sans-serif" font-weight="700" transform="rotate(-90 733.9 693.0)">DN32</text>
<text x="731.9" y="742.1" font-size="4.8" fill="#f0b070" text-anchor="middle" font-family="Liberation Sans,Noto Sans CJK SC,sans-serif" font-weight="700" textLength="4.3" lengthAdjust="spacingAndGlyphs">WL</text>
<text x="730.7" y="608.9" font-size="4.8" fill="#f0b070" text-anchor="middle" font-family="Liberation Sans,Noto Sans CJK SC,sans-serif" font-weight="700" textLength="4.3" lengthAdjust="spacingAndGlyphs">WL</text>
<text x="775.3" y="630.5" font-size="3.0" fill="#ffffff" text-anchor="middle" font-family="Liberation Sans,Noto Sans CJK SC,sans-serif" font-weight="700" transform="rotate(-90 775.3 630.5)">DN50</text>
<text x="773.7" y="656.7" font-size="3.0" fill="#ffffff" text-anchor="middle" font-family="Liberation Sans,Noto Sans CJK SC,sans-serif" font-weight="700" transform="rotate(-90 773.7 656.7)">DN25</text>
<text x="775.3" y="719.7" font-size="3.0" fill="#ffffff" text-anchor="middle" font-family="Liberation Sans,Noto Sans CJK SC,sans-serif" font-weight="700" transform="rotate(-90 775.3 719.7)">DN50</text>
<text x="774.5" y="672.2" font-size="3.0" fill="#ffffff" text-anchor="middle" font-family="Liberation Sans,Noto Sans CJK SC,sans-serif" font-weight="700" transform="rotate(-90 774.5 672.2)">DN25</text>
<text x="773.7" y="693.0" font-size="3.0" fill="#ffffff" text-anchor="middle" font-family="Liberation Sans,Noto Sans CJK SC,sans-serif" font-weight="700" transform="rotate(-90 773.7 693.0)">DN32</text>
<text x="771.7" y="742.1" font-size="4.8" fill="#f0b070" text-anchor="middle" font-family="Liberation Sans,Noto Sans CJK SC,sans-serif" font-weight="700" textLength="4.3" lengthAdjust="spacingAndGlyphs">WL</text>
<text x="770.5" y="608.9" font-size="4.8" fill="#f0b070" text-anchor="middle" font-family="Liberation Sans,Noto Sans CJK SC,sans-serif" font-weight="700" textLength="4.3" lengthAdjust="spacingAndGlyphs">WL</text>
<text x="815.0" y="719.7" font-size="3.0" fill="#ffffff" text-anchor="middle" font-family="Liberation Sans,Noto Sans CJK SC,sans-serif" font-weight="700" transform="rotate(-90 815.0 719.7)">DN50</text>
<text x="814.2" y="672.2" font-size="3.0" fill="#ffffff" text-anchor="middle" font-family="Liberation Sans,Noto Sans CJK SC,sans-serif" font-weight="700" transform="rotate(-90 814.2 672.2)">DN25</text>
<text x="813.4" y="693.0" font-size="3.0" fill="#ffffff" text-anchor="middle" font-family="Liberation Sans,Noto Sans CJK SC,sans-serif" font-weight="700" transform="rotate(-90 813.4 693.0)">DN32</text>
<text x="811.4" y="742.1" font-size="4.8" fill="#f0b070" text-anchor="middle" font-family="Liberation Sans,Noto Sans CJK SC,sans-serif" font-weight="700" textLength="4.3" lengthAdjust="spacingAndGlyphs">WL</text>
<text x="854.8" y="630.5" font-size="3.0" fill="#ffffff" text-anchor="middle" font-family="Liberation Sans,Noto Sans CJK SC,sans-serif" font-weight="700" transform="rotate(-90 854.8 630.5)">DN50</text>
<text x="853.1" y="656.7" font-size="3.0" fill="#ffffff" text-anchor="middle" font-family="Liberation Sans,Noto Sans CJK SC,sans-serif" font-weight="700" transform="rotate(-90 853.1 656.7)">DN25</text>
<text x="854.8" y="719.7" font-size="3.0" fill="#ffffff" text-anchor="middle" font-family="Liberation Sans,Noto Sans CJK SC,sans-serif" font-weight="700" transform="rotate(-90 854.8 719.7)">DN50</text>
<text x="854.0" y="672.2" font-size="3.0" fill="#ffffff" text-anchor="middle" font-family="Liberation Sans,Noto Sans CJK SC,sans-serif" font-weight="700" transform="rotate(-90 854.0 672.2)">DN25</text>
<text x="853.1" y="693.0" font-size="3.0" fill="#ffffff" text-anchor="middle" font-family="Liberation Sans,Noto Sans CJK SC,sans-serif" font-weight="700" transform="rotate(-90 853.1 693.0)">DN32</text>
<text x="851.1" y="742.1" font-size="4.8" fill="#f0b070" text-anchor="middle" font-family="Liberation Sans,Noto Sans CJK SC,sans-serif" font-weight="700" textLength="4.3" lengthAdjust="spacingAndGlyphs">WL</text>
<text x="397.8" y="664.5" font-size="3.0" fill="#f0f0f0" text-anchor="middle" font-family="Liberation Sans,Noto Sans CJK SC,sans-serif" font-weight="700">DN100</text>
<text x="437.6" y="664.5" font-size="3.0" fill="#f0f0f0" text-anchor="middle" font-family="Liberation Sans,Noto Sans CJK SC,sans-serif" font-weight="700">DN100</text>
<text x="477.3" y="664.5" font-size="3.0" fill="#f0f0f0" text-anchor="middle" font-family="Liberation Sans,Noto Sans CJK SC,sans-serif" font-weight="700">DN100</text>
<text x="517.1" y="664.5" font-size="3.0" fill="#f0f0f0" text-anchor="middle" font-family="Liberation Sans,Noto Sans CJK SC,sans-serif" font-weight="700">DN100</text>
<text x="556.8" y="664.5" font-size="3.0" fill="#f0f0f0" text-anchor="middle" font-family="Liberation Sans,Noto Sans CJK SC,sans-serif" font-weight="700">DN100</text>
<text x="596.5" y="664.5" font-size="3.0" fill="#f0f0f0" text-anchor="middle" font-family="Liberation Sans,Noto Sans CJK SC,sans-serif" font-weight="700">DN50</text>
<text x="636.3" y="664.5" font-size="3.0" fill="#f0f0f0" text-anchor="middle" font-family="Liberation Sans,Noto Sans CJK SC,sans-serif" font-weight="700">DN50</text>
<text x="676.0" y="664.5" font-size="3.0" fill="#f0f0f0" text-anchor="middle" font-family="Liberation Sans,Noto Sans CJK SC,sans-serif" font-weight="700">DN50</text>
<text x="715.8" y="664.5" font-size="3.0" fill="#f0f0f0" text-anchor="middle" font-family="Liberation Sans,Noto Sans CJK SC,sans-serif" font-weight="700">DN50</text>
<text x="755.5" y="664.5" font-size="3.0" fill="#f0f0f0" text-anchor="middle" font-family="Liberation Sans,Noto Sans CJK SC,sans-serif" font-weight="700">DN50</text>
<text x="795.2" y="664.5" font-size="3.0" fill="#f0f0f0" text-anchor="middle" font-family="Liberation Sans,Noto Sans CJK SC,sans-serif" font-weight="700">DN50</text>
<text x="363.0" y="648.2" font-size="3.4" fill="#e6e6e6" text-anchor="middle" font-family="Liberation Sans,Noto Sans CJK SC,sans-serif">JL-1</text>
<text x="366.0" y="669.3" font-size="3.2" fill="#e6e6e6" text-anchor="middle" font-family="Liberation Sans,Noto Sans CJK SC,sans-serif">DN100</text>
<text x="383.5" y="669.3" font-size="3.2" fill="#e6e6e6" text-anchor="middle" font-family="Liberation Sans,Noto Sans CJK SC,sans-serif">DN100</text>
<text x="384.0" y="661.3" font-size="3.2" fill="#e6e6e6" text-anchor="middle" font-family="Liberation Sans,Noto Sans CJK SC,sans-serif" transform="rotate(20 384.0 661.3)">-1.00</text>
<text x="369.9" y="587.9" font-size="4.5" fill="#f0b070" text-anchor="middle" font-family="Liberation Sans,Noto Sans CJK SC,sans-serif" font-weight="700">卫1</text>
<text x="449.4" y="587.9" font-size="4.5" fill="#f0b070" text-anchor="middle" font-family="Liberation Sans,Noto Sans CJK SC,sans-serif" font-weight="700">卫1</text>
<text x="502.3" y="587.9" font-size="4.5" fill="#f0b070" text-anchor="middle" font-family="Liberation Sans,Noto Sans CJK SC,sans-serif" font-weight="700">卫1</text>
<text x="528.9" y="587.9" font-size="4.5" fill="#f0b070" text-anchor="middle" font-family="Liberation Sans,Noto Sans CJK SC,sans-serif" font-weight="700">卫1</text>
<text x="581.7" y="587.9" font-size="4.5" fill="#f0b070" text-anchor="middle" font-family="Liberation Sans,Noto Sans CJK SC,sans-serif" font-weight="700">卫1</text>
<text x="608.3" y="587.9" font-size="4.5" fill="#f0b070" text-anchor="middle" font-family="Liberation Sans,Noto Sans CJK SC,sans-serif" font-weight="700">卫1</text>
<text x="687.8" y="587.9" font-size="4.5" fill="#f0b070" text-anchor="middle" font-family="Liberation Sans,Noto Sans CJK SC,sans-serif" font-weight="700">卫1</text>
<text x="740.7" y="587.9" font-size="4.5" fill="#f0b070" text-anchor="middle" font-family="Liberation Sans,Noto Sans CJK SC,sans-serif" font-weight="700">卫1</text>
<text x="767.3" y="587.9" font-size="4.5" fill="#f0b070" text-anchor="middle" font-family="Liberation Sans,Noto Sans CJK SC,sans-serif" font-weight="700">卫1</text>
<text x="859.5" y="592.0" font-size="4.2" fill="#f0a860" text-anchor="middle" font-family="Liberation Sans,Noto Sans CJK SC,sans-serif" font-weight="700">WL</text>
<text x="369.9" y="761.6" font-size="4.5" fill="#f0b070" text-anchor="middle" font-family="Liberation Sans,Noto Sans CJK SC,sans-serif" font-weight="700">卫1</text>
<text x="422.8" y="761.6" font-size="4.5" fill="#f0b070" text-anchor="middle" font-family="Liberation Sans,Noto Sans CJK SC,sans-serif" font-weight="700">卫1</text>
<text x="449.4" y="761.6" font-size="4.5" fill="#f0b070" text-anchor="middle" font-family="Liberation Sans,Noto Sans CJK SC,sans-serif" font-weight="700">卫1</text>
<text x="502.3" y="761.6" font-size="4.5" fill="#f0b070" text-anchor="middle" font-family="Liberation Sans,Noto Sans CJK SC,sans-serif" font-weight="700">卫1</text>
<text x="528.9" y="761.6" font-size="4.5" fill="#f0b070" text-anchor="middle" font-family="Liberation Sans,Noto Sans CJK SC,sans-serif" font-weight="700">卫1</text>
<text x="581.7" y="761.6" font-size="4.5" fill="#f0b070" text-anchor="middle" font-family="Liberation Sans,Noto Sans CJK SC,sans-serif" font-weight="700">卫1</text>
<text x="608.3" y="761.6" font-size="4.5" fill="#f0b070" text-anchor="middle" font-family="Liberation Sans,Noto Sans CJK SC,sans-serif" font-weight="700">卫1</text>
<text x="661.2" y="761.6" font-size="4.5" fill="#f0b070" text-anchor="middle" font-family="Liberation Sans,Noto Sans CJK SC,sans-serif" font-weight="700">卫1</text>
<text x="687.8" y="761.6" font-size="4.5" fill="#f0b070" text-anchor="middle" font-family="Liberation Sans,Noto Sans CJK SC,sans-serif" font-weight="700">卫1</text>
<text x="740.7" y="761.6" font-size="4.5" fill="#f0b070" text-anchor="middle" font-family="Liberation Sans,Noto Sans CJK SC,sans-serif" font-weight="700">卫1</text>
<text x="767.3" y="761.6" font-size="4.5" fill="#f0b070" text-anchor="middle" font-family="Liberation Sans,Noto Sans CJK SC,sans-serif" font-weight="700">卫1</text>
<text x="820.2" y="761.6" font-size="4.5" fill="#f0b070" text-anchor="middle" font-family="Liberation Sans,Noto Sans CJK SC,sans-serif" font-weight="700">卫1</text>
<text x="846.8" y="761.6" font-size="4.5" fill="#f0b070" text-anchor="middle" font-family="Liberation Sans,Noto Sans CJK SC,sans-serif" font-weight="700">卫1</text>
<text x="662.3" y="603.0" font-size="3.6" fill="#f0a860" text-anchor="middle" font-family="Liberation Sans,Noto Sans CJK SC,sans-serif" font-weight="700" textLength="6.8" lengthAdjust="spacingAndGlyphs">卫生间</text>
<text x="648.3" y="644.5" font-size="3.6" fill="#f0a860" text-anchor="middle" font-family="Liberation Sans,Noto Sans CJK SC,sans-serif" font-weight="700" textLength="6.8" lengthAdjust="spacingAndGlyphs">洗衣房</text>
<text x="407.5" y="646.0" font-size="3.2" fill="#f0a860" text-anchor="middle" font-family="Liberation Sans,Noto Sans CJK SC,sans-serif">上</text>
<text x="426.5" y="646.0" font-size="3.2" fill="#f0a860" text-anchor="middle" font-family="Liberation Sans,Noto Sans CJK SC,sans-serif">下</text>
<text x="806.0" y="646.0" font-size="3.2" fill="#f0a860" text-anchor="middle" font-family="Liberation Sans,Noto Sans CJK SC,sans-serif">上</text>
<text x="826.0" y="646.0" font-size="3.2" fill="#f0a860" text-anchor="middle" font-family="Liberation Sans,Noto Sans CJK SC,sans-serif">下</text>
<text x="843.0" y="642.5" font-size="3.6" fill="#f0a860" text-anchor="middle" font-family="Liberation Sans,Noto Sans CJK SC,sans-serif" font-weight="700" textLength="6.8" lengthAdjust="spacingAndGlyphs">配电间</text>
<text x="889.5" y="613.0" font-size="3.4" fill="#e6e6e6" text-anchor="middle" font-family="Liberation Sans,Noto Sans CJK SC,sans-serif" font-weight="700">末端试水装置</text>
<text x="890.0" y="619.5" font-size="3.4" fill="#e6e6e6" text-anchor="middle" font-family="Liberation Sans,Noto Sans CJK SC,sans-serif" font-weight="700">距地1.5m</text>
<text x="883.0" y="645.0" font-size="3.4" fill="#f0a860" text-anchor="middle" font-family="Liberation Sans,Noto Sans CJK SC,sans-serif" font-weight="700">消防电梯</text>
<text x="859.5" y="604.5" font-size="3.2" fill="#e6e6e6" text-anchor="middle" font-family="Liberation Sans,Noto Sans CJK SC,sans-serif" transform="rotate(30 859.5 604.5)">DN25</text>
<text x="803.7" y="661.0" font-size="3.0" fill="#e6e6e6" text-anchor="middle" font-family="Liberation Sans,Noto Sans CJK SC,sans-serif">-1.00</text>
<text x="366.5" y="558.9" font-size="3.1" fill="#f4f4f4" text-anchor="middle" font-family="Liberation Sans,Noto Sans CJK SC,sans-serif" font-weight="700">1800</text>
<text x="386.4" y="558.9" font-size="3.1" fill="#f4f4f4" text-anchor="middle" font-family="Liberation Sans,Noto Sans CJK SC,sans-serif" font-weight="700">1800</text>
<text x="406.3" y="558.9" font-size="3.1" fill="#f4f4f4" text-anchor="middle" font-family="Liberation Sans,Noto Sans CJK SC,sans-serif" font-weight="700">1800</text>
<text x="426.1" y="558.9" font-size="3.1" fill="#f4f4f4" text-anchor="middle" font-family="Liberation Sans,Noto Sans CJK SC,sans-serif" font-weight="700">1800</text>
<text x="446.0" y="558.9" font-size="3.1" fill="#f4f4f4" text-anchor="middle" font-family="Liberation Sans,Noto Sans CJK SC,sans-serif" font-weight="700">1800</text>
<text x="465.9" y="558.9" font-size="3.1" fill="#f4f4f4" text-anchor="middle" font-family="Liberation Sans,Noto Sans CJK SC,sans-serif" font-weight="700">1800</text>
<text x="485.8" y="558.9" font-size="3.1" fill="#f4f4f4" text-anchor="middle" font-family="Liberation Sans,Noto Sans CJK SC,sans-serif" font-weight="700">1800</text>
<text x="505.6" y="558.9" font-size="3.1" fill="#f4f4f4" text-anchor="middle" font-family="Liberation Sans,Noto Sans CJK SC,sans-serif" font-weight="700">1800</text>
<text x="525.5" y="558.9" font-size="3.1" fill="#f4f4f4" text-anchor="middle" font-family="Liberation Sans,Noto Sans CJK SC,sans-serif" font-weight="700">1800</text>
<text x="545.4" y="558.9" font-size="3.1" fill="#f4f4f4" text-anchor="middle" font-family="Liberation Sans,Noto Sans CJK SC,sans-serif" font-weight="700">1800</text>
<text x="565.2" y="558.9" font-size="3.1" fill="#f4f4f4" text-anchor="middle" font-family="Liberation Sans,Noto Sans CJK SC,sans-serif" font-weight="700">1800</text>
<text x="585.1" y="558.9" font-size="3.1" fill="#f4f4f4" text-anchor="middle" font-family="Liberation Sans,Noto Sans CJK SC,sans-serif" font-weight="700">1800</text>
<text x="605.0" y="558.9" font-size="3.1" fill="#f4f4f4" text-anchor="middle" font-family="Liberation Sans,Noto Sans CJK SC,sans-serif" font-weight="700">1800</text>
<text x="624.8" y="558.9" font-size="3.1" fill="#f4f4f4" text-anchor="middle" font-family="Liberation Sans,Noto Sans CJK SC,sans-serif" font-weight="700">1800</text>
<text x="644.7" y="558.9" font-size="3.1" fill="#f4f4f4" text-anchor="middle" font-family="Liberation Sans,Noto Sans CJK SC,sans-serif" font-weight="700">1800</text>
<text x="664.6" y="558.9" font-size="3.1" fill="#f4f4f4" text-anchor="middle" font-family="Liberation Sans,Noto Sans CJK SC,sans-serif" font-weight="700">1800</text>
<text x="684.5" y="558.9" font-size="3.1" fill="#f4f4f4" text-anchor="middle" font-family="Liberation Sans,Noto Sans CJK SC,sans-serif" font-weight="700">1800</text>
<text x="704.3" y="558.9" font-size="3.1" fill="#f4f4f4" text-anchor="middle" font-family="Liberation Sans,Noto Sans CJK SC,sans-serif" font-weight="700">1800</text>
<text x="724.2" y="558.9" font-size="3.1" fill="#f4f4f4" text-anchor="middle" font-family="Liberation Sans,Noto Sans CJK SC,sans-serif" font-weight="700">1800</text>
<text x="744.1" y="558.9" font-size="3.1" fill="#f4f4f4" text-anchor="middle" font-family="Liberation Sans,Noto Sans CJK SC,sans-serif" font-weight="700">1800</text>
<text x="763.9" y="558.9" font-size="3.1" fill="#f4f4f4" text-anchor="middle" font-family="Liberation Sans,Noto Sans CJK SC,sans-serif" font-weight="700">1800</text>
<text x="783.8" y="558.9" font-size="3.1" fill="#f4f4f4" text-anchor="middle" font-family="Liberation Sans,Noto Sans CJK SC,sans-serif" font-weight="700">1800</text>
<text x="803.7" y="558.9" font-size="3.1" fill="#f4f4f4" text-anchor="middle" font-family="Liberation Sans,Noto Sans CJK SC,sans-serif" font-weight="700">1800</text>
<text x="823.5" y="558.9" font-size="3.1" fill="#f4f4f4" text-anchor="middle" font-family="Liberation Sans,Noto Sans CJK SC,sans-serif" font-weight="700">1800</text>
<text x="843.4" y="558.9" font-size="3.1" fill="#f4f4f4" text-anchor="middle" font-family="Liberation Sans,Noto Sans CJK SC,sans-serif" font-weight="700">1800</text>
<text x="863.3" y="558.9" font-size="3.1" fill="#f4f4f4" text-anchor="middle" font-family="Liberation Sans,Noto Sans CJK SC,sans-serif" font-weight="700">1800</text>
<text x="356.6" y="510.4" font-size="6.6" fill="#c8c8c8" text-anchor="middle" font-family="Liberation Sans,Noto Sans CJK SC,sans-serif" textLength="3.2" lengthAdjust="spacingAndGlyphs">1</text>
<text x="376.5" y="524.1" font-size="3.1" fill="#f4f4f4" text-anchor="middle" font-family="Liberation Sans,Noto Sans CJK SC,sans-serif" font-weight="700">3600</text>
<text x="396.3" y="510.4" font-size="6.6" fill="#c8c8c8" text-anchor="middle" font-family="Liberation Sans,Noto Sans CJK SC,sans-serif" textLength="3.2" lengthAdjust="spacingAndGlyphs">2</text>
<text x="416.2" y="524.1" font-size="3.1" fill="#f4f4f4" text-anchor="middle" font-family="Liberation Sans,Noto Sans CJK SC,sans-serif" font-weight="700">3600</text>
<text x="436.1" y="510.4" font-size="6.6" fill="#c8c8c8" text-anchor="middle" font-family="Liberation Sans,Noto Sans CJK SC,sans-serif" textLength="3.2" lengthAdjust="spacingAndGlyphs">3</text>
<text x="456.0" y="524.1" font-size="3.1" fill="#f4f4f4" text-anchor="middle" font-family="Liberation Sans,Noto Sans CJK SC,sans-serif" font-weight="700">3600</text>
<text x="475.8" y="510.4" font-size="6.6" fill="#c8c8c8" text-anchor="middle" font-family="Liberation Sans,Noto Sans CJK SC,sans-serif" textLength="3.2" lengthAdjust="spacingAndGlyphs">4</text>
<text x="495.7" y="524.1" font-size="3.1" fill="#f4f4f4" text-anchor="middle" font-family="Liberation Sans,Noto Sans CJK SC,sans-serif" font-weight="700">3600</text>
<text x="515.6" y="510.4" font-size="6.6" fill="#c8c8c8" text-anchor="middle" font-family="Liberation Sans,Noto Sans CJK SC,sans-serif" textLength="3.2" lengthAdjust="spacingAndGlyphs">5</text>
<text x="535.4" y="524.1" font-size="3.1" fill="#f4f4f4" text-anchor="middle" font-family="Liberation Sans,Noto Sans CJK SC,sans-serif" font-weight="700">3600</text>
<text x="555.3" y="510.4" font-size="6.6" fill="#c8c8c8" text-anchor="middle" font-family="Liberation Sans,Noto Sans CJK SC,sans-serif" textLength="3.2" lengthAdjust="spacingAndGlyphs">6</text>
<text x="575.2" y="524.1" font-size="3.1" fill="#f4f4f4" text-anchor="middle" font-family="Liberation Sans,Noto Sans CJK SC,sans-serif" font-weight="700">3600</text>
<text x="595.0" y="510.4" font-size="6.6" fill="#c8c8c8" text-anchor="middle" font-family="Liberation Sans,Noto Sans CJK SC,sans-serif" textLength="3.2" lengthAdjust="spacingAndGlyphs">7</text>
<text x="614.9" y="524.1" font-size="3.1" fill="#f4f4f4" text-anchor="middle" font-family="Liberation Sans,Noto Sans CJK SC,sans-serif" font-weight="700">3600</text>
<text x="634.8" y="510.4" font-size="6.6" fill="#c8c8c8" text-anchor="middle" font-family="Liberation Sans,Noto Sans CJK SC,sans-serif" textLength="3.2" lengthAdjust="spacingAndGlyphs">8</text>
<text x="654.6" y="524.1" font-size="3.1" fill="#f4f4f4" text-anchor="middle" font-family="Liberation Sans,Noto Sans CJK SC,sans-serif" font-weight="700">3600</text>
<text x="674.5" y="510.4" font-size="6.6" fill="#c8c8c8" text-anchor="middle" font-family="Liberation Sans,Noto Sans CJK SC,sans-serif" textLength="3.2" lengthAdjust="spacingAndGlyphs">9</text>
<text x="694.4" y="524.1" font-size="3.1" fill="#f4f4f4" text-anchor="middle" font-family="Liberation Sans,Noto Sans CJK SC,sans-serif" font-weight="700">3600</text>
<text x="714.3" y="510.4" font-size="6.6" fill="#c8c8c8" text-anchor="middle" font-family="Liberation Sans,Noto Sans CJK SC,sans-serif" textLength="4.6" lengthAdjust="spacingAndGlyphs">10</text>
<text x="734.1" y="524.1" font-size="3.1" fill="#f4f4f4" text-anchor="middle" font-family="Liberation Sans,Noto Sans CJK SC,sans-serif" font-weight="700">3600</text>
<text x="754.0" y="510.4" font-size="6.6" fill="#c8c8c8" text-anchor="middle" font-family="Liberation Sans,Noto Sans CJK SC,sans-serif" textLength="4.6" lengthAdjust="spacingAndGlyphs">11</text>
<text x="773.9" y="524.1" font-size="3.1" fill="#f4f4f4" text-anchor="middle" font-family="Liberation Sans,Noto Sans CJK SC,sans-serif" font-weight="700">3600</text>
<text x="793.7" y="510.4" font-size="6.6" fill="#c8c8c8" text-anchor="middle" font-family="Liberation Sans,Noto Sans CJK SC,sans-serif" textLength="4.6" lengthAdjust="spacingAndGlyphs">12</text>
<text x="813.6" y="524.1" font-size="3.1" fill="#f4f4f4" text-anchor="middle" font-family="Liberation Sans,Noto Sans CJK SC,sans-serif" font-weight="700">3600</text>
<text x="833.5" y="510.4" font-size="6.6" fill="#c8c8c8" text-anchor="middle" font-family="Liberation Sans,Noto Sans CJK SC,sans-serif" textLength="4.6" lengthAdjust="spacingAndGlyphs">13</text>
<text x="853.4" y="524.1" font-size="3.1" fill="#f4f4f4" text-anchor="middle" font-family="Liberation Sans,Noto Sans CJK SC,sans-serif" font-weight="700">3600</text>
<text x="873.2" y="510.4" font-size="6.6" fill="#c8c8c8" text-anchor="middle" font-family="Liberation Sans,Noto Sans CJK SC,sans-serif" textLength="4.6" lengthAdjust="spacingAndGlyphs">14</text>
<text x="614.9" y="516.4" font-size="3.4" fill="#e6e6e6" text-anchor="middle" font-family="Liberation Sans,Noto Sans CJK SC,sans-serif">46800</text></svg></div>
<div id="title" class="abs"><svg class="abs" style="left:1.300px;top:2.800px" width="11" height="10.800" viewBox="0 0 11 10.800"><rect width="11" height="10.800" rx=".800" fill="#1c4a8c"/><rect x=".600" y=".900" width="9.800" height="9" fill="#1e74d8"/><path d="M2.300 3.300v4.200M2.300 3.300l1.500 2.100-1.500 2.100M4.800 3v4.800M6.200 3.300v4.200M6.200 3.300h1M8.600 3.300v4.200M7.900 3.300h1.400M7.900 7.500h1.400" stroke="#e6effb" stroke-width=".800" fill="none"/></svg><div class="t">CAD快速看图 - C:\Users\ruohan\Desktop\CAD快速看图文章\专用宿舍楼给排水.dwg</div><svg class="abs" style="left:1176px;top:2px" width="84" height="13" viewBox="0 0 84 13" fill="none" stroke="#222" stroke-width=".900"><path d="M2.500 6.500h8"/><rect x="37.500" y="4.200" width="5.600" height="5.600" rx="1.200"/><path d="M39.300 4.200v-.500q0-1 1-1h3.600q1 0 1 1v3.600q0 1-1 1h-.600"/><path d="M71.200 3l7 7M78.200 3l-7 7"/></svg></div>
<div id="tool" class="abs"><div class="ti" style="left:16.6px"><svg width="14" height="10" viewBox="0 0 14 10" fill="none" stroke-linecap="round" stroke-linejoin="round"><path d="M0.5 9.5V1.2q0-.7.7-.7h3.2l1.2 1.3h4.6q.7 0 .7.7v1H3.4q-.7 0-1 .7z" fill="#2aa7e6" stroke="none"/><path d="M3.3 4.3h10.2l-2.4 5.4H0.8z" fill="#2aa7e6" stroke="none"/></svg><span>打开</span></div><div class="ti" style="left:56.7px"><svg width="14" height="13" viewBox="0 0 14 13" fill="none" stroke-linecap="round" stroke-linejoin="round"><path d="M2.300 6.500a5.200 5.200 0 1 0 1.500-3.600" stroke="#2aa7e6" stroke-width="1.300"/><path d="M0.500 5.300l1.900 2.100 1.900-2.100z" fill="#2aa7e6" stroke="none"/><path d="M7.500 3.800v3.100h2.500" stroke="#2aa7e6" stroke-width="1.300"/></svg><span>最近打开</span></div><div class="ti" style="left:105.9px"><svg width="16" height="12" viewBox="0 0 16 12" fill="none" stroke-linecap="round" stroke-linejoin="round"><path d="M4.3 10.8H3.6a3 3 0 0 1-.4-6 4.3 4.3 0 0 1 8.3-.6 3.4 3.4 0 0 1 .7 6.6h-.6" stroke="#2aa7e6" stroke-width="1.2"/><path d="M5.6 11.2V8.3q0-.5.5-.5h3.8q.5 0 .5.5v2.9z" stroke="#2aa7e6" stroke-width="1"/></svg><span>快看云盘</span></div><div class="ti" style="left:145.9px"><svg width="11" height="11" viewBox="0 0 11 11" fill="none" stroke-linecap="round" stroke-linejoin="round"><rect x="2.800" y="2.800" width="5.400" height="5.400" fill="#2aa7e6" stroke="none"/><path d="M.800 3V.800H3M8 .800h2.200V3M10.200 8v2.200H8M3 10.200H.800V8" stroke="#2aa7e6" stroke-width="1.400"/></svg><span>窗口</span></div><div class="ti" style="left:186.0px"><svg width="12" height="12" viewBox="0 0 12 12" fill="none" stroke-linecap="round" stroke-linejoin="round"><path d="M6 .6l5 2.6-5 2.6-5-2.6z" fill="#2aa7e6" stroke="none"/><path d="M1.3 5.6l4.7 2.4 4.7-2.4M1.3 8.2l4.7 2.4 4.7-2.4" stroke="#2aa7e6" stroke-width="1.3"/></svg><span>图层管理</span></div><div class="sep" style="left:212.5px"></div><div class="ti" style="left:230.5px"><svg width="13" height="11" viewBox="0 0 13 11" fill="none" stroke-linecap="round" stroke-linejoin="round"><path d="M5 .8L.9 4.2 5 7.6V5.5c3.5-.2 5.5 1.2 6.6 4.3C11.700 5.6 9.300 3 5 2.900z" stroke="#2aa7e6" stroke-width="1.1"/></svg><span>撤销</span></div><div class="ti" style="left:261.6px"><svg width="13" height="11" viewBox="0 0 13 11" fill="none" stroke-linecap="round" stroke-linejoin="round"><path d="M8 .8l4.100 3.400L8 7.600V5.500C4.500 5.300 2.500 6.700 1.400 9.800 1.300 5.600 3.700 3 8 2.900z" stroke="#b9b9b9" stroke-width="1.1"/></svg><span style="color:#b3b3b3">恢复</span></div><div class="ti" style="left:294.0px"><svg style="margin-top:1.0px" width="19" height="19" viewBox="0 0 19 19" fill="none" stroke-linecap="round" stroke-linejoin="round"><circle cx="9.500" cy="9.500" r="8.600" stroke="#c9963a" stroke-width="1.500" fill="#f7edd8"/><circle cx="9.500" cy="9.500" r="7.200" stroke="#e4c078" stroke-width=".600"/><path d="M2.200 7c3.500-2.800 11-2.800 14.600 0" stroke="#d2a655" stroke-width=".700"/><text x="9.500" y="12.400" font-family="Liberation Serif,serif" font-weight="700" font-size="8.200" text-anchor="middle" fill="#b27a1c" stroke="none" textLength="13.500" lengthAdjust="spacingAndGlyphs">VIP</text></svg><span style="color:#c8a45a;top:23px">会员</span></div><div class="abs" style="left:311px;top:2.500px;width:31px;height:33px;border:1px solid #a6cdf3;background:#e3effb;border-radius:1px"></div><div class="ti" style="left:326.2px"><svg style="margin-top:1.3px" width="15" height="12" viewBox="0 0 15 12" fill="none" stroke-linecap="round" stroke-linejoin="round"><path d="M.500.300v4.400M14.500.300v4.400M1.500 2.500h12" stroke="#2aa7e6" stroke-width=".800"/><path d="M.900 2.500l2.300-1.300v2.600zM14.100 2.500l-2.300-1.300v2.600z" fill="#2aa7e6" stroke="none"/><rect x=".600" y="7" width="13.800" height="4.400" stroke="#2aa7e6" stroke-width="1"/><path d="M2.500 8.500l1.500 1.500M4.500 8.500L6 10M6.500 8.500L8 10M8.500 8.500l1.500 1.500M10.500 8.500l1.500 1.500" stroke="#2aa7e6" stroke-width=".700"/></svg><span>测量</span></div><div class="ti" style="left:366.3px"><svg width="15" height="15" viewBox="0 0 15 15" fill="none" stroke-linecap="round" stroke-linejoin="round"><path d="M14.300 7.500V.700H.700v13.600h3.300" stroke="#c8a45a" stroke-width="1.200"/><path d="M3.500 6.500l2.500-2.500 2 1.300 3-2.800" stroke="#c8a45a" stroke-width="1"/><path d="M4.500 10V8M7 10V7M9.500 10V6" stroke="#c8a45a" stroke-width="1.100"/><path d="M6 11.500v3M14.300 11.500v3M6.500 13h7.300" stroke="#c8a45a" stroke-width=".900"/><path d="M6.500 13l1.800-1v2zM13.800 13l-1.800-1v2z" fill="#c8a45a" stroke="none"/></svg><span>测量统计</span></div><div class="sep" style="left:392.8px"></div><div class="ti" style="left:420.0px"><svg width="14" height="14" viewBox="0 0 14 14" fill="none" stroke-linecap="round" stroke-linejoin="round"><rect x="4.800" y=".700" width="8.500" height="8.500" stroke="#c8a45a" stroke-width="1.200"/><rect x=".700" y="4.800" width="8.500" height="8.500" stroke="#c8a45a" stroke-width="1.200" fill="#f1ede9"/></svg><span>图纸对比</span></div><div class="sep" style="left:447.0px"></div><div class="ti" style="left:473.3px"><svg style="margin-top:0.8px" width="18" height="18" viewBox="0 0 18 18" fill="none" stroke-linecap="round" stroke-linejoin="round"><rect x="0" y="0" width="18" height="18" rx="2.500" fill="#1f97dc" stroke="none"/><path d="M4.500 3.500h6l3 3v8h-9z" fill="#fff" stroke="none"/><text x="8.800" y="10" font-family="Liberation Sans,sans-serif" font-weight="700" font-size="3.800" text-anchor="middle" fill="#1f97dc" stroke="none">CAD</text><path d="M9 14.500l5.500-5.500 1.200 1.200-5.500 5.500-1.600.400z" fill="#fff" stroke="#1f97dc" stroke-width=".600"/></svg><span style="top:22.500px">编辑助手</span></div><div class="sep" style="left:500.0px"></div><div class="ti" style="left:527.2px"><svg width="15" height="15" viewBox="0 0 15 15" fill="none" stroke-linecap="round" stroke-linejoin="round"><rect x=".700" y=".700" width="13.600" height="13.600" stroke="#c8a45a" stroke-width="1.200"/><path d="M5 5.300l2.200 3.700H2.800z" stroke="#c8a45a" stroke-width=".900"/><circle cx="10.500" cy="4.300" r="1.900" stroke="#c8a45a" stroke-width=".900"/><rect x="8.600" y="8.800" width="3.800" height="2.800" stroke="#c8a45a" stroke-width=".900"/></svg><span>图形识别</span></div><div class="ti" style="left:567.5px"><svg width="14" height="13" viewBox="0 0 14 13" fill="none" stroke-linecap="round" stroke-linejoin="round"><path d="M.600.600h12.800v2.900H8.300v8.900H5.700V3.500H.600z" stroke="#2aa7e6" stroke-width="1"/></svg><span>文字</span></div><div class="ti" style="left:603.0px"><svg width="12" height="12" viewBox="0 0 12 12" fill="none" stroke-linecap="round" stroke-linejoin="round"><path d="M.800 11.200L11.200.800" stroke="#c8a45a" stroke-width="1.200"/></svg><span>画直线</span></div><div class="ti" style="left:638.7px"><svg width="14" height="12" viewBox="0 0 14 12" fill="none" stroke-linecap="round" stroke-linejoin="round"><rect x="5.500" y=".700" width="7.800" height="6.300" stroke="#2aa7e6" stroke-width="1.100"/><ellipse cx="6.500" cy="8.800" rx="4.300" ry="2.500" stroke="#2aa7e6" stroke-width="1.100" fill="#f1ede9"/><path d="M1 .800c2 0 3 2 1.500 3.500s.500 3 1.500 1" stroke="#2aa7e6" stroke-width="1"/></svg><span>形状</span></div><div class="ti" style="left:669.8px"><svg width="14" height="12" viewBox="0 0 14 12" fill="none" stroke-linecap="round" stroke-linejoin="round"><path d="M8.300.800l4.900 3.500-5.400 6.900H3.500L.800 9.200z" stroke="#2aa7e6" stroke-width="1.100"/><path d="M4.300 5.500l4.900 3.700" stroke="#2aa7e6" stroke-width="1.100"/><path d="M7.800 11.200h5" stroke="#2aa7e6" stroke-width="1.100"/><path d="M9 2.500l2.500 1.800M8 3.800l2.500 1.800M7 5l2.500 1.800" stroke="#2aa7e6" stroke-width=".500"/></svg><span>删除</span></div><div class="ti" style="left:710.3px"><svg width="15" height="12" viewBox="0 0 15 12" fill="none" stroke-linecap="round" stroke-linejoin="round"><path d="M.800 6.200C3 2.700 6 2.200 7.500 2.200s4.500.500 6.700 4c-2.200 3.500-5.200 4-6.700 4s-4.500-.500-6.700-4z" stroke="#2aa7e6" stroke-width="1.100"/><circle cx="7.500" cy="6.200" r="1.800" stroke="#2aa7e6" stroke-width="1.100"/><path d="M12.500.600L2.500 11.600" stroke="#2aa7e6" stroke-width="1.100"/></svg><span>隐藏标注</span></div><div class="ti" style="left:759.5px"><svg width="13" height="13" viewBox="0 0 13 13" fill="none" stroke-linecap="round" stroke-linejoin="round"><path d="M5 1.800H1.800q-1 0-1 1v8.400q0 1 1 1h8.400q1 0 1-1V8" stroke="#2aa7e6" stroke-width="1.200"/><path d="M12 .800L6.200 6.800M6 3v4h4M8.500.800h2" stroke="#2aa7e6" stroke-width="1.100"/></svg><span>导入导出</span></div><div class="ti" style="left:808.3px"><svg width="14" height="14" viewBox="0 0 14 14" fill="none" stroke-linecap="round" stroke-linejoin="round"><path d="M.800 12.800l1-4 6.500-6.500 2.200 2.200-3 3" stroke="#2aa7e6" stroke-width="1.100"/><path d="M.800 12.800l3.800-1 .500-.500" stroke="#2aa7e6" stroke-width="1.100"/><path d="M8.300 2.300L9.800.800l2.200 2.200-1.500 1.500" fill="#2aa7e6" stroke="#2aa7e6" stroke-width="1"/><path d="M1 12.600l1-3.800 1.300.300.400 1.200 1.200.400.300 1z" fill="#2aa7e6" stroke="none"/><circle cx="10" cy="10" r="3" stroke="#2aa7e6" stroke-width="1"/><circle cx="10" cy="10" r="1" stroke="#2aa7e6" stroke-width=".800"/><path d="M10 6.300v.800M10 12.900v.800M6.300 10h.800M12.900 10h.800M7.400 7.400l.600.600M12 12l.600.600M12.600 7.400l-.600.600M8 12l-.600.600" stroke="#2aa7e6" stroke-width="1"/></svg><span>标注设置</span></div><div class="ti" style="left:848.6px"><svg width="15" height="13" viewBox="0 0 15 13" fill="none" stroke-linecap="round" stroke-linejoin="round"><text x="7.700" y="5.600" font-family="Liberation Mono,monospace" font-weight="700" font-size="7.400" text-anchor="middle" fill="#2aa7e6" stroke="none" textLength="14.500" lengthAdjust="spacingAndGlyphs">A:B</text><rect x=".600" y="8" width="13.800" height="4.400" stroke="#2aa7e6" stroke-width="1"/><path d="M2.800 8.300v2M5.100 8.300v1.300M7.500 8.300v2M9.900 8.300v1.300M12.200 8.300v2" stroke="#2aa7e6" stroke-width=".700"/></svg><span>比例</span></div><div class="sep" style="left:866.0px"></div><div class="ti" style="left:893.1px"><svg width="14" height="13" viewBox="0 0 14 13" fill="none" stroke-linecap="round" stroke-linejoin="round"><path d="M5 12.300H.700V.700h11v3" stroke="#2aa7e6" stroke-width="1.100"/><path d="M2.500 3h5M2.500 5.200h2" stroke="#2aa7e6" stroke-width=".900"/><circle cx="8.200" cy="7.200" r="3.700" stroke="#2aa7e6" stroke-width="1.100"/><path d="M11 10l2.700 2.700" stroke="#2aa7e6" stroke-width="1.300"/><text x="8.200" y="9.200" font-family="Liberation Sans,sans-serif" font-size="5" text-anchor="middle" fill="#2aa7e6" stroke="none">A</text></svg><span>文字查找</span></div><div class="ti" style="left:942.2px"><svg width="14" height="13" viewBox="0 0 14 13" fill="none" stroke-linecap="round" stroke-linejoin="round"><path d="M5.500 7.500H.700V.700h5.800v3" stroke="#2aa7e6" stroke-width="1.100"/><path d="M7 4.300h3.500l2.800 2.800v5.200H7z" stroke="#2aa7e6" stroke-width="1.100"/><path d="M10.300 4.500v2.800h2.800" stroke="#2aa7e6" stroke-width=".900"/><path d="M2 9.500q0 2 2.500 2.300M3.500 10.800l1.300 1-1.300 1" stroke="#2aa7e6" stroke-width=".900"/></svg><span>屏幕旋转</span></div><div class="ti" style="left:982.9px"><svg width="15" height="13" viewBox="0 0 15 13" fill="none" stroke-linecap="round" stroke-linejoin="round"><path d="M3.500 4V.700h8V4" stroke="#2aa7e6" stroke-width="1.100"/><rect x=".700" y="4" width="13.600" height="6" rx="1" stroke="#2aa7e6" stroke-width="1.100"/><rect x="3.500" y="7.500" width="8" height="4.800" stroke="#2aa7e6" stroke-width="1.100" fill="#f1ede9"/><path d="M5.200 9.300h4.600M5.200 10.800h3" stroke="#2aa7e6" stroke-width=".800"/></svg><span>打印</span></div><div class="sep" style="left:999.8px"></div><div class="ti" style="left:1017.8px"><svg width="13" height="14" viewBox="0 0 13 14" fill="none" stroke-linecap="round" stroke-linejoin="round"><circle cx="6.500" cy="4" r="3.200" stroke="#2aa7e6" stroke-width="1.200"/><path d="M.800 13.200c0-3.500 2.500-5.400 5.700-5.400s5.700 1.900 5.700 5.400z" stroke="#2aa7e6" stroke-width="1.200"/></svg><span>账号</span></div><div class="ti" style="left:1049.3px"><svg width="15" height="15" viewBox="0 0 14 14" fill="none" stroke-linecap="round" stroke-linejoin="round"><path d="M2 8V6.500a5 5 0 0 1 10 0V8" stroke="#2aa7e6" stroke-width="1.200"/><rect x=".800" y="7" width="2.600" height="4.200" rx="1" fill="#2aa7e6" stroke="#2aa7e6" stroke-width=".600"/><rect x="10.600" y="7" width="2.600" height="4.200" rx="1" fill="#2aa7e6" stroke="#2aa7e6" stroke-width=".600"/><path d="M12 11.200c0 1.500-1.500 2-3.500 2" stroke="#2aa7e6" stroke-width="1"/></svg><span>客服</span></div><div class="ti" style="left:1080.3px"><svg width="14" height="14" viewBox="0 0 14 14" fill="none" stroke-linecap="round" stroke-linejoin="round"><path d="M8.500.700H.700v12.600h12.600V5.500" stroke="#2aa7e6" stroke-width="1.100"/><path d="M4 10L13.200.800M9.300.700h4v4" stroke="#2aa7e6" stroke-width="1.100"/></svg><span>风格</span></div><div class="ti" style="left:1111.4px"><svg width="15" height="15" viewBox="0 0 15 15" fill="none" stroke-linecap="round" stroke-linejoin="round"><circle cx="7.500" cy="7.500" r="6.700" stroke="#2aa7e6" stroke-width="1.100"/><text x="7.500" y="11.300" font-family="Liberation Serif,serif" font-size="10.500" text-anchor="middle" fill="#2aa7e6" stroke="none">i</text></svg><span>关于</span></div><div class="ti" style="left:1142.8px"><svg width="13" height="14" viewBox="0 0 13 14" fill="none" stroke-linecap="round" stroke-linejoin="round"><path d="M6.500.800l5.500 3v6.400l-5.500 3-5.500-3V3.800z" stroke="#2aa7e6" stroke-width="1.100"/><path d="M1.200 4l5.300 2.900L11.800 4M6.500 6.900v6" stroke="#2aa7e6" stroke-width="1.100"/></svg><span>应用</span></div></div>
<div id="tabs" class="abs"><div id="tab1"><span style="position:absolute;left:16.500px;top:1.400px">专用宿舍楼给排水</span><svg class="abs" style="left:103.500px;top:5px" width="6" height="6" viewBox="0 0 6 6"><path d="M.300.300l5.400 5.400M5.700.300l-5.400 5.400" stroke="#555" stroke-width=".750"/></svg></div><svg class="abs" style="left:1256px;top:6px" width="9" height="7" viewBox="0 0 9 7"><path d="M0 0h9v1.200H0zM.500 2h8L4.500 6.500z" fill="#111"/></svg></div>
<div id="panel" class="abs"><div class="hd">测量</div><div class="x">×</div><div class="row" style="top:19.80px;border-top-color:#dedede"><svg width="11" height="11" viewBox="0 0 11 11" fill="none" stroke-linecap="round" stroke-linejoin="round"><path d="M2.500 2.500l6.500 6" stroke="#2aa7e6" stroke-width="0.9"/><path d="M1 3.500L4 .800M7.300 10.300l3-2.700" stroke="#2aa7e6" stroke-width="0.7"/><path d="M2.600 2.600l2.200.800-1.300 1.400zM8.900 8.400l-2.200-.800 1.300-1.400z" fill="#2aa7e6" stroke="none"/></svg><span>对齐</span></div><div class="row" style="top:39.67px"><svg width="12" height="8" viewBox="0 0 12 8" fill="none" stroke-linecap="round" stroke-linejoin="round"><path d="M.400.300v7.400M11.600.300v7.400M1 4h10" stroke="#2aa7e6" stroke-width="0.65"/><path d="M.800 4l2.500-1.300v2.600zM11.200 4L8.700 2.700v2.600z" fill="#2aa7e6" stroke="none"/></svg><span>线性</span></div><div class="row" style="top:59.54px"><svg width="12" height="11" viewBox="0 0 12 11" fill="none" stroke-linecap="round" stroke-linejoin="round"><path d="M.600.600L10.800 3.800v3.400H.600z" fill="#a9dbf5" stroke="#2aa7e6" stroke-width="0.6"/><path d="M2 1.500v5.500M4 2v5M6 2.600v4.400M8 3.200v3.800" stroke="#6cc3ef" stroke-width="0.5"/><path d="M.500 8v2.800M11 8v2.800M1 9.500h9.600" stroke="#2aa7e6" stroke-width="0.7"/><path d="M1 9.500l2-1.200v2.400zM10.600 9.500l-2-1.200v2.400z" fill="#2aa7e6" stroke="none"/></svg><span>面积</span></div><div class="row" style="top:79.41px"><svg width="12" height="11" viewBox="0 0 12 11" fill="none" stroke-linecap="round" stroke-linejoin="round"><rect x=".800" y=".500" width="10.400" height="6.300" fill="#9dd6f4" stroke="none"/><path d="M.800 2h10.400M.800 3.600h10.400M.800 5.200h10.400" stroke="#6cc3ef" stroke-width="0.5"/><path d="M.500 7.500v3.300M11.500 7.500v3.300M1 9.300h10" stroke="#2aa7e6" stroke-width="0.7"/><path d="M1 9.300l2-1.200v2.400zM11 9.300l-2-1.200v2.400z" fill="#2aa7e6" stroke="none"/></svg><span>矩形面积</span></div><div class="row" style="top:99.28px"><svg width="12" height="12" viewBox="0 0 12 12" fill="none" stroke-linecap="round" stroke-linejoin="round"><path d="M1.500 9.500L5 5h6.500" stroke="#2aa7e6" stroke-width="0.8"/><rect x=".500" y="9" width="2.500" height="2.500" stroke="#2aa7e6" stroke-width="0.7"/><path d="M5 .800l1.800 2M6.800.800L5 2.800M8 1.200h3.500M8 2.400h3.500M5 6.300l.900 1 .900-1M5.900 7.300v1.200M8 6.800h3.500M8 8h3.500" stroke="#2aa7e6" stroke-width="0.6"/></svg><span>坐标标注</span></div><div class="row" style="top:119.15px"><svg width="12" height="10" viewBox="0 0 12 10" fill="none" stroke-linecap="round" stroke-linejoin="round"><text x="6" y="4.300" font-family="Liberation Mono,monospace" font-weight="700" font-size="5.800" text-anchor="middle" fill="#2aa7e6" stroke="none" textLength="11.500" lengthAdjust="spacingAndGlyphs">A:B</text><rect x=".500" y="6" width="11" height="3.600" stroke="#2aa7e6" stroke-width="0.8"/><path d="M2.500 6.200v1.500M4.300 6.200v1M6 6.200v1.500M7.800 6.200v1M9.600 6.200v1.500" stroke="#2aa7e6" stroke-width="0.5"/></svg><span>设置标注比例</span></div><div class="row" style="top:139.02px"><svg width="10" height="10" viewBox="0 0 10 10" fill="none" stroke-linecap="round" stroke-linejoin="round"><path d="M1 9.300V6.500A5.500 5.500 0 0 1 6.500 1h2.800" stroke="#bf9a45" stroke-width="1.32"/><path d="M4 9.300V7.500A3.500 3.500 0 0 1 7.500 4h1.800" stroke="#bf9a45" stroke-width="1.32"/></svg><span>弧长</span></div><div class="row" style="top:158.89px"><svg width="12" height="11" viewBox="0 0 12 11" fill="none" stroke-linecap="round" stroke-linejoin="round"><path d="M1.500 1.500l4 4.500M3.500 10.500L11.500 3.300" stroke="#bf9a45" stroke-width="1.2"/><circle cx="1.500" cy="1.500" r="1" fill="#bf9a45" stroke="none"/><path d="M5.500 6l.200-1.600M5.500 6l-1.600-.100" stroke="#bf9a45" stroke-width="0.96"/></svg><span>点到直线的距离</span></div><div class="row" style="top:178.76px"><svg width="11" height="11" viewBox="0 0 11 11" fill="none" stroke-linecap="round" stroke-linejoin="round"><path d="M4.500 1.200L2 6l3 3.500h4.500" stroke="#bf9a45" stroke-width="1.08" stroke-dasharray="1.200 .800"/><circle cx="4.500" cy="1.300" r="1.200" fill="#bf9a45" stroke="none"/><circle cx="2" cy="6" r="1.200" fill="#bf9a45" stroke="none"/><circle cx="5" cy="9.500" r="1.200" fill="#bf9a45" stroke="none"/><circle cx="9.700" cy="9.500" r="1.200" fill="#bf9a45" stroke="none"/></svg><span>连续测量</span></div><div class="row" style="top:198.63px"><svg width="12" height="11" viewBox="0 0 12 11" fill="none" stroke-linecap="round" stroke-linejoin="round"><rect x=".700" y=".700" width="10.600" height="9.600" stroke="#bf9a45" stroke-width="1.56" stroke-dasharray="2.200 1"/><path d="M3 3.500h6M3 5.500h2.500M3 7.500h2.500" stroke="#bf9a45" stroke-width="0.96" stroke-dasharray="1.500 .700"/><path d="M7.500 6.500l2.800 2.800M7.500 6.500v2.500M7.500 6.500H10" stroke="#bf9a45" stroke-width="0.96"/></svg><span>批量测量</span></div><div class="row" style="top:218.50px"><svg width="12" height="10" viewBox="0 0 12 10" fill="none" stroke-linecap="round" stroke-linejoin="round"><path d="M3.500 1.500h6.500l-1.500 6h-7z" stroke="#bf9a45" stroke-width="1.1"/><circle cx="3.500" cy="1.500" r="1.100" fill="#bf9a45" stroke="none"/><circle cx="10" cy="1.500" r="1.100" fill="#bf9a45" stroke="none"/><circle cx="1.500" cy="7.500" r="1.100" fill="#bf9a45" stroke="none"/><path d="M5.500 5.300h6M9.500 3.300l2 2-2 2" stroke="#bf9a45" stroke-width="1.1"/></svg><span>查看分段长度</span></div><div class="row" style="top:238.37px"><svg width="12" height="12" viewBox="0 0 12 12" fill="none" stroke-linecap="round" stroke-linejoin="round"><path d="M5.500 1.300l4.700 4.700-4.700 4.700L.800 6z" stroke="#bf9a45" stroke-width="1.1"/><path d="M3 6.500l2 2M4.500 5l2 2" stroke="#bf9a45" stroke-width="0.8"/><path d="M6.500 7.500l4.500-5 1 1-4.500 5-1.500.500z" fill="#bf9a45" stroke="none"/><path d="M3 3.500L4.500 2" stroke="#bf9a45" stroke-width="1.4"/></svg><span>修改单个标注属性</span></div><div class="row" style="top:258.24px"><svg width="12" height="11" viewBox="0 0 12 11" fill="none" stroke-linecap="round" stroke-linejoin="round"><path d="M1 10V4Q1 1 4 1h7v5q0 4-4 4z" stroke="#bf9a45" stroke-width="1.2"/><path d="M2 8l6-6M3.500 9.500l6.500-6.500M5.500 10l5-5M1.500 5.500l4-4" stroke="#bf9a45" stroke-width="0.84"/></svg><span>面积(含弧线)</span></div><div class="row" style="top:278.11px"><svg width="13" height="11" viewBox="0 0 13 11" fill="none" stroke-linecap="round" stroke-linejoin="round"><path d="M1 7.500Q.500 2 5 1.500L11 1q1.500 3.500-1 6.500L6 10.500Q2 11 1 7.500z" stroke="#bf9a45" stroke-width="1.2"/><path d="M4 4h5v3.500H4z" stroke="#bf9a45" stroke-width="0.96"/><path d="M1.500 6l3-3M7 10l4.500-4.500M5 10.300l1-1M9.500 3.500L11 2" stroke="#bf9a45" stroke-width="0.84"/></svg><span>测量填充面积</span></div><div class="row" style="top:297.98px"><svg width="12" height="11" viewBox="0 0 12 11" fill="none" stroke-linecap="round" stroke-linejoin="round"><path d="M.800 3h7.700v7.300H.800zM.800 3l2.500-2.300h8L8.500 3M11.300.700v7.500l-2.800 2" stroke="#bf9a45" stroke-width="1.08"/><path d="M2.500 8.500l4-4M2.500 6l2-2M4.500 9l2.500-2.500" stroke="#bf9a45" stroke-width="0.84"/></svg><span>计算侧面积</span></div><div class="row" style="top:317.85px"><svg width="12" height="12" viewBox="0 0 12 12" fill="none" stroke-linecap="round" stroke-linejoin="round"><path d="M.800.800l10.500 2v8.400H2.500z" stroke="#bf9a45" stroke-width="1.2"/><rect x="4" y="4.300" width="5" height="4.500" stroke="#bf9a45" stroke-width="1.08"/><path d="M5 8l3-3M6.500 8.500l2-2" stroke="#bf9a45" stroke-width="0.72"/></svg><span>面积偏移</span></div><div class="row" style="top:337.72px"><svg width="11" height="11" viewBox="0 0 11 11" fill="none" stroke-linecap="round" stroke-linejoin="round"><circle cx="5.500" cy="5.500" r="4.800" stroke="#bf9a45" stroke-width="1.2"/><path d="M2 7l5-5M2.800 8.800l6-6M4.500 9.800l5-5M1 5l3.500-3.500" stroke="#bf9a45" stroke-width="1.08"/></svg><span>测量圆</span></div><div class="row" style="top:357.59px"><svg width="11" height="11" viewBox="0 0 11 11" fill="none" stroke-linecap="round" stroke-linejoin="round"><circle cx="5.500" cy="5.500" r="4.800" stroke="#bf9a45" stroke-width="1.2"/><path d="M5.500 5.500L2.500 2.500" stroke="#bf9a45" stroke-width="1.2"/><path d="M2.300 2.300l2 .400-1.600 1.600z" fill="#bf9a45" stroke="none"/></svg><span>半径</span></div><div class="row" style="top:377.46px"><svg width="12" height="9" viewBox="0 0 12 9" fill="none" stroke-linecap="round" stroke-linejoin="round"><path d="M1 8.200L8 .800l3.300 7.400z" stroke="#bf9a45" stroke-width="1.2"/><path d="M4.500 8.200a3.500 3.500 0 0 0-1.200-2.500" stroke="#bf9a45" stroke-width="0.9"/><circle cx="1.200" cy="8.200" r="1.100" fill="#bf9a45" stroke="none"/></svg><span>测量角度</span></div><div class="row" style="top:397.33px"><svg width="11" height="12" viewBox="0 0 11 12" fill="none" stroke-linecap="round" stroke-linejoin="round"><path d="M10.300 6V.600H.600v10.800h2.500" stroke="#bf9a45" stroke-width="1.2"/><path d="M2.800 3.200h2.500M6.300 3.200h2M2.800 5.200h4" stroke="#bf9a45" stroke-width="0.9"/><path d="M4 8v3.500M10.300 8v3.500M4.500 9.800h5.300" stroke="#bf9a45" stroke-width="0.9"/><path d="M4.500 9.800l1.600-.900v1.800zM9.800 9.800l-1.600-.900v1.800z" fill="#bf9a45" stroke="none"/></svg><span>测量统计</span></div></div>
<div id="float" class="abs"><svg class="abs" style="left:6px;top:7px" width="11" height="11" viewBox="0 0 11 11" fill="none" stroke="#e6e6e6" stroke-width=".900"><circle cx="3" cy="3" r="2.300"/><circle cx="8" cy="3" r="2.300"/><circle cx="3" cy="8" r="2.300"/><circle cx="8" cy="8" r="2.300"/></svg><div class="abs" style="left:22px;top:4px;width:1px;height:16px;background:#595959"></div><div class="lab">标注分类</div><div class="dd"><div class="sw"></div><div class="dn">DN100</div><svg class="abs" style="left:103px;top:7px" width="5" height="4" viewBox="0 0 5 4"><path d="M0 .500h5L2.500 3.500z" fill="#fff"/></svg></div><svg class="abs" style="left:185px;top:6px" width="78" height="13" viewBox="0 0 78 13" fill="none" stroke="#e6e6e6" stroke-width="1" stroke-linejoin="round"><path d="M6 2H1.500v7.500H10V6"/><path d="M4.500 7.500L5 5.500 10 .800l1.500 1.500L6.500 7z"/><path d="M1 11.500h9.500"/><path d="M27.500 1v10M22.500 6h10M26 2.500l1.500-1.500 1.500 1.500M26 9.500l1.500 1.500 1.500-1.500M24 4.500L22.500 6 24 7.500M31 4.500L32.500 6 31 7.500"/><rect x="46.500" y="1" width="6" height="7.500" rx="1"/><path d="M46.500 3.500h-1.500q-1 0-1 1v5.500q0 1 1 1h4q1 0 1-1V8.500"/><path d="M66 1.500h4.500v2.500M66 1.500v7h2.500"/><rect x="68.500" y="4.500" width="6" height="6.500" rx=".800"/><path d="M70 6.500h3"/></svg></div>
<div id="btabs" class="abs"><svg class="abs" style="left:0;top:0" width="120" height="16" viewBox="0 0 120 16"><path d="M0.300 .400L5 14.200h43L52.800 .400z" fill="#000"/><path d="M52.800 .400l3.700 14h42.400l4.600-14z" fill="#fff" stroke="#555" stroke-width=".800"/><text x="27.300" y="11.300" font-size="9.200" text-anchor="middle" fill="#fff" font-family="Liberation Sans,Noto Sans CJK SC,sans-serif">模型</text><text x="78.800" y="11.300" font-size="9.200" text-anchor="middle" fill="#111" font-family="Liberation Sans,Noto Sans CJK SC,sans-serif">建筑图纸</text></svg></div>
<div id="status" class="abs"><div class="s" id="coord" style="left:5.5px;font-family:'Liberation Serif',serif;font-size:9px;color:#444;word-spacing:1.9px;letter-spacing:0.05px">x = -309595 y = 88894</div><div class="abs" style="left:214px;top:0;width:1px;height:19.3px;background:#dcd8d4"></div><div class="abs" style="left:324px;top:0;width:1px;height:19.3px;background:#dcd8d4"></div><div class="s" style="left:327.400px;font-size:8.750px;font-family:'Liberation Serif','Noto Serif CJK SC',serif">模型中的标注比例<span style="letter-spacing:1.500px;margin-left:1px">:1</span></div><div class="abs" style="left:1180px;top:0;width:1px;height:19.3px;background:#dcd8d4"></div><div class="abs" style="left:1202px;top:0;width:1px;height:19.3px;background:#dcd8d4"></div><div class="abs" style="left:1225px;top:0;width:1px;height:19.3px;background:#dcd8d4"></div><div class="abs" style="left:1247px;top:0;width:1px;height:19.3px;background:#dcd8d4"></div><svg class="abs" style="left:1186px;top:4.300px" width="11" height="11" viewBox="0 0 11 11" fill="none" stroke="#c8a45a" stroke-width=".900"><path d="M1 1.500h6.500l2.500 2.500v6H1z"/><path d="M3 9V3h5" stroke-width=".700"/><text x="6" y="7.500" font-size="3.500" fill="#c8a45a" stroke="none" text-anchor="middle" font-family="Liberation Sans,sans-serif">PDF</text></svg><svg class="abs" style="left:1208px;top:4.300px" width="11" height="11" viewBox="0 0 11 11" fill="none" stroke="#c8a45a" stroke-width=".900"><path d="M4 2.500H1V10h8.500V7"/><path d="M3.500 8c0-2.500 2-4 4.500-4V2.500L10.500 5 8 7.500V6C6 6 4.500 6.500 3.500 8z"/></svg><svg class="abs" style="left:1230px;top:3.800px" width="13" height="12" viewBox="0 0 13 12"><rect width="13" height="12" rx="1.500" fill="#1f97dc"/><path d="M3 4v4M3 6h3" stroke="#fff" stroke-width=".800" fill="none"/><circle cx="8.500" cy="6" r="1.500" stroke="#fff" stroke-width=".800" fill="none"/></svg><svg class="abs" style="left:1253.500px;top:4.300px" width="11" height="11" viewBox="0 0 11 11" fill="none" stroke="#2aa7e6" stroke-width="1"><rect x=".600" y=".600" width="9.800" height="9.800" rx="1.200"/><path d="M2.500 8h6" stroke-width="1.600"/></svg></div>
</body></html>
